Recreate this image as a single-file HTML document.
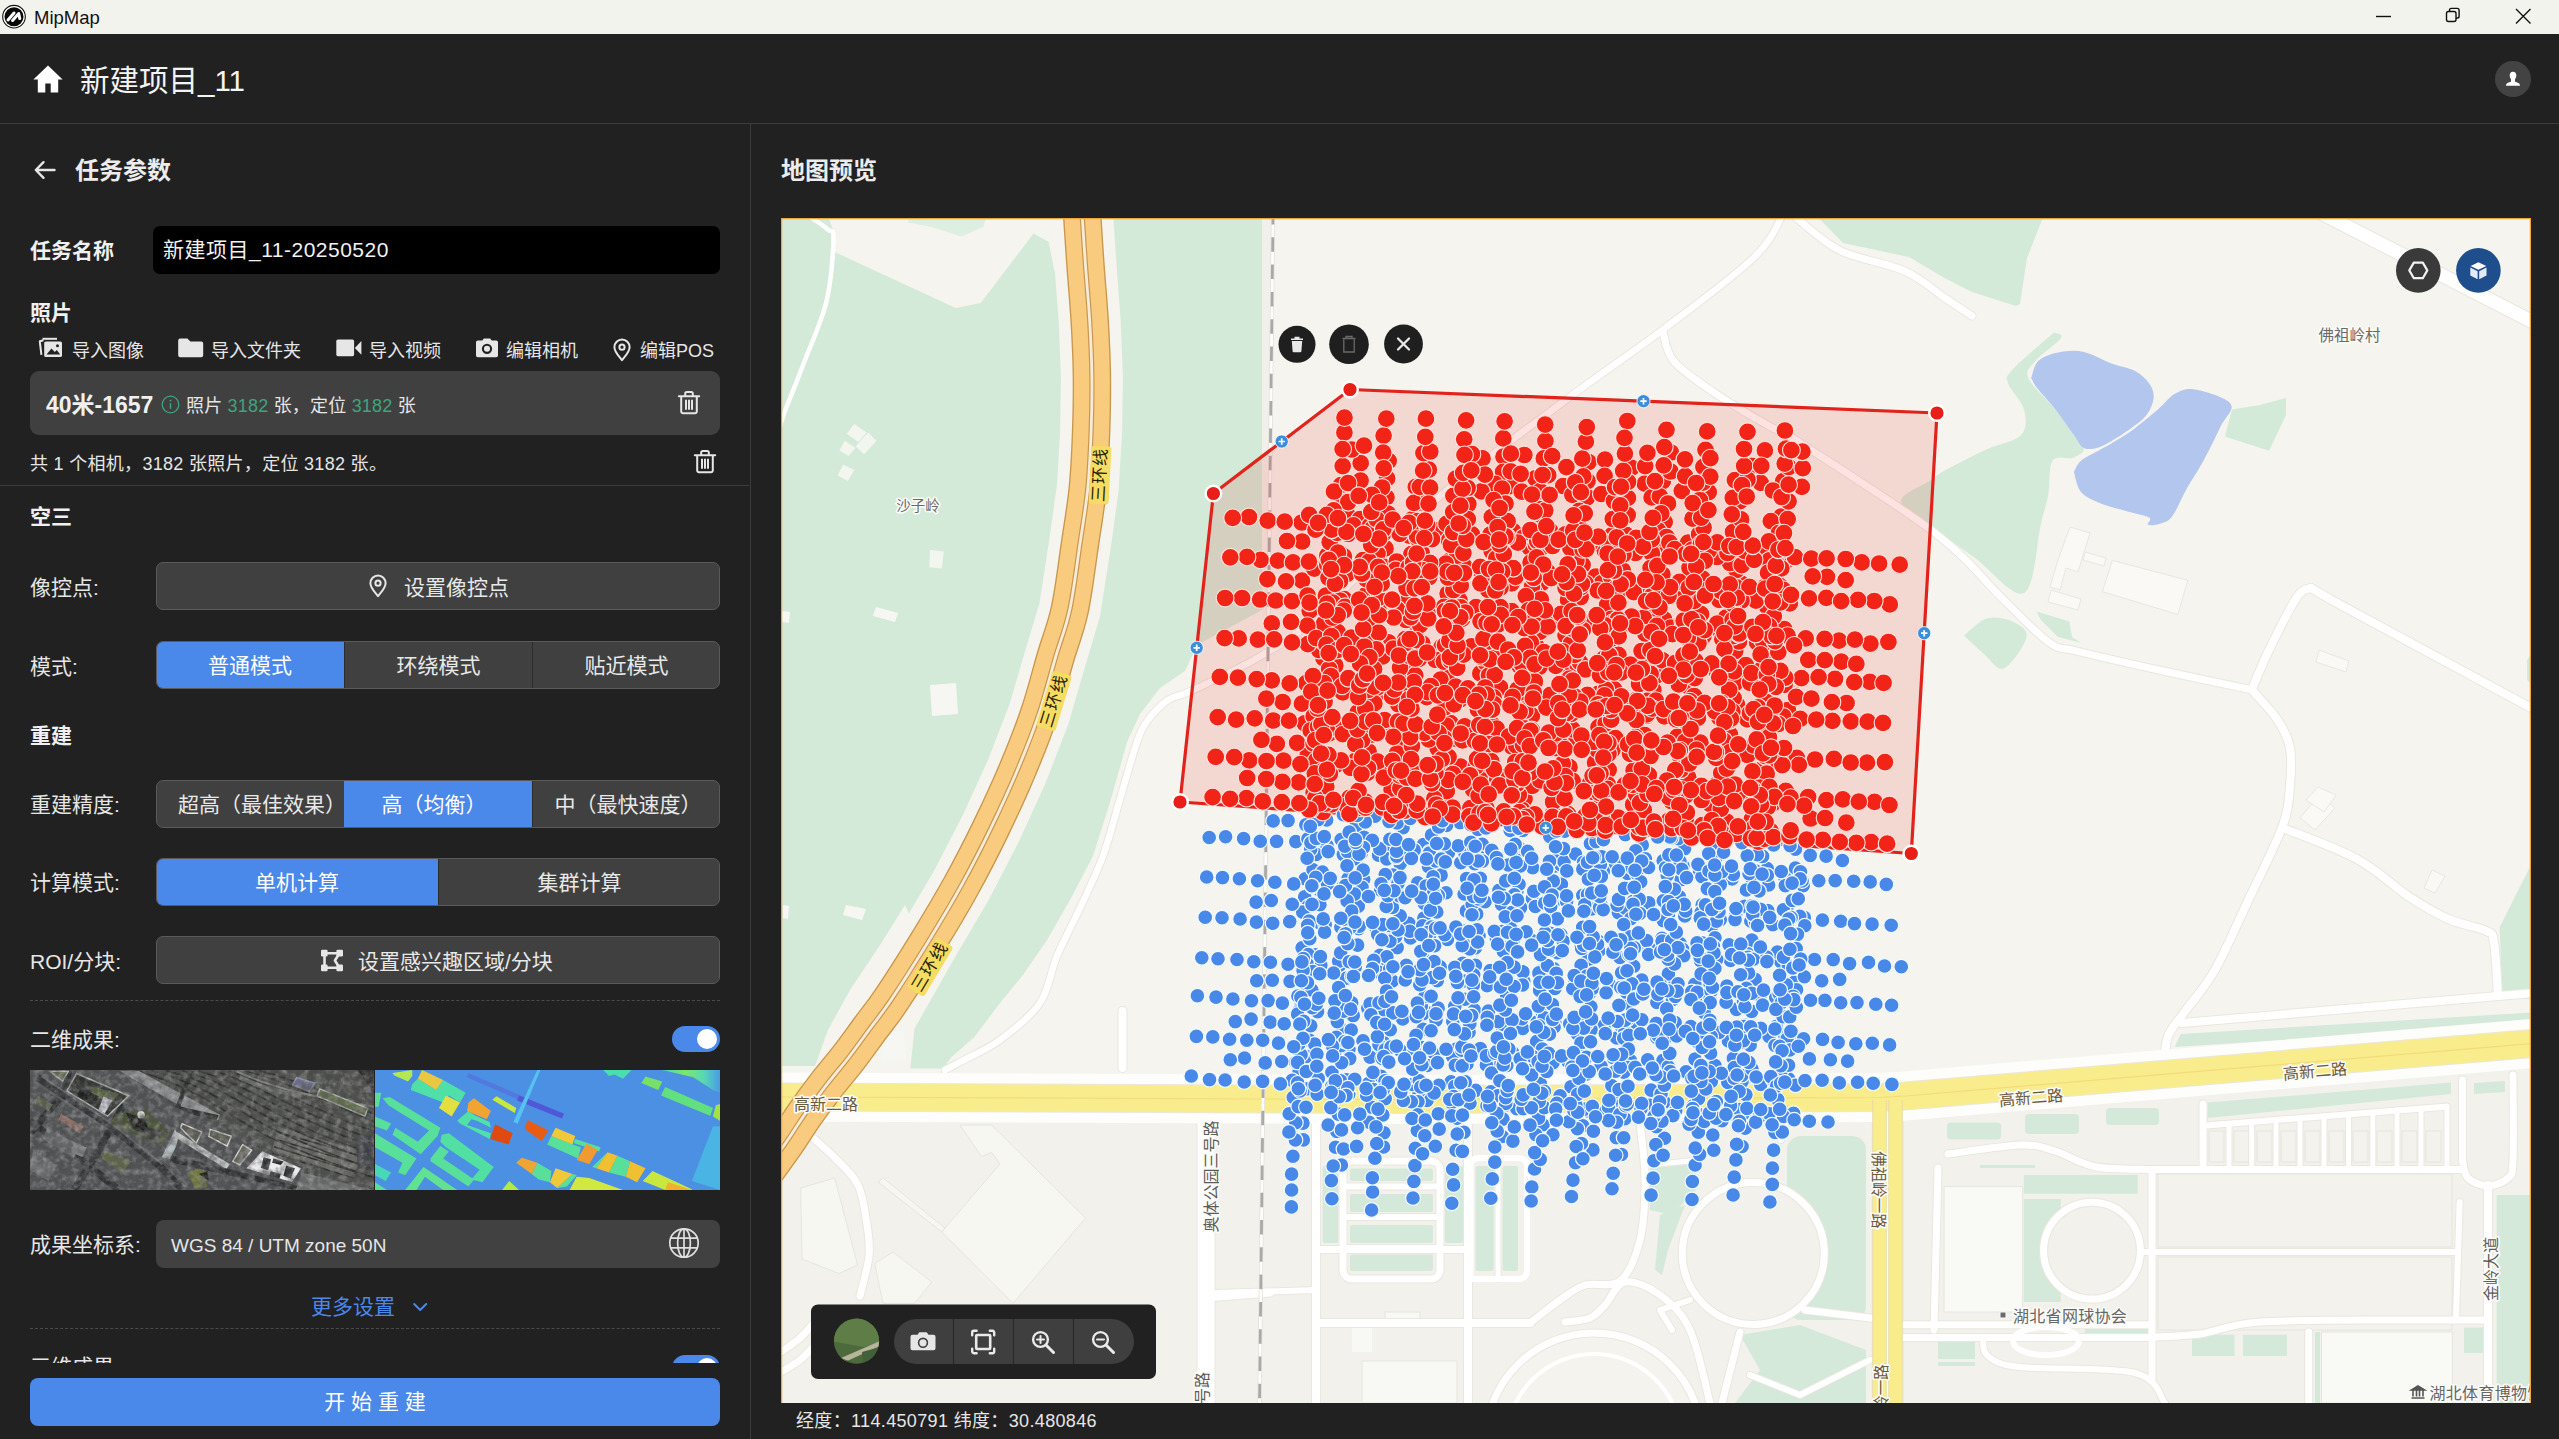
<!DOCTYPE html>
<html lang="zh-CN">
<head>
<meta charset="utf-8">
<title>MipMap</title>
<style>
*{box-sizing:border-box;margin:0;padding:0}
html,body{width:2559px;height:1439px;overflow:hidden;background:#212121}
body{position:relative;font-family:"Liberation Sans","Noto Sans CJK SC",sans-serif;color:#e6e6e6;font-size:21px}
.abs{position:absolute}
.t{position:absolute;white-space:nowrap}
.b{font-weight:700}
#titlebar{position:absolute;left:0;top:0;width:2559px;height:34px;background:#f3f3ee}
#titlebar .name{position:absolute;left:34px;top:1px;line-height:34px;font-size:18.500px;color:#111}
#hdr{position:absolute;left:0;top:34px;width:2559px;height:90px;background:#212121;border-bottom:1px solid #3c3c3c}
#left{position:absolute;left:0;top:124px;width:751px;height:1315px;background:#212121;border-right:1px solid #3c3c3c}
.btn{position:absolute;left:156px;width:564px;height:48px;background:#404040;border:1px solid #5a5a5a;border-radius:7px;overflow:hidden}
.seg{position:absolute;top:-1px;height:48px;line-height:49px;text-align:center;font-size:21px;color:#e8e8e8;white-space:nowrap}
.seg.on{background:#4a88ea;color:#fff}
.seg.sep{border-left:1px solid #2c2c2c}
.lbl{position:absolute;left:30px;font-size:21px;line-height:30px;color:#e6e6e6;white-space:nowrap}
.sec{position:absolute;left:30px;font-size:21px;line-height:30px;font-weight:700;color:#f0f0f0;white-space:nowrap}
.tool{position:absolute;font-size:18px;line-height:26px;color:#e6e6e6;white-space:nowrap}
.dash{position:absolute;left:30px;width:690px;height:0;border-top:1px dashed #4a4a4a}
.toggle{position:absolute;left:672px;width:48px;height:26px;border-radius:13px;background:#4a88ea}
.toggle i{position:absolute;right:3px;top:3px;width:20px;height:20px;border-radius:10px;background:#fff}
svg{display:block}
</style>
</head>
<body>
<div id="titlebar">
<svg class="abs" style="left:2px;top:4px" width="26" height="26" viewBox="0 0 26 26"><circle cx="12" cy="12.700" r="11.300" fill="#fff" stroke="#111" stroke-width="1.100"/><circle cx="12" cy="12.700" r="9.500" fill="#0a0a0a"/><path d="M6 15.900L12 9M10.600 16.500L16.700 9.500L17.800 14.600" fill="none" stroke="#fff" stroke-width="3" stroke-linecap="round" stroke-linejoin="round"/></svg>
<div class="name">MipMap</div>
<svg class="abs" style="left:2370px;top:3px" width="180" height="26" viewBox="2370 4 180 26" fill="none" stroke="#111" stroke-width="1.4"><path d="M2376 17.5h15"/><rect x="2446.500" y="12.5" width="9.5" height="10" rx="2"/><path d="M2449.500 12.500v-1.300a1.800 1.800 0 0 1 1.800 -1.800h6a1.800 1.800 0 0 1 1.800 1.800v6a1.800 1.800 0 0 1 -1.800 1.800h-1.300"/><path d="M2516 10l14.500 14.500M2530.500 10l-14.500 14.500"/></svg>
</div>
<div id="hdr"></div>
<svg class="abs" style="left:32px;top:64px" width="32" height="30" viewBox="0 0 32 30"><path d="M16 1.600 L30.600 15.400 H26.200 V28.600 H18.700 V19.400 H13.300 V28.600 H5.800 V15.400 H1.400 Z" fill="#fff"/></svg>
<div class="t" style="left:80px;top:59px;font-size:29.500px;line-height:44px;color:#f4f4f4">新建项目_11</div>
<svg class="abs" style="left:2495px;top:60.500px" width="36" height="36" viewBox="0 0 36 36"><circle cx="18" cy="18" r="18" fill="#434343"/><ellipse cx="18" cy="14.600" rx="3.300" ry="3.900" fill="#fff"/><path d="M11 24.800c0-2.600 2.400-3.200 5-4v-2.800h4v2.800c2.600 0.800 5 1.400 5 4z" fill="#fff"/></svg>
<div id="left"></div>
<svg class="abs" style="left:33px;top:158px" width="24" height="24" viewBox="0 0 24 24" fill="none" stroke="#e6e6e6" stroke-width="2.400" stroke-linecap="round" stroke-linejoin="round"><path d="M21.500 12H3M10.500 4.200L2.800 12l7.700 7.800"/></svg>
<div class="t b" style="left:75px;top:153px;font-size:24px;line-height:36px;color:#ececec">任务参数</div>

<div class="sec" style="top:236px">任务名称</div>
<div class="abs" style="left:153px;top:226px;width:567px;height:48px;background:#000;border-radius:7px"></div>
<div class="t" style="left:163px;top:235px;font-size:21px;line-height:30px;color:#f2f2f2;letter-spacing:0.500px">新建项目_11-20250520</div>

<div class="sec" style="top:298px">照片</div>

<svg class="abs" style="left:38px;top:337px" width="26" height="22" viewBox="0 0 26 22" fill="none" stroke="#e6e6e6" stroke-width="2.200" stroke-linejoin="round"><path d="M5.500 3.200l-3.700 1.100 1.600 13.600" stroke-width="2"/><rect x="6.200" y="4.500" width="17.800" height="15.500" rx="1.600" fill="#e6e6e6" stroke="none"/><path d="M8.500 17.500l5-6 3.300 3.600 2-2 3.400 4.400z" fill="#212121" stroke="none"/><circle cx="19.500" cy="8.700" r="1.500" fill="#212121" stroke="none"/><path d="M4.500 1.800l14.500 0" stroke-width="2"/></svg>
<div class="tool" style="left:72px;top:338px">导入图像</div>
<svg class="abs" style="left:178px;top:338px" width="26" height="20" viewBox="0 0 26 20"><path d="M2.200 0.600h7.200l3 2.800h10.800a2 2 0 0 1 2 2v11.800a2 2 0 0 1 -2 2h-21a2 2 0 0 1 -2 -2v-14.600a2 2 0 0 1 2 -2z" fill="#e6e6e6"/></svg>
<div class="tool" style="left:211px;top:338px">导入文件夹</div>
<svg class="abs" style="left:336px;top:339px" width="26" height="18" viewBox="0 0 26 18"><rect x="0.300" y="0.600" width="17.800" height="16.600" rx="1.600" fill="#e6e6e6"/><path d="M18.800 8.900l6.600-6.800v13.600z" fill="#e6e6e6"/></svg>
<div class="tool" style="left:369px;top:338px">导入视频</div>
<svg class="abs" style="left:475px;top:338px" width="24" height="20" viewBox="0 0 24 20"><path d="M7.200 2.600l1.700-2.100h6.200l1.700 2.100h4.400a1.800 1.800 0 0 1 1.800 1.800v13a1.800 1.800 0 0 1 -1.800 1.800h-18.400a1.800 1.800 0 0 1 -1.800 -1.800v-13a1.800 1.800 0 0 1 1.800 -1.800z" fill="#e6e6e6"/><circle cx="12" cy="10.800" r="4.100" fill="none" stroke="#212121" stroke-width="2.100"/></svg>
<div class="tool" style="left:506px;top:338px">编辑相机</div>
<svg class="abs" style="left:612px;top:338px" width="20" height="24" viewBox="0 0 20 24" fill="none" stroke="#e6e6e6" stroke-width="2"><path d="M10 22.200c-3.600-4.600-7.600-8.400-7.600-13a7.600 7.600 0 0 1 15.200 0c0 4.600-4 8.400-7.600 13z" stroke-linejoin="round"/><circle cx="10" cy="9.200" r="2.600"/></svg>
<div class="tool" style="left:640px;top:338px">编辑POS</div>

<div class="abs" style="left:30px;top:371px;width:690px;height:64px;background:#404040;border-radius:9px"></div>
<div class="t b" style="left:46px;top:388.500px;font-size:23px;line-height:32px;color:#f0f0f0">40米-1657</div>
<svg class="abs" style="left:161px;top:395px" width="19" height="19" viewBox="0 0 19 19" fill="none" stroke="#3fa37f" stroke-width="1.300"><circle cx="9.500" cy="9.500" r="8.300"/><path d="M9.500 8.200v5.600" stroke-width="1.500"/><circle cx="9.500" cy="5.600" r="0.900" fill="#3fa37f" stroke="none"/></svg>
<div class="t" style="left:186px;top:391.500px;font-size:18px;line-height:28px;color:#e6e6e6;letter-spacing:0.200px">照片 <span style="color:#3fa37f">3182</span> 张，定位 <span style="color:#3fa37f">3182</span> 张</div>
<svg class="abs" style="left:677px;top:390px" width="24" height="25" viewBox="0 0 24 25" fill="none" stroke="#e6e6e6" stroke-width="2" stroke-linecap="round" stroke-linejoin="round"><path d="M1.800 6.200h20.400M8.200 5.800v-2.200a1.600 1.600 0 0 1 1.600 -1.600h4.400a1.600 1.600 0 0 1 1.600 1.600v2.200M4.200 6.600v14.800a1.800 1.800 0 0 0 1.800 1.800h12a1.800 1.800 0 0 0 1.800 -1.800v-14.800M9 10.500v8.500M12 10.500v8.500M15 10.500v8.500"/></svg>

<div class="t" style="left:30px;top:450px;font-size:18px;line-height:28px;color:#e6e6e6;letter-spacing:0.300px">共 1 个相机，3182 张照片，定位 3182 张。</div>
<svg class="abs" style="left:693px;top:449px" width="24" height="25" viewBox="0 0 24 25" fill="none" stroke="#e6e6e6" stroke-width="2" stroke-linecap="round" stroke-linejoin="round"><path d="M1.800 6.200h20.400M8.200 5.800v-2.200a1.600 1.600 0 0 1 1.600 -1.600h4.400a1.600 1.600 0 0 1 1.600 1.600v2.200M4.200 6.600v14.800a1.800 1.800 0 0 0 1.800 1.800h12a1.800 1.800 0 0 0 1.800 -1.800v-14.800M9 10.500v8.500M12 10.500v8.500M15 10.500v8.500"/></svg>
<div class="abs" style="left:0;top:485px;width:749px;height:1px;background:#3c3c3c"></div>

<div class="sec" style="top:502px">空三</div>
<div class="lbl" style="top:573px">像控点:</div>
<div class="btn" style="top:562px"></div>
<svg class="abs" style="left:368px;top:574px" width="20" height="24" viewBox="0 0 20 24" fill="none" stroke="#e6e6e6" stroke-width="2"><path d="M10 22.200c-3.600-4.600-7.600-8.400-7.600-13a7.600 7.600 0 0 1 15.200 0c0 4.600-4 8.400-7.600 13z" stroke-linejoin="round"/><circle cx="10" cy="9.200" r="2.600"/></svg>
<div class="t" style="left:404px;top:573px;font-size:21px;line-height:30px;color:#e8e8e8">设置像控点</div>

<div class="lbl" style="top:652px">模式:</div>
<div class="btn" style="top:641px"><div class="seg on" style="left:-1px;width:188px">普通模式</div><div class="seg sep" style="left:187px;width:188px">环绕模式</div><div class="seg sep" style="left:375px;width:188px">贴近模式</div></div>

<div class="sec" style="top:721px">重建</div>
<div class="lbl" style="top:790px">重建精度:</div>
<div class="btn" style="top:780px"><div class="seg" style="left:-1px;width:188px;padding-left:22px">超高（最佳效果）</div><div class="seg on" style="left:187px;width:188px;text-indent:-8px">高（均衡）</div><div class="seg sep" style="left:375px;width:188px;text-indent:3px">中（最快速度）</div></div>
<div class="lbl" style="top:868px">计算模式:</div>
<div class="btn" style="top:858px"><div class="seg on" style="left:-1px;width:282px">单机计算</div><div class="seg sep" style="left:281px;width:282px">集群计算</div></div>
<div class="lbl" style="top:947px">ROI/分块:</div>
<div class="btn" style="top:936px"></div>
<svg class="abs" style="left:320px;top:949px" width="24" height="23" viewBox="0 0 24 23" fill="none" stroke="#e6e6e6" stroke-width="2.600" stroke-linejoin="round"><path d="M4.500 4.200h15l-4.600 7.300 4.600 7.300h-15z"/><g fill="#e6e6e6" stroke="none"><rect x="1" y="0.800" width="6.600" height="6.600" rx="1.200"/><rect x="16.400" y="0.800" width="6.600" height="6.600" rx="1.200"/><rect x="1" y="15.600" width="6.600" height="6.600" rx="1.200"/><rect x="16.400" y="15.600" width="6.600" height="6.600" rx="1.200"/></g></svg>
<div class="t" style="left:358px;top:947px;font-size:21px;line-height:30px;color:#e8e8e8">设置感兴趣区域/分块</div>
<div class="dash" style="top:1000px"></div>

<div class="lbl" style="top:1025px">二维成果:</div>
<div class="toggle" style="top:1026px"><i></i></div>
<svg class="abs" style="left:30px;top:1070px" width="344" height="120" viewBox="68 65 2447 860" preserveAspectRatio="none">
<defs><filter id="nz" x="0" y="0" width="100%" height="100%"><feTurbulence type="fractalNoise" baseFrequency="0.018 0.018" numOctaves="3" seed="11" result="n"/><feColorMatrix in="n" type="matrix" values="0 0 0 0 0.1  0 0 0 0 0.1  0 0 0 0 0.1  1.6 0 0 0 -0.55"/></filter>
<filter id="nz2" x="0" y="0" width="100%" height="100%"><feTurbulence type="fractalNoise" baseFrequency="0.022 0.022" numOctaves="3" seed="3" result="n"/><feColorMatrix in="n" type="matrix" values="0 0 0 0 0.8  0 0 0 0 0.8  0 0 0 0 0.8  0 1.5 0 0 -0.62"/></filter>
<clipPath id="c1"><rect x="68" y="65" width="2447" height="860"/></clipPath></defs>
<g clip-path="url(#c1)">
<rect x="68" y="65" width="2447" height="860" fill="#53565a"/>
<path d="M640 60 L2520 60 L2520 925 L2100 925 L1990 770 L1720 640 L1420 470 L1100 330 Z" fill="#4a4c49"/>
<path d="M1830 470 L2470 660 L2350 830 L1790 640 Z" fill="#6a6b66"/>
<g fill="none" stroke="#2d2f2b" stroke-width="12">
<path d="M820 70 C1300 200 1500 420 1800 560 S2300 760 2520 840"/>
<path d="M930 70 C1360 180 1570 390 1860 520 S2320 710 2520 780"/>
<path d="M1040 70 C1420 165 1640 360 1920 485 S2340 665 2520 720"/>
<path d="M1150 70 C1480 155 1700 330 1975 455 S2360 620 2520 665"/>
<path d="M1260 70 C1540 145 1765 300 2030 420 S2380 575 2520 610"/>
<path d="M1370 70 C1600 135 1830 275 2085 390 S2400 530 2520 555"/>
<path d="M1480 70 C1670 125 1900 250 2140 355 S2430 480 2520 500"/>
<path d="M1590 70 C1900 150 2200 300 2520 440"/>
<path d="M1700 70 C2000 150 2250 260 2520 385"/>
<path d="M1845 515 L2455 690M1825 565 L2430 745M1805 615 L2400 800M1790 660 L2370 840" stroke-width="10"/>
</g>
<path d="M1540 75 C1800 200 2100 260 2520 330" fill="none" stroke="#7d7f7a" stroke-width="14"/>
<path d="M1560 120 C1760 210 1900 230 2000 250" fill="none" stroke="#8a8c88" stroke-width="30" opacity="0.5"/>
<path d="M700 70 L840 70 L1420 385 L1405 425 L1150 330 Z" fill="#8e9093"/>
<path d="M980 290 L1410 390 L1395 425 L960 320 Z" fill="#2c2d2b"/>
<path d="M1232 70 L1200 70 L1062 440 L1092 452 Z" fill="#2b2d2c"/>
<path d="M68 65 L700 65 L1100 330 L1420 470 L1720 640 L1990 770 L2100 925 L68 925 Z" fill="#4e5052"/>
<g fill="none" stroke="#2e3033" stroke-width="50"><path d="M120 120 L640 470 L1000 760 L1150 925"/><path d="M345 65 L310 230 L68 520"/><path d="M740 300 L560 640 L380 925"/><path d="M68 430 L420 700 L700 925"/></g>
<g fill="none" stroke="#5e6064" stroke-width="14"><path d="M150 110 L650 450 L1010 740"/><path d="M100 150 L620 490"/></g>
<g stroke="#b4b7b1" stroke-width="10" fill="#2f312d">
<path d="M400 90 L770 250 L620 395 L330 215 Z"/><path d="M210 75 L340 75 L300 145 Z" fill="#5e6a4c"/>
<path d="M1150 450 L1290 510 L1250 590 L1140 480 Z" fill="#5c5b50" stroke="#d6d7d2"/><path d="M1350 490 L1500 540 L1470 610 L1340 540 Z" fill="#5c5b50" stroke="#d6d7d2"/><path d="M1580 600 L1645 640 L1560 745 L1510 720 Z" fill="#6b685d" stroke="#d6d7d2"/>
<path d="M2130 200 L2470 340 L2450 395 L2110 250 Z" fill="#5f6d4a"/><path d="M1965 120 L2095 160 L2055 218 L1935 172 Z" fill="#6b6e8a" stroke="#8c8ea4"/>
</g>
<path d="M680 380 L900 350 L1060 520 L1000 610 L640 450 Z" fill="#495336"/><path d="M750 370 L880 410 L930 540 L800 490 Z" fill="#1d1e1c"/><path d="M880 470 L1010 500 L980 580 L900 560 Z" fill="#3a3c3a"/>
<path d="M520 185 L700 235 L650 300 L490 240 Z" fill="#54623a"/><path d="M420 185 L560 255 L520 315 L370 235 Z" fill="#1f201f"/>
<path d="M600 640 L790 720 L720 800 L580 700 Z" fill="#5f6947"/><path d="M1180 800 L1300 760 L1330 900 L1250 925 Z" fill="#6f7440"/><path d="M1270 810 L1330 790 L1340 860 Z" fill="#1c1c18"/>
<path d="M590 255 L655 280 L600 375 L555 352 Z" fill="#cfd1dc"/><circle cx="858" cy="385" r="26" fill="#ececec"/>
<path d="M1100 490 L1135 560 L1060 705 L1005 690 Z" fill="#b3bbc0"/><path d="M1100 500 L1490 740 L1465 775 L1100 565 Z" fill="#c6c8c8"/><path d="M1120 560 L1440 760 L1090 690 Z" fill="#46484b"/>
<path d="M1090 680 L2100 925 L1950 925 L1060 725 Z" fill="#2d2f31"/>
<path d="M1720 648 L1995 770 L1932 868 L1608 770 Z" fill="#ededed"/><path d="M1730 690 L1782 705 L1762 782 L1710 767 Z M1800 700 L1872 720 L1852 746 L1790 730 Z M1890 750 L1952 770 L1922 842 L1870 822 Z M1780 790 L1852 810 L1842 842 L1770 822 Z" fill="#26282c"/>
<path d="M2400 65 L2520 65 L2520 240 Z" fill="#29282a"/><path d="M2000 800 L2515 925 L1960 925 Z" fill="#707272"/><path d="M2380 560 L2520 500 L2520 800 L2400 760 Z" fill="#3c3e44"/>
<path d="M190 480 L420 600 L380 700 L160 560 Z" fill="#66686a"/><path d="M90 640 L260 750 L200 860 L68 780 Z" fill="#6f7072"/><path d="M290 380 L450 470 L420 520 L270 420 Z" fill="#8f7166"/>
<path d="M380 580 L470 620 L440 690 L360 650 Z" fill="#7d868a"/><path d="M120 250 L230 310 L200 360 L100 300 Z" fill="#5a6048"/>
<rect x="68" y="65" width="2447" height="860" filter="url(#nz)"/>
<rect x="68" y="65" width="2447" height="860" filter="url(#nz2)" opacity="0.45"/>
</g>
</svg>
<svg class="abs" style="left:375px;top:1070px" width="345" height="120" viewBox="35 68 2455 857" preserveAspectRatio="none">
<defs><clipPath id="c2"><rect x="35" y="68" width="2455" height="857"/></clipPath>
<linearGradient id="gy" x1="0" y1="0" x2="1" y2="0"><stop offset="0" stop-color="#46d8c0"/><stop offset="0.400" stop-color="#7ce868"/><stop offset="0.720" stop-color="#56d8b4"/><stop offset="1" stop-color="#4a9ae8"/></linearGradient></defs>
<g clip-path="url(#c2)">
<rect x="35" y="68" width="2455" height="857" fill="#4c90e4"/>
<path d="M700 90 L1380 380 L1365 415 L690 120 Z" fill="#5566dc" opacity="0.55"/><path d="M1060 250 L1380 380 L1365 415 L1045 285 Z" fill="#5058d8"/>
<path d="M1190 68 L1212 68 L1050 452 L1020 440 Z" fill="#55c2f0"/>
<path d="M2440 470 L2490 470 L2490 925 L2290 860 Z" fill="#4ab4e4"/>
<g fill="#58e09a">
<path d="M300 170 L340 130 L470 210 L520 140 L680 230 L640 300 L560 250 L520 300 L290 210 Z" fill="#4fe0a8"/>
<path d="M90 270 L140 260 L500 480 L480 540 L360 670 L160 530 L180 480 L340 580 L420 500 L130 320 Z"/>
<path d="M35 230 L80 230 L60 330 L35 330 Z"/><path d="M35 400 L150 450 L120 500 L35 470 Z"/><path d="M35 520 L330 700 L250 820 L200 800 L230 730 L35 620 Z"/><path d="M35 740 L150 800 L110 860 L35 820 Z" fill="#48d8b8"/><path d="M35 870 L120 925 L35 925 Z"/>
<path d="M510 530 L560 520 L880 760 L800 870 L720 850 L780 780 L540 620 L500 580 Z" fill="#52e0a2"/>
<path d="M430 700 L500 610 L560 650 L520 700 L740 850 L700 900 L430 720 Z"/>
<path d="M250 925 L380 760 L620 925 L520 925 L390 830 L330 925 Z" fill="#60e290"/>
<path d="M620 430 L700 360 L740 390 L850 440 L860 480 L760 430 L720 420 L690 460 L860 520 L850 560 L640 450 Z" fill="#50e0a8"/>
<path d="M1290 540 L1440 600 L1500 620 L1480 700 L1260 600 Z"/><path d="M1460 560 L1640 620 L1630 650 L1450 590 Z"/>
<path d="M1150 810 L1190 730 L1290 790 L1280 870 L1200 850 Z"/><path d="M1440 810 L1470 820 L1400 900 L1330 910 Z"/>
<path d="M1760 680 L1850 720 L1820 830 L1700 800 Z"/><path d="M1580 760 L1690 655 L1610 770 Z"/>
<path d="M1660 68 L1860 68 L1800 130 L1740 100 L1700 110 Z" fill="#48e0b0"/><path d="M1960 115 L2080 150 L2050 210 L1930 160 Z" fill="#76e068"/>
<path d="M2100 190 L2440 340 L2420 395 L2070 250 Z" fill="#62e080"/>
</g>
<path d="M2080 68 L2490 68 L2490 230 L2440 210 L2300 120 Z" fill="url(#gy)"/><path d="M2460 320 L2490 310 L2490 430 L2440 400 Z" fill="#a4e244"/>
<path d="M160 90 L300 68 L300 110 L270 150 L170 105 Z" fill="#b4e850"/>
<path d="M370 68 L520 140 L470 210 L340 130 Z" fill="#e8c840"/><path d="M540 250 L640 300 L580 400 L490 340 Z" fill="#e2e040"/>
<path d="M700 300 L740 270 L860 360 L830 420 L690 360 Z" fill="#f0a432"/>
<path d="M870 280 L900 255 L1040 340 L1030 375 Z" fill="#c8e840"/>
<path d="M890 455 L1015 520 L985 600 L855 560 Z" fill="#e04a10"/><path d="M1120 425 L1270 500 L1220 575 L1100 490 Z" fill="#e85c16"/>
<path d="M1320 480 L1460 540 L1440 600 L1290 540 Z" fill="#f0c83a"/>
<path d="M1540 595 L1620 640 L1560 740 L1470 710 Z" fill="#f09a32"/>
<path d="M1040 730 L1080 695 L1190 730 L1150 810 Z" fill="#f0a432"/>
<path d="M1320 770 L1440 810 L1330 910 L1280 870 Z" fill="#f0c83a"/>
<path d="M1690 655 L1760 680 L1700 800 L1610 770 Z" fill="#f0c030"/><path d="M1850 720 L1960 770 L1900 870 L1820 830 Z" fill="#f0c030"/>
<path d="M1470 830 L1560 840 L1800 925 L1420 925 Z" fill="#d0e840"/>
<path d="M1940 860 L2010 790 L2290 920 L2290 925 L2100 925 Z" fill="#c8e840"/><path d="M2120 870 L2290 925 L2100 925 Z" fill="#f0b030"/>
<path d="M940 925 L990 860 L1060 925 Z" fill="#b8e848"/>
</g>
</svg>
<div class="lbl" style="top:1230px">成果坐标系:</div>
<div class="abs" style="left:156px;top:1220px;width:564px;height:48px;background:#414141;border-radius:8px"></div>
<div class="t" style="left:171px;top:1231px;font-size:19px;line-height:30px;color:#e6e6e6">WGS 84 / UTM zone 50N</div>
<svg class="abs" style="left:668px;top:1227px" width="32" height="32" viewBox="0 0 32 32" fill="none" stroke="#e0e0e0" stroke-width="1.700"><circle cx="16" cy="16" r="14.200"/><ellipse cx="16" cy="16" rx="6.400" ry="14.200"/><path d="M16 1.800v28.400M2.600 11.200h26.800M2.600 20.800h26.800"/></svg>
<div class="t" style="left:311px;top:1292px;font-size:21px;line-height:30px;color:#4a88ea">更多设置</div>
<svg class="abs" style="left:412px;top:1301px" width="16" height="12" viewBox="0 0 16 12" fill="none" stroke="#4a88ea" stroke-width="2" stroke-linecap="round" stroke-linejoin="round"><path d="M2.200 3l6 6 6-6"/></svg>
<div class="dash" style="top:1328px"></div>
<div class="abs" style="left:0;top:1340px;width:749px;height:23px;overflow:hidden">
<div class="lbl" style="top:12px">三维成果:</div>
<div class="toggle" style="top:15px"><i></i></div>
</div>
<div class="abs" style="left:30px;top:1378px;width:690px;height:48px;background:#4a88ea;border-radius:8px;text-align:center;line-height:47px;font-size:21px;color:#fff;white-space:pre">开 始 重 建</div>
<div class="t b" style="left:781px;top:153px;font-size:24px;line-height:36px;color:#ececec">地图预览</div>
<div class="t" style="left:796px;top:1407px;font-size:18px;line-height:28px;color:#e6e6e6;letter-spacing:0.350px">经度：114.450791 纬度：30.480846</div>
<svg class="abs" style="left:781px;top:218px" width="1750" height="1185" viewBox="781 218 1750 1185" font-family="'Liberation Sans','Noto Sans CJK SC',sans-serif">
<defs><clipPath id="mc"><rect x="781" y="218" width="1750" height="1185"/></clipPath></defs>
<g clip-path="url(#mc)">
<rect x="781" y="218" width="1750" height="1185" fill="#f5f4ee"/>
<polygon points="781,1117 1880,1117 2531,1062 2531,1403 781,1403" fill="#f2f1eb"/>
<polygon points="775,210 1050.6,210 1050.6,207 1054.6,267.8 1058.8,322.8 1060.9,377.4 1060.1,430.9 1057,484.9 1049.3,539.1 1039.4,603.5 1025.9,648.2 1009.6,704.1 988.4,759 963.1,814.5 934.5,870 901.6,925.8 865.3,982.7 845,1010.1 824.5,1038.1 828,1066 775,1066" fill="#d3ead8"/>
<polygon points="827.8,215.6 834.8,235 833.9,251.7 955.7,307.9 980.7,303.1 1033.5,233.6 1048.8,242 1054.4,271.2 1066.9,271.2 1066.9,215.6" fill="#f5f4ee"/>
<polygon points="908.4,215.6 986.3,215.6 983.5,226.7 961.3,236.4 930.7,226.7 908.4,222.5" fill="#dcefe0"/>
<polygon points="905,905 880,945 850,990 828,1030 815,1066 880,1066 930,960" fill="#f5f4ee"/>
<path d="M808.4 215.6C811.6 217.9 823.7 225.5 827.8 229.5C832 233.4 833.6 227.1 833.4 239.2C833.2 251.2 831.5 280.7 826.4 301.7C821.3 322.8 810 346.7 802.8 365.7C795.6 384.7 787.5 404.1 783.3 415.7C779.2 427.3 778.7 431.9 777.8 435.2" fill="none" stroke="#fff" stroke-width="4.500" stroke-linecap="round"/>
<polygon points="854.2,424.1 866.7,432.4 858.4,442.1 846.7,433.8" fill="#f3f5ef"/>
<polygon points="868.1,432.4 876.5,440.7 864,454.6 855.6,446.3" fill="#f3f5ef"/>
<polygon points="844.5,440.7 855.6,447.7 848.7,456 839.5,450.5" fill="#f3f5ef"/>
<polygon points="843.1,464.4 854.2,469.9 847.8,481.1 837.6,475.5" fill="#f3f5ef"/>
<polygon points="929.9,549.7 943.8,551.4 941.8,568.6 929.3,567.2" fill="#f3f5ef"/>
<polygon points="930,685 956,683 958,714 932,716" fill="#f6f7f2"/>
<polygon points="876,607 898,613 895,622 873,616" fill="#f6f7f2"/>
<polygon points="782,611 790,612 789,623 782,622" fill="#f6f7f2"/>
<polygon points="846,905 866,909 862,920 843,915" fill="#f6f7f2"/>
<polygon points="783,905 789,906 788,919 783,918" fill="#f6f7f2"/>
<polygon points="880,1030 904,1031 906,1060 881,1061" fill="#f6f7f2"/>
<polygon points="1112.4,210 1112.4,203 1116.4,263.4 1120.6,319.2 1122.9,376.6 1122.1,433.1 1118.6,491.1 1110.7,548.1 1100,616.5 1085.3,665.8 1068.4,723.9 1045.6,783 1018.9,841.5 988.7,900 954.4,958.2 914.6,1028.5 910.3,1068.4 943,1068.4 951.6,1057 974.4,1037 1000,1003 1023,975 1047,940 1070,900 1093,856 1111,799 1127,742 1140,714 1160,688 1185,671 1197,645 1262,610 1262,210" fill="#d3ead8"/>
<rect x="1262" y="218" width="9" height="400" fill="#f1f0ea"/>
<polygon points="1811,210 2046,210 2027,258 2020,304 2016,306 1972,292 1944.5,278 1909,257 1843,243" fill="#d3ead8"/>
<path d="M2054 332.5C2055.2 333.4 2064.1 333.2 2061 338C2057.9 342.8 2040.9 354.3 2035.4 361C2030 367.7 2025 369.9 2028.3 378C2031.6 386.1 2047.8 399.9 2055.4 409.4C2063 418.9 2069.2 428.4 2073.9 435C2078.6 441.6 2084 445.5 2083.8 449.3C2083.6 453.1 2077.7 456 2072.5 457.9C2067.3 459.8 2056.6 454.5 2052.5 460.7C2048.4 466.9 2050.1 484.6 2048.2 495C2046.3 505.4 2045 507.1 2041 523.4C2037 539.7 2035 587.2 2024 593C2013 598.8 1990.7 569.3 1975 558C1959.3 546.7 1942.3 534.5 1930 525C1917.7 515.5 1901 508.4 1901 501C1901 493.6 1922.3 486 1930 480.7C1937.7 475.4 1937.5 474.5 1947 469.3C1956.5 464.1 1974.6 455 1987 449.3C1999.4 443.6 2015 441.6 2021.2 435C2027.4 428.4 2026.2 417.9 2024 409.4C2021.8 400.9 2010.2 390.4 2008.3 383.8C2006.4 377.2 2005 378.1 2012.6 369.5C2020.2 360.9 2047.1 338.7 2054 332.5 Z" fill="#d3ead8"/>
<polygon points="2232,409.4 2260,405 2286,398 2286,415 2269,450.7 2224.9,436.5" fill="#d3ead8"/>
<path d="M1964 635.6C1967.8 632.8 1978.7 620.9 1986.8 618.5C1994.9 616.1 2005.8 618.3 2012.4 621.4C2019 624.5 2028 629.2 2026.6 637C2025.2 644.8 2010.9 665.6 2003.8 668.4C1996.7 671.2 1990.6 659.5 1984 654C1977.4 648.5 1967.3 638.7 1964 635.6 Z" fill="#d3ead8"/>
<polygon points="2036.6,611.4 2069.4,621.4 2072,637 2080.8,642.7 2058,637 2040.9,620" fill="#d3ead8"/>
<polygon points="2531,865 2513.8,899 2499.6,927.6 2502.4,999 2531,999" fill="#d3ead8"/>
<polygon points="2531,655 2527,660 2527,680 2531,684" fill="#d3ead8"/>
<path d="M2031.1 378.1C2032.3 375.2 2033.8 365.3 2038.3 361C2042.8 356.7 2050.6 354 2058.2 352.5C2065.8 351 2074.8 350 2083.8 351.9C2092.8 353.8 2103.8 360.6 2112.3 363.8C2120.9 367 2128.9 367.7 2135.1 371C2141.3 374.3 2146.3 379.3 2149.4 383.8C2152.5 388.3 2154.1 392.8 2153.6 398C2153.1 403.2 2150.5 409.9 2146.5 415.1C2142.5 420.3 2137 424.2 2129.4 429.4C2121.8 434.6 2108.5 443.4 2100.9 446.5C2093.3 449.6 2088.3 449.8 2083.8 447.9C2079.3 446 2078.6 441.5 2073.9 435.1C2069.2 428.7 2061.3 417 2055.4 409.4C2049.5 401.8 2042.3 394.7 2038.3 389.5C2034.2 384.3 2032.3 380 2031.1 378.1 Z" fill="#b3c6ee"/>
<path d="M2073.9 472.1C2075.1 470.2 2076.5 464.5 2081 460.7C2085.5 456.9 2092.8 454.1 2100.9 449.3C2109 444.6 2119.9 438.9 2129.4 432.2C2138.9 425.5 2150.3 415.8 2157.9 409.4C2165.5 403 2168.8 397.1 2175 393.8C2181.2 390.5 2185.6 387.9 2194.9 389.5C2204.2 391.1 2226.3 397.5 2230.6 403.7C2234.9 409.9 2225.1 417 2220.6 426.5C2216.1 436 2209.2 450.2 2203.5 460.7C2197.8 471.1 2191.6 479.9 2186.4 489.2C2181.2 498.5 2176.5 510.6 2172.2 516.3C2167.9 522 2164.8 522 2160.8 523.4C2156.8 524.8 2149.9 525.8 2148 524.8C2146.1 523.8 2152.5 519.8 2149.4 517.7C2146.3 515.6 2137.5 514.4 2129.4 512C2121.3 509.6 2109 506.7 2100.9 503.4C2092.8 500.1 2085.5 497.2 2081 492C2076.5 486.8 2075.1 475.4 2073.9 472.1 Z" fill="#b3c6ee"/>
<polygon points="2112.3,560.4 2187.8,580.3 2177.9,614.5 2102.4,591.7" fill="#faf9f5" stroke="#e8e7e0" stroke-width="1"/>
<polygon points="2051,590 2081,599 2078,610 2048,602" fill="#faf9f5" stroke="#e8e7e0" stroke-width="1"/>
<polygon points="2070,527 2090,533 2078,572 2066,568 2060,590 2050,587 2058,560" fill="#faf9f5" stroke="#e8e7e0" stroke-width="1"/>
<polygon points="2085,552 2106,558 2104,566 2083,560" fill="#faf9f5" stroke="#e8e7e0" stroke-width="1"/>
<polygon points="2319,650 2349,661 2346,672 2316,662" fill="#faf9f5" stroke="#e8e7e0" stroke-width="1"/>
<polygon points="2319,795 2335,808 2315,830 2300,818" fill="#faf9f5" stroke="#e8e7e0" stroke-width="1"/>
<polygon points="2432,870 2445,876 2435,893 2424,888" fill="#faf9f5" stroke="#e8e7e0" stroke-width="1"/>
<polygon points="2306,800 2318,787 2336,795 2324,812" fill="#faf9f5" stroke="#e8e7e0" stroke-width="1"/>
<polygon points="2174.8,1047 2180.5,1034 2531,1012.5 2531,1024" fill="#d5e9da"/>
<polygon points="2207.5,1102.6 2451,1082.6 2451,1094 2207.5,1118" fill="#d5e9da"/>
<polygon points="2474,1083 2505,1081 2505,1092 2474,1094" fill="#d5e9da"/>
<rect x="1947" y="1122.5" width="54" height="17.1" fill="#d5e9da" rx="4"/>
<rect x="2025" y="1114" width="54" height="20" fill="#d5e9da" rx="4"/>
<rect x="2106" y="1108" width="53" height="17" fill="#d5e9da" rx="4"/>
<rect x="1787" y="1136" width="79" height="184" fill="#d5e9da" rx="14"/>
<rect x="2023.8" y="1175" width="113.9" height="18.7" fill="#d5e9da"/>
<rect x="2023.8" y="1199" width="37" height="103" fill="#d5e9da"/>
<rect x="2496.7" y="1195" width="34.3" height="208" fill="#d5e9da"/>
<rect x="2192" y="1334.8" width="42.6" height="21.2" fill="#d5e9da"/>
<rect x="2243" y="1334.8" width="44" height="21.2" fill="#d5e9da"/>
<rect x="1938" y="1342" width="37" height="17" fill="#d5e9da"/>
<rect x="2464" y="1327.6" width="20" height="25.4" fill="#d5e9da"/>
<rect x="1938" y="1362" width="37" height="4" fill="#d5e9da"/>
<rect x="1980" y="1165" width="55" height="3" fill="#d5e9da"/>
<rect x="2085" y="1328" width="65" height="6" fill="#d5e9da"/>
<rect x="2315" y="1332" width="5" height="71" fill="#d5e9da"/>
<rect x="1350" y="1168.5" width="83" height="12.5" fill="#d5e9da" rx="2"/>
<rect x="1350" y="1194" width="83" height="18" fill="#d5e9da" rx="2"/>
<rect x="1350" y="1225" width="83" height="18" fill="#d5e9da" rx="2"/>
<rect x="1350" y="1254.6" width="83" height="16.4" fill="#d5e9da" rx="2"/>
<rect x="1322.7" y="1166" width="15.3" height="77" fill="#d5e9da" rx="2"/>
<rect x="1445" y="1166" width="18" height="77" fill="#d5e9da" rx="2"/>
<rect x="1475.6" y="1166" width="18" height="105" fill="#d5e9da" rx="2"/>
<rect x="1502.6" y="1166" width="15.4" height="105" fill="#d5e9da" rx="2"/>
<polygon points="1650,1168 1690,1164 1700,1185 1672,1215 1650,1210" fill="#d5e9da"/>
<polygon points="1660,1215 1685,1205 1668,1250 1662,1275 1655,1270" fill="#d5e9da"/>
<polygon points="1740,1335 1800,1325 1866,1350 1866,1403 1735,1403 1760,1370" fill="#d5e9da"/>
<polygon points="1290,1128 1312,1128 1312,1160 1290,1160" fill="#f2f1eb"/>
<polygon points="960,1125 991.5,1125 1085.5,1218 1013,1303.4 941.7,1232 1000,1164 991.5,1152.4 981.5,1156.7" fill="#f7f7f2" stroke="#e6e5de" stroke-width="1"/>
<polygon points="878,1182 883.4,1178 945,1228 941.7,1232" fill="#f7f7f2" stroke="#e6e5de" stroke-width="1"/>
<polygon points="800.6,1188 834.8,1178 857.6,1265 839,1273.5 802,1259" fill="#f7f7f2" stroke="#e6e5de" stroke-width="1"/>
<polygon points="874.7,1263.5 893,1252 931.7,1282 914.6,1303.4 883,1303.4" fill="#f7f7f2" stroke="#e6e5de" stroke-width="1"/>
<rect x="1944" y="1186.6" width="78.4" height="125.4" fill="#f9f9f5" stroke="#e6e5de" stroke-width="1"/>
<rect x="2321.5" y="1332" width="131.1" height="71" fill="#f9f9f5" stroke="#e6e5de" stroke-width="1"/>
<rect x="1362" y="1361" width="95" height="42" fill="#f8f8f4" stroke="#e6e5de" stroke-width="1"/>
<rect x="1385" y="1312" width="35" height="10" fill="#f8f8f4" stroke="#e6e5de" stroke-width="1"/>
<rect x="1550" y="1392" width="100" height="11" fill="#f8f8f4" stroke="#e6e5de" stroke-width="1"/>
<rect x="1352" y="1327" width="20" height="25" fill="#f8f8f4"/>
<rect x="2439" y="1192" width="8" height="51" fill="#f8f8f4" stroke="#e6e5de" stroke-width="1"/>
<rect x="2439" y="1258" width="8" height="52" fill="#f8f8f4" stroke="#e6e5de" stroke-width="1"/>
<rect x="2158" y="1174" width="294" height="73" fill="#f3f2ec" stroke="#e6e5de" stroke-width="1"/>
<rect x="2158" y="1257" width="294" height="73" fill="#f3f2ec" stroke="#e6e5de" stroke-width="1"/>
<rect x="2209" y="1131" width="15" height="31" fill="#f3f2ec" stroke="#e6e5de" stroke-width="1"/>
<rect x="2234" y="1131" width="15" height="31" fill="#f3f2ec" stroke="#e6e5de" stroke-width="1"/>
<rect x="2257" y="1131" width="15" height="31" fill="#f3f2ec" stroke="#e6e5de" stroke-width="1"/>
<rect x="2281" y="1131" width="15" height="31" fill="#f3f2ec" stroke="#e6e5de" stroke-width="1"/>
<rect x="2305" y="1131" width="15" height="31" fill="#f3f2ec" stroke="#e6e5de" stroke-width="1"/>
<rect x="2329" y="1131" width="15" height="31" fill="#f3f2ec" stroke="#e6e5de" stroke-width="1"/>
<rect x="2353" y="1131" width="15" height="31" fill="#f3f2ec" stroke="#e6e5de" stroke-width="1"/>
<rect x="2377" y="1131" width="15" height="31" fill="#f3f2ec" stroke="#e6e5de" stroke-width="1"/>
<rect x="2402" y="1131" width="15" height="31" fill="#f3f2ec" stroke="#e6e5de" stroke-width="1"/>
<rect x="2426" y="1131" width="15" height="31" fill="#f3f2ec" stroke="#e6e5de" stroke-width="1"/>
<path d="M1784 212C1779.1 219.5 1774.7 237.4 1754.5 257C1734.3 276.6 1693.9 306.2 1663 329.6C1632.1 353 1607.3 368.9 1569 397.6C1530.7 426.3 1475.2 465.4 1433 502C1390.8 538.6 1345 591.2 1316 617C1287 642.8 1279.8 644.7 1259 657C1238.2 669.3 1206.2 683.8 1191 691C1175.8 698.2 1175.2 695.2 1168 700C1160.8 704.8 1153.2 713 1148 720C1142.8 727 1141.7 728.8 1137 742C1132.3 755.2 1125.7 780 1120 799C1114.3 818 1109.7 837.8 1103 856C1096.3 874.2 1087.7 891.3 1080 908C1072.3 924.7 1063.7 940.2 1057 956C1050.3 971.8 1049.5 989 1040 1003C1030.5 1017 1013.3 1030.2 1000 1040C986.7 1049.8 969.2 1057 960 1062C950.8 1067 947.5 1068.7 945 1070" fill="none" stroke="#e9e7df" stroke-width="8.5" stroke-linecap="round" stroke-linejoin="round"/>
<path d="M1792 214C1799.8 220 1820.2 240.5 1839 250C1857.8 259.5 1886.9 263 1904.6 271C1922.3 279 1933.8 290.5 1945 298C1956.2 305.5 1967.5 313 1972 316" fill="none" stroke="#e9e7df" stroke-width="9" stroke-linecap="round" stroke-linejoin="round"/>
<path d="M1663 332C1665 337.1 1665 351.5 1674.8 362.4C1684.6 373.3 1706.1 387.1 1721.7 397.6C1737.3 408.2 1756 418.5 1768.6 425.7C1781.1 432.9 1769.3 423.1 1797 441C1824.7 458.9 1900.5 506.5 1935 533C1969.5 559.5 1984.7 581.7 2003.8 600C2022.9 618.3 2037 634.2 2049.4 642.7C2061.8 651.2 2059 646.6 2078 651.3C2097 656 2134.5 664.6 2163.4 671C2192.3 677.4 2237 686.6 2251.7 689.7" fill="none" stroke="#e9e7df" stroke-width="9" stroke-linecap="round" stroke-linejoin="round"/>
<path d="M2251.7 689.7C2254.8 682.8 2262.4 663.5 2270 648C2277.6 632.5 2290.2 607 2297 597C2303.8 587 2308.7 589.5 2311 588" fill="none" stroke="#e9e7df" stroke-width="10" stroke-linecap="round" stroke-linejoin="round"/>
<path d="M2311 588L2331.5 600L2535 710" fill="none" stroke="#e9e7df" stroke-width="10" stroke-linecap="round" stroke-linejoin="round"/>
<path d="M2323 214L2535 323" fill="none" stroke="#e9e7df" stroke-width="15" stroke-linecap="round" stroke-linejoin="round"/>
<path d="M2251.7 689.7C2256 694.7 2271 710 2277.4 719.7C2283.8 729.4 2287.9 737.1 2290 748C2292.1 758.9 2291.2 772.2 2290 785C2288.8 797.8 2289.8 806 2283 825C2276.2 844 2260.3 874.8 2248.9 899C2237.5 923.2 2225.2 951.9 2214.7 970.4C2204.2 988.9 2193.6 999.4 2186 1010C2178.4 1020.6 2172.5 1026.9 2169 1034C2165.5 1041.1 2165.7 1049.6 2165 1052.7" fill="none" stroke="#e9e7df" stroke-width="10" stroke-linecap="round" stroke-linejoin="round"/>
<path d="M2283 828C2295.3 833.2 2336.1 847.6 2357 859C2377.9 870.4 2393.2 886.3 2408.4 896.3C2423.6 906.3 2435.5 913.3 2448.3 919C2461.1 924.7 2477.7 926.7 2485.3 930.5C2492.9 934.3 2491.8 931.1 2493.9 942C2496 952.9 2497.3 987 2498 996" fill="none" stroke="#e9e7df" stroke-width="10" stroke-linecap="round" stroke-linejoin="round"/>
<path d="M2182 1023L2498 996L2535 993" fill="none" stroke="#e9e7df" stroke-width="10" stroke-linecap="round" stroke-linejoin="round"/>
<path d="M1122.5 1011L1122.5 1068" fill="none" stroke="#e9e7df" stroke-width="10" stroke-linecap="round" stroke-linejoin="round"/>
<path d="M812 1137C815.8 1140.5 827.3 1150 835 1158C842.7 1166 852.7 1173.8 858 1185C863.3 1196.2 865.2 1213.2 867 1225C868.8 1236.8 870.2 1244.2 869 1256C867.8 1267.8 861.5 1289.3 860 1296" fill="none" stroke="#e9e7df" stroke-width="9" stroke-linecap="round" stroke-linejoin="round"/>
<path d="M781 1352C784.2 1349.7 794.3 1343 800 1338C805.7 1333 812.5 1324.7 815 1322" fill="none" stroke="#e9e7df" stroke-width="9" stroke-linecap="round" stroke-linejoin="round"/>
<path d="M781 1372C784.2 1370 793.5 1365.3 800 1360C806.5 1354.7 816.7 1343.3 820 1340" fill="none" stroke="#e9e7df" stroke-width="9" stroke-linecap="round" stroke-linejoin="round"/>
<path d="M1206 1117L1206 1410" fill="none" stroke="#e9e7df" stroke-width="19" stroke-linecap="round" stroke-linejoin="round"/>
<path d="M1316 1120L1316 1410" fill="none" stroke="#e9e7df" stroke-width="10" stroke-linecap="round" stroke-linejoin="round"/>
<path d="M1468 1120L1468 1410" fill="none" stroke="#e9e7df" stroke-width="10" stroke-linecap="round" stroke-linejoin="round"/>
<path d="M1270 1293L1206 1298" fill="none" stroke="#e9e7df" stroke-width="9" stroke-linecap="round" stroke-linejoin="round"/>
<path d="M1216 1293L1316 1290" fill="none" stroke="#e9e7df" stroke-width="8" stroke-linecap="round" stroke-linejoin="round"/>
<path d="M1316 1323L1530 1323" fill="none" stroke="#e9e7df" stroke-width="10" stroke-linecap="round" stroke-linejoin="round"/>
<path d="M1316 1249.5L1468 1249.5" fill="none" stroke="#e9e7df" stroke-width="9" stroke-linecap="round" stroke-linejoin="round"/>
<rect x="1343" y="1161" width="97" height="118" rx="9" fill="none" stroke="#e9e7df" stroke-width="9"/>
<path d="M1343 1186.5L1440 1186.5" fill="none" stroke="#e9e7df" stroke-width="8" stroke-linecap="round" stroke-linejoin="round"/>
<path d="M1343 1217L1440 1217" fill="none" stroke="#e9e7df" stroke-width="8" stroke-linecap="round" stroke-linejoin="round"/>
<path d="M1343 1248L1440 1248" fill="none" stroke="#e9e7df" stroke-width="8" stroke-linecap="round" stroke-linejoin="round"/>
<path d="M1498 1160L1498 1279" fill="none" stroke="#e9e7df" stroke-width="7" stroke-linecap="round" stroke-linejoin="round"/>
<path d="M1530 1323C1535 1319.2 1550.8 1306.3 1560 1300C1569.2 1293.7 1575 1288.2 1585 1285C1595 1281.8 1610.8 1288.5 1620 1281C1629.2 1273.5 1635.8 1256.8 1640 1240C1644.2 1223.2 1645 1199.7 1645 1180C1645 1160.3 1640.8 1131.7 1640 1122" fill="none" stroke="#e9e7df" stroke-width="9" stroke-linecap="round" stroke-linejoin="round"/>
<path d="M1565 1322C1569.2 1321.3 1583.3 1320.8 1590 1318C1596.7 1315.2 1599.2 1311 1605 1305C1610.8 1299 1615.8 1283.7 1625 1282C1634.2 1280.3 1649.2 1287 1660 1295C1670.8 1303 1681.7 1312 1690 1330C1698.3 1348 1706.7 1390.8 1710 1403" fill="none" stroke="#e9e7df" stroke-width="9" stroke-linecap="round" stroke-linejoin="round"/>
<circle cx="1753.300" cy="1253.400" r="71" fill="#f2f1eb" stroke="#e9e7df" stroke-width="9"/>
<circle cx="1594" cy="1441" r="108" fill="#f4f3ee" stroke="#e9e7df" stroke-width="9"/>
<path d="M1690 1300L1660 1310L1672 1330" fill="none" stroke="#e9e7df" stroke-width="8" stroke-linecap="round" stroke-linejoin="round"/>
<path d="M1740 1332L1722 1403" fill="none" stroke="#e9e7df" stroke-width="9" stroke-linecap="round" stroke-linejoin="round"/>
<path d="M1805 1310L1870 1318" fill="none" stroke="#e9e7df" stroke-width="9" stroke-linecap="round" stroke-linejoin="round"/>
<path d="M1750 1375L1800 1395L1870 1360" fill="none" stroke="#e9e7df" stroke-width="8" stroke-linecap="round" stroke-linejoin="round"/>
<path d="M1648 1165L1700 1160" fill="none" stroke="#e9e7df" stroke-width="7" stroke-linecap="round" stroke-linejoin="round"/>
<path d="M1887.7 1110L1887.7 1410" fill="none" stroke="#e9e7df" stroke-width="32" stroke-linecap="round" stroke-linejoin="round"/>
<path d="M2146 1252L2454 1252" fill="none" stroke="#e9e7df" stroke-width="8" stroke-linecap="round" stroke-linejoin="round"/>
<path d="M2152 1169.5L2462 1169.5" fill="none" stroke="#e9e7df" stroke-width="9" stroke-linecap="round" stroke-linejoin="round"/>
<path d="M1948 1154C1960.2 1152.5 2003.2 1145.5 2021 1145C2038.8 1144.5 2042.7 1147.4 2055 1151C2067.3 1154.6 2078.8 1163.6 2095 1166.7C2111.2 1169.8 2142.5 1169 2152 1169.5" fill="none" stroke="#e9e7df" stroke-width="9" stroke-linecap="round" stroke-linejoin="round"/>
<path d="M2152 1169.5L2152 1379" fill="none" stroke="#e9e7df" stroke-width="9" stroke-linecap="round" stroke-linejoin="round"/>
<path d="M2203 1104L2203 1169.5" fill="none" stroke="#e9e7df" stroke-width="9" stroke-linecap="round" stroke-linejoin="round"/>
<path d="M2229 1124L2229 1166" fill="none" stroke="#e9e7df" stroke-width="7" stroke-linecap="round" stroke-linejoin="round"/>
<path d="M2251.7 1122L2251.7 1166" fill="none" stroke="#e9e7df" stroke-width="7" stroke-linecap="round" stroke-linejoin="round"/>
<path d="M2276 1120L2276 1166" fill="none" stroke="#e9e7df" stroke-width="7" stroke-linecap="round" stroke-linejoin="round"/>
<path d="M2300 1118L2300 1166" fill="none" stroke="#e9e7df" stroke-width="7" stroke-linecap="round" stroke-linejoin="round"/>
<path d="M2324 1116L2324 1166" fill="none" stroke="#e9e7df" stroke-width="7" stroke-linecap="round" stroke-linejoin="round"/>
<path d="M2348.6 1114L2348.6 1166" fill="none" stroke="#e9e7df" stroke-width="7" stroke-linecap="round" stroke-linejoin="round"/>
<path d="M2372.8 1112L2372.8 1166" fill="none" stroke="#e9e7df" stroke-width="7" stroke-linecap="round" stroke-linejoin="round"/>
<path d="M2397 1110L2397 1166" fill="none" stroke="#e9e7df" stroke-width="7" stroke-linecap="round" stroke-linejoin="round"/>
<path d="M2421 1108L2421 1166" fill="none" stroke="#e9e7df" stroke-width="7" stroke-linecap="round" stroke-linejoin="round"/>
<path d="M2447 1106L2447 1166" fill="none" stroke="#e9e7df" stroke-width="7" stroke-linecap="round" stroke-linejoin="round"/>
<path d="M2206 1125.4L2445.4 1106.8" fill="none" stroke="#e9e7df" stroke-width="8" stroke-linecap="round" stroke-linejoin="round"/>
<path d="M2462.5 1080L2462.5 1160" fill="none" stroke="#e9e7df" stroke-width="9" stroke-linecap="round" stroke-linejoin="round"/>
<path d="M2462.5 1160C2463.4 1163 2463.8 1173.7 2468 1178C2472.2 1182.3 2481.3 1186 2488 1186C2494.7 1186 2503.8 1182.3 2508 1178C2512.2 1173.7 2512.2 1177.2 2513 1160C2513.8 1142.8 2513 1089.2 2513 1075" fill="none" stroke="#e9e7df" stroke-width="9" stroke-linecap="round" stroke-linejoin="round"/>
<path d="M2488 1185L2488 1410" fill="none" stroke="#e9e7df" stroke-width="10" stroke-linecap="round" stroke-linejoin="round"/>
<path d="M2459.7 1202L2456 1319" fill="none" stroke="#e9e7df" stroke-width="8" stroke-linecap="round" stroke-linejoin="round"/>
<path d="M1905 1324.8L2152 1324.8" fill="none" stroke="#e9e7df" stroke-width="9" stroke-linecap="round" stroke-linejoin="round"/>
<path d="M1905 1337.6L2152 1337.6" fill="none" stroke="#e9e7df" stroke-width="9" stroke-linecap="round" stroke-linejoin="round"/>
<path d="M2152 1337C2160 1336.5 2182 1336.5 2200 1334C2218 1331.5 2226.7 1324.3 2260 1322C2293.3 1319.7 2362 1320.3 2400 1320C2438 1319.7 2473.3 1320 2488 1320" fill="none" stroke="#e9e7df" stroke-width="9" stroke-linecap="round" stroke-linejoin="round"/>
<path d="M1938 1168L1934 1330" fill="none" stroke="#e9e7df" stroke-width="9" stroke-linecap="round" stroke-linejoin="round"/>
<circle cx="2092" cy="1250.700" r="48.400" fill="#f2f1eb" stroke="#e9e7df" stroke-width="9"/>
<path d="M2140 1252L2152 1252" fill="none" stroke="#e9e7df" stroke-width="8" stroke-linecap="round" stroke-linejoin="round"/>
<path d="M2308.7 1332L2308.7 1410" fill="none" stroke="#e9e7df" stroke-width="9" stroke-linecap="round" stroke-linejoin="round"/>
<path d="M1983 1340C1983.8 1342.7 1981.8 1351.5 1988 1356C1994.2 1360.5 1995.5 1364.2 2020 1367C2044.5 1369.8 2110.8 1367 2135 1373C2159.2 1379 2160 1398 2165 1403" fill="none" stroke="#e9e7df" stroke-width="8" stroke-linecap="round" stroke-linejoin="round"/>
<path d="M1781 1117L1781 1140" fill="none" stroke="#e9e7df" stroke-width="8" stroke-linecap="round" stroke-linejoin="round"/>
<path d="M1784 212C1779.1 219.5 1774.7 237.4 1754.5 257C1734.3 276.6 1693.9 306.2 1663 329.6C1632.1 353 1607.3 368.9 1569 397.6C1530.7 426.3 1475.2 465.4 1433 502C1390.8 538.6 1345 591.2 1316 617C1287 642.8 1279.8 644.7 1259 657C1238.2 669.3 1206.2 683.8 1191 691C1175.8 698.2 1175.2 695.2 1168 700C1160.8 704.8 1153.2 713 1148 720C1142.8 727 1141.7 728.8 1137 742C1132.3 755.2 1125.7 780 1120 799C1114.3 818 1109.7 837.8 1103 856C1096.3 874.2 1087.7 891.3 1080 908C1072.3 924.7 1063.7 940.2 1057 956C1050.3 971.8 1049.5 989 1040 1003C1030.5 1017 1013.3 1030.2 1000 1040C986.7 1049.8 969.2 1057 960 1062C950.8 1067 947.5 1068.7 945 1070" fill="none" stroke="#fff" stroke-width="6.5" stroke-linecap="round" stroke-linejoin="round"/>
<path d="M1792 214C1799.8 220 1820.2 240.5 1839 250C1857.8 259.5 1886.9 263 1904.6 271C1922.3 279 1933.8 290.5 1945 298C1956.2 305.5 1967.5 313 1972 316" fill="none" stroke="#fff" stroke-width="7" stroke-linecap="round" stroke-linejoin="round"/>
<path d="M1663 332C1665 337.1 1665 351.5 1674.8 362.4C1684.6 373.3 1706.1 387.1 1721.7 397.6C1737.3 408.2 1756 418.5 1768.6 425.7C1781.1 432.9 1769.3 423.1 1797 441C1824.7 458.9 1900.5 506.5 1935 533C1969.5 559.5 1984.7 581.7 2003.8 600C2022.9 618.3 2037 634.2 2049.4 642.7C2061.8 651.2 2059 646.6 2078 651.3C2097 656 2134.5 664.6 2163.4 671C2192.3 677.4 2237 686.6 2251.7 689.7" fill="none" stroke="#fff" stroke-width="7" stroke-linecap="round" stroke-linejoin="round"/>
<path d="M2251.7 689.7C2254.8 682.8 2262.4 663.5 2270 648C2277.6 632.5 2290.2 607 2297 597C2303.8 587 2308.7 589.5 2311 588" fill="none" stroke="#fff" stroke-width="8" stroke-linecap="round" stroke-linejoin="round"/>
<path d="M2311 588L2331.5 600L2535 710" fill="none" stroke="#fff" stroke-width="8" stroke-linecap="round" stroke-linejoin="round"/>
<path d="M2323 214L2535 323" fill="none" stroke="#fff" stroke-width="13" stroke-linecap="round" stroke-linejoin="round"/>
<path d="M2251.7 689.7C2256 694.7 2271 710 2277.4 719.7C2283.8 729.4 2287.9 737.1 2290 748C2292.1 758.9 2291.2 772.2 2290 785C2288.8 797.8 2289.8 806 2283 825C2276.2 844 2260.3 874.8 2248.9 899C2237.5 923.2 2225.2 951.9 2214.7 970.4C2204.2 988.9 2193.6 999.4 2186 1010C2178.4 1020.6 2172.5 1026.9 2169 1034C2165.5 1041.1 2165.7 1049.6 2165 1052.7" fill="none" stroke="#fff" stroke-width="8" stroke-linecap="round" stroke-linejoin="round"/>
<path d="M2283 828C2295.3 833.2 2336.1 847.6 2357 859C2377.9 870.4 2393.2 886.3 2408.4 896.3C2423.6 906.3 2435.5 913.3 2448.3 919C2461.1 924.7 2477.7 926.7 2485.3 930.5C2492.9 934.3 2491.8 931.1 2493.9 942C2496 952.9 2497.3 987 2498 996" fill="none" stroke="#fff" stroke-width="8" stroke-linecap="round" stroke-linejoin="round"/>
<path d="M2182 1023L2498 996L2535 993" fill="none" stroke="#fff" stroke-width="8" stroke-linecap="round" stroke-linejoin="round"/>
<path d="M1122.5 1011L1122.5 1068" fill="none" stroke="#fff" stroke-width="8" stroke-linecap="round" stroke-linejoin="round"/>
<path d="M812 1137C815.8 1140.5 827.3 1150 835 1158C842.7 1166 852.7 1173.8 858 1185C863.3 1196.2 865.2 1213.2 867 1225C868.8 1236.8 870.2 1244.2 869 1256C867.8 1267.8 861.5 1289.3 860 1296" fill="none" stroke="#fff" stroke-width="7" stroke-linecap="round" stroke-linejoin="round"/>
<path d="M781 1352C784.2 1349.7 794.3 1343 800 1338C805.7 1333 812.5 1324.7 815 1322" fill="none" stroke="#fff" stroke-width="7" stroke-linecap="round" stroke-linejoin="round"/>
<path d="M781 1372C784.2 1370 793.5 1365.3 800 1360C806.5 1354.7 816.7 1343.3 820 1340" fill="none" stroke="#fff" stroke-width="7" stroke-linecap="round" stroke-linejoin="round"/>
<path d="M1206 1117L1206 1410" fill="none" stroke="#fff" stroke-width="17" stroke-linecap="round" stroke-linejoin="round"/>
<path d="M1316 1120L1316 1410" fill="none" stroke="#fff" stroke-width="8" stroke-linecap="round" stroke-linejoin="round"/>
<path d="M1468 1120L1468 1410" fill="none" stroke="#fff" stroke-width="8" stroke-linecap="round" stroke-linejoin="round"/>
<path d="M1270 1293L1206 1298" fill="none" stroke="#fff" stroke-width="7" stroke-linecap="round" stroke-linejoin="round"/>
<path d="M1216 1293L1316 1290" fill="none" stroke="#fff" stroke-width="6" stroke-linecap="round" stroke-linejoin="round"/>
<path d="M1316 1323L1530 1323" fill="none" stroke="#fff" stroke-width="8" stroke-linecap="round" stroke-linejoin="round"/>
<path d="M1316 1249.5L1468 1249.5" fill="none" stroke="#fff" stroke-width="7" stroke-linecap="round" stroke-linejoin="round"/>
<rect x="1343" y="1161" width="97" height="118" rx="9" fill="none" stroke="#fff" stroke-width="7"/>
<path d="M1343 1186.5L1440 1186.5" fill="none" stroke="#fff" stroke-width="6" stroke-linecap="round" stroke-linejoin="round"/>
<path d="M1343 1217L1440 1217" fill="none" stroke="#fff" stroke-width="6" stroke-linecap="round" stroke-linejoin="round"/>
<path d="M1343 1248L1440 1248" fill="none" stroke="#fff" stroke-width="6" stroke-linecap="round" stroke-linejoin="round"/>
<path d="M1470.500 1279V1166a8 8 0 0 1 8-8h40.500a8 8 0 0 1 8 8V1271a8 8 0 0 1-8 8z" fill="none" stroke="#fff" stroke-width="6"/>
<path d="M1498 1160L1498 1279" fill="none" stroke="#fff" stroke-width="5" stroke-linecap="round" stroke-linejoin="round"/>
<path d="M1530 1323C1535 1319.2 1550.8 1306.3 1560 1300C1569.2 1293.7 1575 1288.2 1585 1285C1595 1281.8 1610.8 1288.5 1620 1281C1629.2 1273.5 1635.8 1256.8 1640 1240C1644.2 1223.2 1645 1199.7 1645 1180C1645 1160.3 1640.8 1131.7 1640 1122" fill="none" stroke="#fff" stroke-width="7" stroke-linecap="round" stroke-linejoin="round"/>
<path d="M1565 1322C1569.2 1321.3 1583.3 1320.8 1590 1318C1596.7 1315.2 1599.2 1311 1605 1305C1610.8 1299 1615.8 1283.7 1625 1282C1634.2 1280.3 1649.2 1287 1660 1295C1670.8 1303 1681.7 1312 1690 1330C1698.3 1348 1706.7 1390.8 1710 1403" fill="none" stroke="#fff" stroke-width="7" stroke-linecap="round" stroke-linejoin="round"/>
<circle cx="1753.300" cy="1253.400" r="71" fill="none" stroke="#fff" stroke-width="7"/>
<circle cx="1594" cy="1441" r="108" fill="none" stroke="#fff" stroke-width="7"/>
<circle cx="1594" cy="1441" r="87" fill="none" stroke="#fff" stroke-width="4"/>
<path d="M1690 1300L1660 1310L1672 1330" fill="none" stroke="#fff" stroke-width="6" stroke-linecap="round" stroke-linejoin="round"/>
<path d="M1740 1332L1722 1403" fill="none" stroke="#fff" stroke-width="7" stroke-linecap="round" stroke-linejoin="round"/>
<path d="M1805 1310L1870 1318" fill="none" stroke="#fff" stroke-width="7" stroke-linecap="round" stroke-linejoin="round"/>
<path d="M1750 1375L1800 1395L1870 1360" fill="none" stroke="#fff" stroke-width="6" stroke-linecap="round" stroke-linejoin="round"/>
<path d="M1648 1165L1700 1160" fill="none" stroke="#fff" stroke-width="5" stroke-linecap="round" stroke-linejoin="round"/>
<path d="M1887.7 1110L1887.7 1410" fill="none" stroke="#fff" stroke-width="30" stroke-linecap="round" stroke-linejoin="round"/>
<path d="M2146 1252L2454 1252" fill="none" stroke="#fff" stroke-width="6" stroke-linecap="round" stroke-linejoin="round"/>
<path d="M2152 1169.5L2462 1169.5" fill="none" stroke="#fff" stroke-width="7" stroke-linecap="round" stroke-linejoin="round"/>
<path d="M1948 1154C1960.2 1152.5 2003.2 1145.5 2021 1145C2038.8 1144.5 2042.7 1147.4 2055 1151C2067.3 1154.6 2078.8 1163.6 2095 1166.7C2111.2 1169.8 2142.5 1169 2152 1169.5" fill="none" stroke="#fff" stroke-width="7" stroke-linecap="round" stroke-linejoin="round"/>
<path d="M2152 1169.5L2152 1379" fill="none" stroke="#fff" stroke-width="7" stroke-linecap="round" stroke-linejoin="round"/>
<path d="M2203 1104L2203 1169.5" fill="none" stroke="#fff" stroke-width="7" stroke-linecap="round" stroke-linejoin="round"/>
<path d="M2229 1124L2229 1166" fill="none" stroke="#fff" stroke-width="5" stroke-linecap="round" stroke-linejoin="round"/>
<path d="M2251.7 1122L2251.7 1166" fill="none" stroke="#fff" stroke-width="5" stroke-linecap="round" stroke-linejoin="round"/>
<path d="M2276 1120L2276 1166" fill="none" stroke="#fff" stroke-width="5" stroke-linecap="round" stroke-linejoin="round"/>
<path d="M2300 1118L2300 1166" fill="none" stroke="#fff" stroke-width="5" stroke-linecap="round" stroke-linejoin="round"/>
<path d="M2324 1116L2324 1166" fill="none" stroke="#fff" stroke-width="5" stroke-linecap="round" stroke-linejoin="round"/>
<path d="M2348.6 1114L2348.6 1166" fill="none" stroke="#fff" stroke-width="5" stroke-linecap="round" stroke-linejoin="round"/>
<path d="M2372.8 1112L2372.8 1166" fill="none" stroke="#fff" stroke-width="5" stroke-linecap="round" stroke-linejoin="round"/>
<path d="M2397 1110L2397 1166" fill="none" stroke="#fff" stroke-width="5" stroke-linecap="round" stroke-linejoin="round"/>
<path d="M2421 1108L2421 1166" fill="none" stroke="#fff" stroke-width="5" stroke-linecap="round" stroke-linejoin="round"/>
<path d="M2447 1106L2447 1166" fill="none" stroke="#fff" stroke-width="5" stroke-linecap="round" stroke-linejoin="round"/>
<path d="M2206 1125.4L2445.4 1106.8" fill="none" stroke="#fff" stroke-width="6" stroke-linecap="round" stroke-linejoin="round"/>
<path d="M2462.5 1080L2462.5 1160" fill="none" stroke="#fff" stroke-width="7" stroke-linecap="round" stroke-linejoin="round"/>
<path d="M2462.5 1160C2463.4 1163 2463.8 1173.7 2468 1178C2472.2 1182.3 2481.3 1186 2488 1186C2494.7 1186 2503.8 1182.3 2508 1178C2512.2 1173.7 2512.2 1177.2 2513 1160C2513.8 1142.8 2513 1089.2 2513 1075" fill="none" stroke="#fff" stroke-width="7" stroke-linecap="round" stroke-linejoin="round"/>
<path d="M2488 1185L2488 1410" fill="none" stroke="#fff" stroke-width="8" stroke-linecap="round" stroke-linejoin="round"/>
<path d="M2459.7 1202L2456 1319" fill="none" stroke="#fff" stroke-width="6" stroke-linecap="round" stroke-linejoin="round"/>
<path d="M1905 1324.8L2152 1324.8" fill="none" stroke="#fff" stroke-width="7" stroke-linecap="round" stroke-linejoin="round"/>
<path d="M1905 1337.6L2152 1337.6" fill="none" stroke="#fff" stroke-width="7" stroke-linecap="round" stroke-linejoin="round"/>
<path d="M2152 1337C2160 1336.5 2182 1336.5 2200 1334C2218 1331.5 2226.7 1324.3 2260 1322C2293.3 1319.7 2362 1320.3 2400 1320C2438 1319.7 2473.3 1320 2488 1320" fill="none" stroke="#fff" stroke-width="7" stroke-linecap="round" stroke-linejoin="round"/>
<path d="M1938 1168L1934 1330" fill="none" stroke="#fff" stroke-width="7" stroke-linecap="round" stroke-linejoin="round"/>
<circle cx="2092" cy="1250.700" r="48.400" fill="none" stroke="#fff" stroke-width="7"/>
<path d="M2140 1252L2152 1252" fill="none" stroke="#fff" stroke-width="6" stroke-linecap="round" stroke-linejoin="round"/>
<path d="M2308.7 1332L2308.7 1410" fill="none" stroke="#fff" stroke-width="7" stroke-linecap="round" stroke-linejoin="round"/>
<path d="M1983 1340C1983.8 1342.7 1981.8 1351.5 1988 1356C1994.2 1360.5 1995.5 1364.2 2020 1367C2044.5 1369.8 2110.8 1367 2135 1373C2159.2 1379 2160 1398 2165 1403" fill="none" stroke="#fff" stroke-width="6" stroke-linecap="round" stroke-linejoin="round"/>
<ellipse cx="2046" cy="1341" rx="33" ry="14" fill="none" stroke="#fff" stroke-width="6"/>
<path d="M1781 1117L1781 1140" fill="none" stroke="#fff" stroke-width="6" stroke-linecap="round" stroke-linejoin="round"/>
<path d="M775 1097L1400 1099.5L1880 1097.5L1905 1096L2535 1043.3" fill="none" stroke="#fdfdfb" stroke-width="49" stroke-linejoin="round"/>
<path d="M775 1097L1400 1099.5L1880 1097.5L1905 1096L2535 1043.3" fill="none" stroke="#eae8dc" stroke-width="29" stroke-linejoin="round"/>
<path d="M775 1097L1400 1099.5L1880 1097.5L1905 1096L2535 1043.3" fill="none" stroke="#f9ec8c" stroke-width="27" stroke-linejoin="round"/>
<path d="M775 1097L1400 1099.5L1880 1097.5L1905 1096L2535 1043.3" fill="none" stroke="#f3dc78" stroke-width="1.200" stroke-linejoin="round"/>
<path d="M1879.500 1100V1410M1895.500 1100V1410" fill="none" stroke="#e6dca0" stroke-width="14.500"/>
<path d="M1879.500 1098V1410M1895.500 1098V1410" fill="none" stroke="#f9ec8c" stroke-width="12.500"/>
<path d="M1081.5 205C1082.2 215.1 1084.1 246.3 1085.5 265.6C1086.9 284.9 1088.6 302.4 1089.7 321C1090.8 339.6 1091.7 358.5 1091.9 377C1092.1 395.5 1091.8 413.5 1091.1 432C1090.4 450.5 1089.6 469.4 1087.8 488C1086 506.6 1083 523.3 1080 543.6C1077 563.9 1073.8 591.1 1069.7 610C1065.6 628.9 1060.7 639.7 1055.6 657C1050.5 674.3 1045.4 695 1039 714C1032.6 733 1025 752 1017 771C1009 790 1000.2 809 991 828C981.8 847 972.1 866 961.6 885C951.1 904 939.8 922.8 928 942C916.2 961.2 900.7 985.6 891 1000C881.3 1014.4 877 1019 870 1028.5C863 1038 856.3 1047.5 849 1057C841.7 1066.5 833.3 1076 826 1085.5C818.7 1095 811.7 1104.5 805 1114C798.3 1123.5 793.2 1132.2 786 1142.5C778.8 1152.8 766 1170.4 762 1176" fill="none" stroke="#c9974f" stroke-width="38.500"/>
<path d="M1081.5 205C1082.2 215.1 1084.1 246.3 1085.5 265.6C1086.9 284.9 1088.6 302.4 1089.7 321C1090.8 339.6 1091.7 358.5 1091.9 377C1092.1 395.5 1091.8 413.5 1091.1 432C1090.4 450.5 1089.6 469.4 1087.8 488C1086 506.6 1083 523.3 1080 543.6C1077 563.9 1073.8 591.1 1069.7 610C1065.6 628.9 1060.7 639.7 1055.6 657C1050.5 674.3 1045.4 695 1039 714C1032.6 733 1025 752 1017 771C1009 790 1000.2 809 991 828C981.8 847 972.1 866 961.6 885C951.1 904 939.8 922.8 928 942C916.2 961.2 900.7 985.6 891 1000C881.3 1014.4 877 1019 870 1028.5C863 1038 856.3 1047.5 849 1057C841.7 1066.5 833.3 1076 826 1085.5C818.7 1095 811.7 1104.5 805 1114C798.3 1123.5 793.2 1132.2 786 1142.5C778.8 1152.8 766 1170.4 762 1176" fill="none" stroke="#f9cb7e" stroke-width="35.800"/>
<path d="M1081.5 205C1082.2 215.1 1084.1 246.3 1085.5 265.6C1086.9 284.9 1088.6 302.4 1089.7 321C1090.8 339.6 1091.7 358.5 1091.9 377C1092.1 395.5 1091.8 413.5 1091.1 432C1090.4 450.5 1089.6 469.4 1087.8 488C1086 506.6 1083 523.3 1080 543.6C1077 563.9 1073.8 591.1 1069.7 610C1065.6 628.9 1060.7 639.7 1055.6 657C1050.5 674.3 1045.4 695 1039 714C1032.6 733 1025 752 1017 771C1009 790 1000.2 809 991 828C981.8 847 972.1 866 961.6 885C951.1 904 939.8 922.8 928 942C916.2 961.2 900.7 985.6 891 1000C881.3 1014.4 877 1019 870 1028.5C863 1038 856.3 1047.5 849 1057C841.7 1066.5 833.3 1076 826 1085.5C818.7 1095 811.7 1104.5 805 1114C798.3 1123.5 793.2 1132.2 786 1142.5C778.8 1152.8 766 1170.4 762 1176" fill="none" stroke="#c9974f" stroke-width="5.200"/>
<path d="M1081.5 205C1082.2 215.1 1084.1 246.3 1085.5 265.6C1086.9 284.9 1088.6 302.4 1089.7 321C1090.8 339.6 1091.7 358.5 1091.9 377C1092.1 395.5 1091.8 413.5 1091.1 432C1090.4 450.5 1089.6 469.4 1087.8 488C1086 506.6 1083 523.3 1080 543.6C1077 563.9 1073.8 591.1 1069.7 610C1065.6 628.9 1060.7 639.7 1055.6 657C1050.5 674.3 1045.4 695 1039 714C1032.6 733 1025 752 1017 771C1009 790 1000.2 809 991 828C981.8 847 972.1 866 961.6 885C951.1 904 939.8 922.8 928 942C916.2 961.2 900.7 985.6 891 1000C881.3 1014.4 877 1019 870 1028.5C863 1038 856.3 1047.5 849 1057C841.7 1066.5 833.3 1076 826 1085.5C818.7 1095 811.7 1104.5 805 1114C798.3 1123.5 793.2 1132.2 786 1142.5C778.8 1152.8 766 1170.4 762 1176" fill="none" stroke="#f6ecd9" stroke-width="2.800"/>
<path d="M1273 218L1259.500 1403" stroke="#dddcd6" stroke-width="4" fill="none"/>
<path d="M1273 218L1259.500 1403" stroke="#fdfdfb" stroke-width="2.800" fill="none"/>
<path d="M1273 218L1259.500 1403" stroke="#a9a9a9" stroke-width="2.800" stroke-dasharray="14.500 12.800" stroke-dashoffset="8" fill="none"/>
<g transform="rotate(-87 1100 475)"><rect x="1071" y="465" width="58" height="20" rx="3" fill="#f7dc62"/><text x="1100" y="475" font-size="17" text-anchor="middle" dominant-baseline="central" fill="#2a2208" letter-spacing="1">三环线</text></g>
<g transform="rotate(-73 1054 701)"><rect x="1025" y="691" width="58" height="20" rx="3" fill="#f7dc62"/><text x="1054" y="701" font-size="17" text-anchor="middle" dominant-baseline="central" fill="#2a2208" letter-spacing="1">三环线</text></g>
<g transform="rotate(-59 930 967)"><rect x="901" y="957" width="58" height="20" rx="3" fill="#f7dc62"/><text x="930" y="967" font-size="17" text-anchor="middle" dominant-baseline="central" fill="#2a2208" letter-spacing="1">三环线</text></g>
<text x="918" y="506" font-size="14.5" text-anchor="middle" dominant-baseline="central" fill="#6a6a6a" stroke="#fbfbf8" stroke-width="3.2" paint-order="stroke" stroke-linejoin="round">沙子岭</text>
<text x="2349.5" y="335.5" font-size="15.5" text-anchor="middle" dominant-baseline="central" fill="#6a6a6a" stroke="#fbfbf8" stroke-width="3.2" paint-order="stroke" stroke-linejoin="round">佛祖岭村</text>
<text x="826" y="1104" font-size="16" text-anchor="middle" dominant-baseline="central" fill="#6b5a3a" stroke="#fbfbf8" stroke-width="3.2" paint-order="stroke" stroke-linejoin="round">高新二路</text>
<text x="2031" y="1098" font-size="16" text-anchor="middle" dominant-baseline="central" fill="#6b5a3a" stroke="#fbfbf8" stroke-width="3.2" paint-order="stroke" stroke-linejoin="round" transform="rotate(-4.8 2031 1098)">高新二路</text>
<text x="2315" y="1071.5" font-size="16" text-anchor="middle" dominant-baseline="central" fill="#6b5a3a" stroke="#fbfbf8" stroke-width="3.2" paint-order="stroke" stroke-linejoin="round" transform="rotate(-4.8 2315 1071.5)">高新二路</text>
<text x="1211.5" y="1176.5" font-size="16" text-anchor="middle" dominant-baseline="central" fill="#5b5b5b" stroke="#fbfbf8" stroke-width="3.2" paint-order="stroke" stroke-linejoin="round" transform="rotate(-90 1211.5 1176.5)">奥体公园三号路</text>
<text x="1202" y="1428" font-size="16" text-anchor="middle" dominant-baseline="central" fill="#5b5b5b" stroke="#fbfbf8" stroke-width="3.2" paint-order="stroke" stroke-linejoin="round" transform="rotate(-90 1202 1428)">奥体公园三号路</text>
<text x="1878.5" y="1190" font-size="15.5" text-anchor="middle" dominant-baseline="central" fill="#6b5a3a" stroke="#fbfbf8" stroke-width="3.2" paint-order="stroke" stroke-linejoin="round" transform="rotate(90 1878.5 1190)">佛祖岭一路</text>
<text x="1881.5" y="1403" font-size="15.5" text-anchor="middle" dominant-baseline="central" fill="#6b5a3a" stroke="#fbfbf8" stroke-width="3.2" paint-order="stroke" stroke-linejoin="round" transform="rotate(-90 1881.5 1403)">佛祖岭一路</text>
<text x="2491" y="1269" font-size="16" text-anchor="middle" dominant-baseline="central" fill="#5b5b5b" stroke="#fbfbf8" stroke-width="3.2" paint-order="stroke" stroke-linejoin="round" transform="rotate(-90 2491 1269)">金岭大道</text>
<rect x="2000.500" y="1312.500" width="5" height="5" fill="#6a6a6a" stroke="#fff" stroke-width="1.500" paint-order="stroke"/>
<text x="2013" y="1316" font-size="16" dominant-baseline="central" fill="#666" stroke="#fbfbf8" stroke-width="3.200" paint-order="stroke" stroke-linejoin="round" letter-spacing="0.300">湖北省网球协会</text>
<path d="M2411.500 1398h13M2413 1396.500v-6M2416.500 1396.500v-6M2419.500 1396.500v-6M2423 1396.500v-6M2411.500 1390l6.500-4 6.500 4z" stroke="#555" stroke-width="1.600" fill="#555"/>
<text x="2429.500" y="1393.500" font-size="16" dominant-baseline="central" fill="#666" stroke="#fbfbf8" stroke-width="3.200" paint-order="stroke" stroke-linejoin="round" letter-spacing="0.300">湖北体育博物馆</text>
<text x="1795" y="691" font-size="10" text-anchor="middle" dominant-baseline="central" fill="#999" stroke="#fbfbf8" stroke-width="2" paint-order="stroke" stroke-linejoin="round">所</text>
<polygon points="1350,389.5 1937,413 1911.3,853.5 1180,802 1213.4,493.5" fill="#e8201a" fill-opacity="0.130" stroke="#e2231c" stroke-width="3.200" stroke-linejoin="round"/>
<g fill="#4788e8" stroke="#f2fbff" stroke-width="1.2">
<circle cx="1522.7" cy="1028.5" r="7.400"/><circle cx="1319.9" cy="904.7" r="7.400"/><circle cx="1196.4" cy="1036.4" r="7.400"/><circle cx="1667.5" cy="1064.6" r="7.400"/><circle cx="1304.7" cy="896.7" r="7.400"/><circle cx="1664.4" cy="1102.3" r="7.400"/><circle cx="1672.5" cy="999.7" r="7.400"/><circle cx="1675.7" cy="1110.7" r="7.400"/><circle cx="1299.2" cy="1071.4" r="7.400"/><circle cx="1555.4" cy="865.9" r="7.400"/><circle cx="1385.9" cy="974.9" r="7.400"/><circle cx="1857.6" cy="1082.2" r="7.400"/><circle cx="1257.6" cy="880.8" r="7.400"/><circle cx="1463.9" cy="1132.2" r="7.400"/><circle cx="1384.1" cy="1007.1" r="7.400"/><circle cx="1675.1" cy="982.3" r="7.400"/><circle cx="1520.6" cy="907.6" r="7.400"/><circle cx="1788.6" cy="1078.9" r="7.400"/><circle cx="1490.8" cy="1198.3" r="7.400"/><circle cx="1310.2" cy="842.8" r="7.400"/><circle cx="1392.9" cy="929.3" r="7.400"/><circle cx="1699" cy="1114.6" r="7.400"/><circle cx="1387.4" cy="961.4" r="7.400"/><circle cx="1558.1" cy="1101.2" r="7.400"/><circle cx="1588.7" cy="959.2" r="7.400"/><circle cx="1767.2" cy="868.5" r="7.400"/><circle cx="1768.6" cy="885" r="7.400"/><circle cx="1592.9" cy="1149.9" r="7.400"/><circle cx="1619.9" cy="957.5" r="7.400"/><circle cx="1307.1" cy="987" r="7.400"/><circle cx="1792.1" cy="1033.4" r="7.400"/><circle cx="1649.6" cy="907.6" r="7.400"/><circle cx="1302.1" cy="947.7" r="7.400"/><circle cx="1379.9" cy="955.4" r="7.400"/><circle cx="1743.6" cy="949.7" r="7.400"/><circle cx="1577.1" cy="1033.8" r="7.400"/><circle cx="1627.4" cy="986.6" r="7.400"/><circle cx="1590" cy="992.8" r="7.400"/><circle cx="1633.1" cy="901.3" r="7.400"/><circle cx="1588.9" cy="1111.1" r="7.400"/><circle cx="1451" cy="1081.9" r="7.400"/><circle cx="1711.3" cy="1081.4" r="7.400"/><circle cx="1822.5" cy="1039.4" r="7.400"/><circle cx="1447.4" cy="939.5" r="7.400"/><circle cx="1378.6" cy="855.3" r="7.400"/><circle cx="1466.4" cy="910.9" r="7.400"/><circle cx="1794.3" cy="982.2" r="7.400"/><circle cx="1354.9" cy="858.8" r="7.400"/><circle cx="1222.5" cy="877.6" r="7.400"/><circle cx="1469" cy="1032.3" r="7.400"/><circle cx="1400.2" cy="863.8" r="7.400"/><circle cx="1386.8" cy="858.9" r="7.400"/><circle cx="1649.1" cy="947.7" r="7.400"/><circle cx="1561.4" cy="884.2" r="7.400"/><circle cx="1541.3" cy="971.1" r="7.400"/><circle cx="1733.4" cy="1058.4" r="7.400"/><circle cx="1540.3" cy="1083.5" r="7.400"/><circle cx="1457.1" cy="1014.4" r="7.400"/><circle cx="1750.8" cy="921" r="7.400"/><circle cx="1720.3" cy="919.8" r="7.400"/><circle cx="1357.6" cy="945.1" r="7.400"/><circle cx="1651.1" cy="1090.1" r="7.400"/><circle cx="1454.8" cy="1086.4" r="7.400"/><circle cx="1346.4" cy="1079.9" r="7.400"/><circle cx="1523.8" cy="981" r="7.400"/><circle cx="1373.6" cy="1056.3" r="7.400"/><circle cx="1710" cy="983.8" r="7.400"/><circle cx="1417.8" cy="1098" r="7.400"/><circle cx="1441.1" cy="875.1" r="7.400"/><circle cx="1612.7" cy="1101.7" r="7.400"/><circle cx="1649.7" cy="1105.2" r="7.400"/><circle cx="1901.3" cy="966.7" r="7.400"/><circle cx="1648.8" cy="902.8" r="7.400"/><circle cx="1512.3" cy="865.1" r="7.400"/><circle cx="1505.9" cy="1104.9" r="7.400"/><circle cx="1629.7" cy="857" r="7.400"/><circle cx="1244.5" cy="1058" r="7.400"/><circle cx="1784.5" cy="1034.4" r="7.400"/><circle cx="1796.6" cy="989.8" r="7.400"/><circle cx="1438.9" cy="1085.4" r="7.400"/><circle cx="1408.9" cy="923.3" r="7.400"/><circle cx="1334.6" cy="1055.3" r="7.400"/><circle cx="1510.2" cy="830.5" r="7.400"/><circle cx="1627.1" cy="1003.5" r="7.400"/><circle cx="1504" cy="970.6" r="7.400"/><circle cx="1534.5" cy="1169" r="7.400"/><circle cx="1306.5" cy="1056.5" r="7.400"/><circle cx="1758.9" cy="1116.9" r="7.400"/><circle cx="1746.2" cy="990.6" r="7.400"/><circle cx="1311.9" cy="990" r="7.400"/><circle cx="1592.5" cy="988.5" r="7.400"/><circle cx="1419.5" cy="1051.5" r="7.400"/><circle cx="1693.4" cy="1105.5" r="7.400"/><circle cx="1506.8" cy="1065.5" r="7.400"/><circle cx="1554.8" cy="1022.5" r="7.400"/><circle cx="1427" cy="1100.5" r="7.400"/><circle cx="1460.8" cy="862.7" r="7.400"/><circle cx="1418.7" cy="1091.7" r="7.400"/><circle cx="1786.3" cy="984.9" r="7.400"/><circle cx="1353.9" cy="961.2" r="7.400"/><circle cx="1418.8" cy="1017.7" r="7.400"/><circle cx="1589.6" cy="1023.4" r="7.400"/><circle cx="1621.5" cy="1154.5" r="7.400"/><circle cx="1679.5" cy="896.9" r="7.400"/><circle cx="1742.1" cy="1146.5" r="7.400"/><circle cx="1601" cy="904.9" r="7.400"/><circle cx="1604.1" cy="1025.5" r="7.400"/><circle cx="1804.3" cy="917.6" r="7.400"/><circle cx="1661.1" cy="1093.7" r="7.400"/><circle cx="1507.9" cy="980" r="7.400"/><circle cx="1336.8" cy="1131.4" r="7.400"/><circle cx="1781.6" cy="1070.3" r="7.400"/><circle cx="1701.2" cy="1064.9" r="7.400"/><circle cx="1870.2" cy="881.9" r="7.400"/><circle cx="1340.6" cy="1080.8" r="7.400"/><circle cx="1716.1" cy="878.2" r="7.400"/><circle cx="1510.7" cy="928.2" r="7.400"/><circle cx="1586.9" cy="1074" r="7.400"/><circle cx="1618.4" cy="912.6" r="7.400"/><circle cx="1646.6" cy="940.6" r="7.400"/><circle cx="1319.2" cy="889.7" r="7.400"/><circle cx="1642.2" cy="844.9" r="7.400"/><circle cx="1486.4" cy="1064.9" r="7.400"/><circle cx="1839.7" cy="979.4" r="7.400"/><circle cx="1205.2" cy="917.2" r="7.400"/><circle cx="1358.7" cy="928.6" r="7.400"/><circle cx="1335.5" cy="1147.3" r="7.400"/><circle cx="1363.7" cy="879.6" r="7.400"/><circle cx="1755.6" cy="921.9" r="7.400"/><circle cx="1343.2" cy="1030.1" r="7.400"/><circle cx="1553.8" cy="968.8" r="7.400"/><circle cx="1501" cy="1063.5" r="7.400"/><circle cx="1578" cy="1017.9" r="7.400"/><circle cx="1361.2" cy="853.1" r="7.400"/><circle cx="1621" cy="1070.2" r="7.400"/><circle cx="1729.1" cy="944.8" r="7.400"/><circle cx="1633.7" cy="966.3" r="7.400"/><circle cx="1429.6" cy="1013.1" r="7.400"/><circle cx="1697.2" cy="1041.8" r="7.400"/><circle cx="1553" cy="1062.7" r="7.400"/><circle cx="1776.1" cy="1026.5" r="7.400"/><circle cx="1358.8" cy="890.8" r="7.400"/><circle cx="1616.3" cy="1137.7" r="7.400"/><circle cx="1237" cy="959.5" r="7.400"/><circle cx="1680.1" cy="943.5" r="7.400"/><circle cx="1370.1" cy="1057.1" r="7.400"/><circle cx="1516.7" cy="1108.7" r="7.400"/><circle cx="1536.7" cy="1041.6" r="7.400"/><circle cx="1240.1" cy="919" r="7.400"/><circle cx="1682.6" cy="949.2" r="7.400"/><circle cx="1714.6" cy="951.7" r="7.400"/><circle cx="1535.4" cy="1066.5" r="7.400"/><circle cx="1348.8" cy="1094.1" r="7.400"/><circle cx="1656.9" cy="1002.5" r="7.400"/><circle cx="1787.1" cy="1038.8" r="7.400"/><circle cx="1466" cy="894.2" r="7.400"/><circle cx="1338.5" cy="970.9" r="7.400"/><circle cx="1653.9" cy="1160.8" r="7.400"/><circle cx="1624.9" cy="1118.8" r="7.400"/><circle cx="1301.4" cy="1004.3" r="7.400"/><circle cx="1581.5" cy="1143.5" r="7.400"/><circle cx="1482.2" cy="844.2" r="7.400"/><circle cx="1412.6" cy="1084.5" r="7.400"/><circle cx="1396.3" cy="857.3" r="7.400"/><circle cx="1523.1" cy="1108.7" r="7.400"/><circle cx="1460" cy="822.6" r="7.400"/><circle cx="1549.8" cy="836.4" r="7.400"/><circle cx="1355.3" cy="967" r="7.400"/><circle cx="1350.1" cy="1009.2" r="7.400"/><circle cx="1750.1" cy="874.7" r="7.400"/><circle cx="1651.1" cy="1195.1" r="7.400"/><circle cx="1476.7" cy="913.9" r="7.400"/><circle cx="1630.4" cy="1060.6" r="7.400"/><circle cx="1560.7" cy="864.7" r="7.400"/><circle cx="1821.7" cy="980.8" r="7.400"/><circle cx="1532.4" cy="898.6" r="7.400"/><circle cx="1466.6" cy="878.5" r="7.400"/><circle cx="1465.6" cy="981" r="7.400"/><circle cx="1319.4" cy="922.8" r="7.400"/><circle cx="1668.4" cy="914.8" r="7.400"/><circle cx="1327.5" cy="884" r="7.400"/><circle cx="1331.4" cy="1180.6" r="7.400"/><circle cx="1605.3" cy="1111.6" r="7.400"/><circle cx="1428.5" cy="866.6" r="7.400"/><circle cx="1436.8" cy="912" r="7.400"/><circle cx="1698.4" cy="1132.2" r="7.400"/><circle cx="1732.1" cy="878.9" r="7.400"/><circle cx="1537.1" cy="1022" r="7.400"/><circle cx="1648.6" cy="954.5" r="7.400"/><circle cx="1559.5" cy="855.8" r="7.400"/><circle cx="1684.8" cy="915.9" r="7.400"/><circle cx="1303.3" cy="1139.9" r="7.400"/><circle cx="1315" cy="954.8" r="7.400"/><circle cx="1479.6" cy="857.2" r="7.400"/><circle cx="1417.8" cy="882.8" r="7.400"/><circle cx="1544.3" cy="1091.4" r="7.400"/><circle cx="1685.7" cy="910.9" r="7.400"/><circle cx="1308.3" cy="954.5" r="7.400"/><circle cx="1760.4" cy="995.8" r="7.400"/><circle cx="1419.3" cy="1080.7" r="7.400"/><circle cx="1383.6" cy="1042.6" r="7.400"/><circle cx="1615.6" cy="864.2" r="7.400"/><circle cx="1540.2" cy="1159.4" r="7.400"/><circle cx="1444.8" cy="934.7" r="7.400"/><circle cx="1543" cy="1124.8" r="7.400"/><circle cx="1786.7" cy="908.7" r="7.400"/><circle cx="1451.5" cy="1102.7" r="7.400"/><circle cx="1379" cy="1044.7" r="7.400"/><circle cx="1574.9" cy="982.1" r="7.400"/><circle cx="1358.3" cy="906.2" r="7.400"/><circle cx="1769" cy="1036.4" r="7.400"/><circle cx="1564.7" cy="831.3" r="7.400"/><circle cx="1311.2" cy="1041.4" r="7.400"/><circle cx="1803.6" cy="1038.7" r="7.400"/><circle cx="1423.1" cy="1013.7" r="7.400"/><circle cx="1522.9" cy="971.9" r="7.400"/><circle cx="1243.6" cy="838.6" r="7.400"/><circle cx="1474.4" cy="1010" r="7.400"/><circle cx="1502.8" cy="1028.5" r="7.400"/><circle cx="1746.2" cy="1077.4" r="7.400"/><circle cx="1328.1" cy="1125" r="7.400"/><circle cx="1777.8" cy="1099.6" r="7.400"/><circle cx="1616.7" cy="1038" r="7.400"/><circle cx="1340.9" cy="927.2" r="7.400"/><circle cx="1469.8" cy="1023.7" r="7.400"/><circle cx="1744.6" cy="906.3" r="7.400"/><circle cx="1728.5" cy="1041" r="7.400"/><circle cx="1653.3" cy="1072.5" r="7.400"/><circle cx="1568.4" cy="1062" r="7.400"/><circle cx="1297.9" cy="996" r="7.400"/><circle cx="1422.7" cy="972" r="7.400"/><circle cx="1603.3" cy="871.4" r="7.400"/><circle cx="1512.5" cy="1052.5" r="7.400"/><circle cx="1308.3" cy="906.3" r="7.400"/><circle cx="1499" cy="890.4" r="7.400"/><circle cx="1309.1" cy="1040" r="7.400"/><circle cx="1611.8" cy="1085.7" r="7.400"/><circle cx="1386.7" cy="1017.1" r="7.400"/><circle cx="1392.4" cy="981" r="7.400"/><circle cx="1510.3" cy="825.5" r="7.400"/><circle cx="1573" cy="1180.1" r="7.400"/><circle cx="1719" cy="1032.5" r="7.400"/><circle cx="1684.1" cy="904.3" r="7.400"/><circle cx="1702.2" cy="904.9" r="7.400"/><circle cx="1429.6" cy="938.6" r="7.400"/><circle cx="1572.7" cy="988.7" r="7.400"/><circle cx="1663.1" cy="1060.4" r="7.400"/><circle cx="1636.9" cy="1028.3" r="7.400"/><circle cx="1435.3" cy="1146.2" r="7.400"/><circle cx="1396.8" cy="856.1" r="7.400"/><circle cx="1326.9" cy="845.4" r="7.400"/><circle cx="1730.5" cy="960.5" r="7.400"/><circle cx="1418" cy="1101.8" r="7.400"/><circle cx="1676.6" cy="871.7" r="7.400"/><circle cx="1244.2" cy="1082" r="7.400"/><circle cx="1760.7" cy="1084.4" r="7.400"/><circle cx="1343.3" cy="854.6" r="7.400"/><circle cx="1400.2" cy="915.7" r="7.400"/><circle cx="1541" cy="989.1" r="7.400"/><circle cx="1318.3" cy="1078.6" r="7.400"/><circle cx="1338.4" cy="1114.1" r="7.400"/><circle cx="1310.7" cy="1025.7" r="7.400"/><circle cx="1742" cy="1081.6" r="7.400"/><circle cx="1803.2" cy="885.6" r="7.400"/><circle cx="1658.6" cy="1023.8" r="7.400"/><circle cx="1435.5" cy="861" r="7.400"/><circle cx="1731.6" cy="954.5" r="7.400"/><circle cx="1624.2" cy="979.2" r="7.400"/><circle cx="1260.2" cy="841.2" r="7.400"/><circle cx="1433" cy="876.9" r="7.400"/><circle cx="1306.3" cy="1088.9" r="7.400"/><circle cx="1665.7" cy="1026.6" r="7.400"/><circle cx="1775.7" cy="997.5" r="7.400"/><circle cx="1755.8" cy="871.1" r="7.400"/><circle cx="1626.2" cy="992.2" r="7.400"/><circle cx="1705.7" cy="996.1" r="7.400"/><circle cx="1755.1" cy="979.3" r="7.400"/><circle cx="1293.3" cy="1097.4" r="7.400"/><circle cx="1421.3" cy="1005.9" r="7.400"/><circle cx="1748.6" cy="973" r="7.400"/><circle cx="1232.9" cy="999" r="7.400"/><circle cx="1581.1" cy="965.2" r="7.400"/><circle cx="1480.3" cy="1048.6" r="7.400"/><circle cx="1537.9" cy="1107.4" r="7.400"/><circle cx="1698.5" cy="1098.7" r="7.400"/><circle cx="1502.3" cy="1136.5" r="7.400"/><circle cx="1734.3" cy="1067.6" r="7.400"/><circle cx="1571" cy="1086.8" r="7.400"/><circle cx="1668.4" cy="973.9" r="7.400"/><circle cx="1423.9" cy="918" r="7.400"/><circle cx="1711.6" cy="926.3" r="7.400"/><circle cx="1742" cy="1075.5" r="7.400"/><circle cx="1453.6" cy="1096.5" r="7.400"/><circle cx="1494.8" cy="1147" r="7.400"/><circle cx="1663.3" cy="920.6" r="7.400"/><circle cx="1775" cy="1132.4" r="7.400"/><circle cx="1349" cy="1049.1" r="7.400"/><circle cx="1302.7" cy="912.1" r="7.400"/><circle cx="1689.1" cy="1124.2" r="7.400"/><circle cx="1700.4" cy="960.6" r="7.400"/><circle cx="1772.4" cy="1168.1" r="7.400"/><circle cx="1575.2" cy="1098.7" r="7.400"/><circle cx="1784.9" cy="877.8" r="7.400"/><circle cx="1552" cy="916.1" r="7.400"/><circle cx="1682.9" cy="865.8" r="7.400"/><circle cx="1425.1" cy="996.4" r="7.400"/><circle cx="1639.2" cy="899.1" r="7.400"/><circle cx="1462.4" cy="930.7" r="7.400"/><circle cx="1810.2" cy="855.4" r="7.400"/><circle cx="1362" cy="887.4" r="7.400"/><circle cx="1767.4" cy="875.2" r="7.400"/><circle cx="1475.6" cy="1090.4" r="7.400"/><circle cx="1438.1" cy="1008.1" r="7.400"/><circle cx="1503.8" cy="985.1" r="7.400"/><circle cx="1623.7" cy="1137.7" r="7.400"/><circle cx="1891.6" cy="1005.2" r="7.400"/><circle cx="1522" cy="850" r="7.400"/><circle cx="1783.2" cy="966" r="7.400"/><circle cx="1353.2" cy="1015.6" r="7.400"/><circle cx="1686.1" cy="1071.7" r="7.400"/><circle cx="1656.6" cy="1037.5" r="7.400"/><circle cx="1539.6" cy="990.4" r="7.400"/><circle cx="1394" cy="889.5" r="7.400"/><circle cx="1414.9" cy="1165.6" r="7.400"/><circle cx="1669.6" cy="1035.7" r="7.400"/><circle cx="1337.3" cy="1021.8" r="7.400"/><circle cx="1847.6" cy="1061.1" r="7.400"/><circle cx="1302.9" cy="1123.1" r="7.400"/><circle cx="1510.2" cy="945.7" r="7.400"/><circle cx="1477.9" cy="829.5" r="7.400"/><circle cx="1423.5" cy="844.6" r="7.400"/><circle cx="1744.3" cy="1113.5" r="7.400"/><circle cx="1330.8" cy="1107.6" r="7.400"/><circle cx="1664.5" cy="1138.2" r="7.400"/><circle cx="1542.3" cy="1049.1" r="7.400"/><circle cx="1400.1" cy="1050.1" r="7.400"/><circle cx="1191.3" cy="1076" r="7.400"/><circle cx="1274.9" cy="882.3" r="7.400"/><circle cx="1434.6" cy="945.7" r="7.400"/><circle cx="1382.2" cy="1058.4" r="7.400"/><circle cx="1752.6" cy="880" r="7.400"/><circle cx="1316.2" cy="854.4" r="7.400"/><circle cx="1331.8" cy="1086.2" r="7.400"/><circle cx="1659.6" cy="1101.7" r="7.400"/><circle cx="1618.8" cy="1106" r="7.400"/><circle cx="1424.3" cy="903.5" r="7.400"/><circle cx="1417.3" cy="1130.5" r="7.400"/><circle cx="1684.6" cy="848.7" r="7.400"/><circle cx="1356" cy="826.1" r="7.400"/><circle cx="1783" cy="1016.8" r="7.400"/><circle cx="1734.2" cy="1177.1" r="7.400"/><circle cx="1412.7" cy="1069.1" r="7.400"/><circle cx="1569.7" cy="1023.7" r="7.400"/><circle cx="1553.5" cy="986.5" r="7.400"/><circle cx="1641" cy="1108.7" r="7.400"/><circle cx="1479.1" cy="935.7" r="7.400"/><circle cx="1456.1" cy="1150.3" r="7.400"/><circle cx="1457.4" cy="982.4" r="7.400"/><circle cx="1668.3" cy="1066.8" r="7.400"/><circle cx="1411.4" cy="1101.8" r="7.400"/><circle cx="1749.1" cy="873.7" r="7.400"/><circle cx="1828" cy="1122" r="7.400"/><circle cx="1627.4" cy="1019.3" r="7.400"/><circle cx="1631.5" cy="906.8" r="7.400"/><circle cx="1742.7" cy="1114.3" r="7.400"/><circle cx="1620.9" cy="1025.8" r="7.400"/><circle cx="1783.4" cy="909.8" r="7.400"/><circle cx="1456.5" cy="1060.6" r="7.400"/><circle cx="1779.2" cy="993.7" r="7.400"/><circle cx="1452.7" cy="1169.3" r="7.400"/><circle cx="1534.6" cy="1152.6" r="7.400"/><circle cx="1367.8" cy="1008.2" r="7.400"/><circle cx="1310.6" cy="849.4" r="7.400"/><circle cx="1694.8" cy="984.3" r="7.400"/><circle cx="1422.7" cy="925.8" r="7.400"/><circle cx="1676.6" cy="1036" r="7.400"/><circle cx="1417.8" cy="1114.9" r="7.400"/><circle cx="1767.7" cy="910.6" r="7.400"/><circle cx="1711.1" cy="1036.4" r="7.400"/><circle cx="1292.2" cy="1080.2" r="7.400"/><circle cx="1317.6" cy="1011.8" r="7.400"/><circle cx="1389.3" cy="844.1" r="7.400"/><circle cx="1612" cy="1188.7" r="7.400"/><circle cx="1339.4" cy="965.6" r="7.400"/><circle cx="1690.8" cy="1026.5" r="7.400"/><circle cx="1538.9" cy="972.9" r="7.400"/><circle cx="1421" cy="1047.2" r="7.400"/><circle cx="1590.4" cy="843.6" r="7.400"/><circle cx="1701.1" cy="973.9" r="7.400"/><circle cx="1410.6" cy="938" r="7.400"/><circle cx="1276.6" cy="841.4" r="7.400"/><circle cx="1415.3" cy="1148.2" r="7.400"/><circle cx="1392.4" cy="907.5" r="7.400"/><circle cx="1413.9" cy="1181.4" r="7.400"/><circle cx="1716.7" cy="959.3" r="7.400"/><circle cx="1772.8" cy="924.7" r="7.400"/><circle cx="1670.2" cy="1071.5" r="7.400"/><circle cx="1781.2" cy="1002.8" r="7.400"/><circle cx="1547.5" cy="965.5" r="7.400"/><circle cx="1714.9" cy="968.5" r="7.400"/><circle cx="1397.2" cy="947.6" r="7.400"/><circle cx="1414.2" cy="1050.6" r="7.400"/><circle cx="1691.8" cy="991.5" r="7.400"/><circle cx="1695" cy="1059.1" r="7.400"/><circle cx="1343.5" cy="1149" r="7.400"/><circle cx="1669.8" cy="1053.4" r="7.400"/><circle cx="1472.1" cy="904" r="7.400"/><circle cx="1490.3" cy="970.6" r="7.400"/><circle cx="1664.4" cy="1085.3" r="7.400"/><circle cx="1663.3" cy="900.7" r="7.400"/><circle cx="1351.3" cy="894.5" r="7.400"/><circle cx="1546.7" cy="1071.4" r="7.400"/><circle cx="1840.7" cy="921.2" r="7.400"/><circle cx="1300.9" cy="997.3" r="7.400"/><circle cx="1855.8" cy="1043.8" r="7.400"/><circle cx="1538.5" cy="1118.2" r="7.400"/><circle cx="1336.3" cy="1037.2" r="7.400"/><circle cx="1628.6" cy="941.6" r="7.400"/><circle cx="1513.4" cy="939.4" r="7.400"/><circle cx="1683.8" cy="955.7" r="7.400"/><circle cx="1700.1" cy="956.9" r="7.400"/><circle cx="1235.3" cy="1021.6" r="7.400"/><circle cx="1722" cy="1120.7" r="7.400"/><circle cx="1535.3" cy="906.5" r="7.400"/><circle cx="1580.2" cy="996.4" r="7.400"/><circle cx="1346.3" cy="978.2" r="7.400"/><circle cx="1403.1" cy="827.7" r="7.400"/><circle cx="1378.5" cy="972" r="7.400"/><circle cx="1335.4" cy="1008" r="7.400"/><circle cx="1600.4" cy="864.8" r="7.400"/><circle cx="1625.4" cy="908.3" r="7.400"/><circle cx="1775" cy="1045.5" r="7.400"/><circle cx="1465.2" cy="854.5" r="7.400"/><circle cx="1431.5" cy="927" r="7.400"/><circle cx="1397.1" cy="823" r="7.400"/><circle cx="1586.9" cy="976" r="7.400"/><circle cx="1420.7" cy="1087" r="7.400"/><circle cx="1727.8" cy="1082.5" r="7.400"/><circle cx="1760.4" cy="909.4" r="7.400"/><circle cx="1295.8" cy="841.6" r="7.400"/><circle cx="1480.3" cy="878.3" r="7.400"/><circle cx="1379.8" cy="848.9" r="7.400"/><circle cx="1675.1" cy="1022.5" r="7.400"/><circle cx="1488.4" cy="1011" r="7.400"/><circle cx="1777.4" cy="1118.5" r="7.400"/><circle cx="1376.9" cy="930.1" r="7.400"/><circle cx="1351.2" cy="1030" r="7.400"/><circle cx="1564" cy="861.8" r="7.400"/><circle cx="1312.2" cy="1007.7" r="7.400"/><circle cx="1273.2" cy="820.9" r="7.400"/><circle cx="1462.6" cy="963.2" r="7.400"/><circle cx="1322.4" cy="838.6" r="7.400"/><circle cx="1598.7" cy="950.9" r="7.400"/><circle cx="1539.9" cy="982.3" r="7.400"/><circle cx="1591.5" cy="909" r="7.400"/><circle cx="1278.5" cy="1043.1" r="7.400"/><circle cx="1788.5" cy="1065.2" r="7.400"/><circle cx="1419.8" cy="984.8" r="7.400"/><circle cx="1547.1" cy="869.4" r="7.400"/><circle cx="1385.2" cy="1049.9" r="7.400"/><circle cx="1359.3" cy="926.2" r="7.400"/><circle cx="1695.1" cy="1165" r="7.400"/><circle cx="1384.4" cy="1009.9" r="7.400"/><circle cx="1436" cy="1020.1" r="7.400"/><circle cx="1597.7" cy="940.7" r="7.400"/><circle cx="1305.2" cy="878.7" r="7.400"/><circle cx="1624.8" cy="1031.9" r="7.400"/><circle cx="1750.1" cy="1045.3" r="7.400"/><circle cx="1487" cy="1105.7" r="7.400"/><circle cx="1368.6" cy="1083.6" r="7.400"/><circle cx="1681.2" cy="879.6" r="7.400"/><circle cx="1364.1" cy="837.4" r="7.400"/><circle cx="1657.9" cy="1035.5" r="7.400"/><circle cx="1663.2" cy="860.7" r="7.400"/><circle cx="1515.9" cy="859.6" r="7.400"/><circle cx="1435" cy="1054.7" r="7.400"/><circle cx="1625.3" cy="834.6" r="7.400"/><circle cx="1309.2" cy="921.1" r="7.400"/><circle cx="1762.6" cy="856.4" r="7.400"/><circle cx="1295.7" cy="1062.2" r="7.400"/><circle cx="1404.6" cy="1058.8" r="7.400"/><circle cx="1704.3" cy="1119.5" r="7.400"/><circle cx="1799.7" cy="916.2" r="7.400"/><circle cx="1678.1" cy="838.6" r="7.400"/><circle cx="1751.6" cy="1011.4" r="7.400"/><circle cx="1776.9" cy="1118.4" r="7.400"/><circle cx="1347.4" cy="851.7" r="7.400"/><circle cx="1426.5" cy="977.6" r="7.400"/><circle cx="1475.4" cy="965.3" r="7.400"/><circle cx="1390.3" cy="1029.7" r="7.400"/><circle cx="1426.7" cy="961" r="7.400"/><circle cx="1511.8" cy="850.1" r="7.400"/><circle cx="1601.7" cy="856.7" r="7.400"/><circle cx="1522" cy="1018.7" r="7.400"/><circle cx="1486.4" cy="1055.9" r="7.400"/><circle cx="1717.4" cy="872" r="7.400"/><circle cx="1591.1" cy="1029.7" r="7.400"/><circle cx="1653.1" cy="1178.1" r="7.400"/><circle cx="1391" cy="1047" r="7.400"/><circle cx="1822.4" cy="920.1" r="7.400"/><circle cx="1617.1" cy="905.2" r="7.400"/><circle cx="1671.6" cy="837.9" r="7.400"/><circle cx="1429.9" cy="893.1" r="7.400"/><circle cx="1582.8" cy="895.4" r="7.400"/><circle cx="1375" cy="816.2" r="7.400"/><circle cx="1674.3" cy="889.3" r="7.400"/><circle cx="1437.3" cy="980.6" r="7.400"/><circle cx="1431.1" cy="996.2" r="7.400"/><circle cx="1752" cy="1069.1" r="7.400"/><circle cx="1781" cy="1065.8" r="7.400"/><circle cx="1403.4" cy="1100.5" r="7.400"/><circle cx="1608.5" cy="1107" r="7.400"/><circle cx="1824.9" cy="1000.4" r="7.400"/><circle cx="1340.8" cy="1045.6" r="7.400"/><circle cx="1326.6" cy="819.9" r="7.400"/><circle cx="1473.7" cy="974.8" r="7.400"/><circle cx="1464.9" cy="999.3" r="7.400"/><circle cx="1580.9" cy="1043.1" r="7.400"/><circle cx="1628.1" cy="1067.6" r="7.400"/><circle cx="1409.8" cy="931.3" r="7.400"/><circle cx="1503.3" cy="951.2" r="7.400"/><circle cx="1702.8" cy="1032.1" r="7.400"/><circle cx="1532.7" cy="1056.5" r="7.400"/><circle cx="1372.6" cy="1192" r="7.400"/><circle cx="1661.9" cy="938.2" r="7.400"/><circle cx="1531.8" cy="1187" r="7.400"/><circle cx="1745.7" cy="1025.4" r="7.400"/><circle cx="1504.5" cy="1018.1" r="7.400"/><circle cx="1363.2" cy="870.1" r="7.400"/><circle cx="1699.4" cy="870" r="7.400"/><circle cx="1412" cy="1118.5" r="7.400"/><circle cx="1348.1" cy="878.5" r="7.400"/><circle cx="1399.6" cy="896" r="7.400"/><circle cx="1331.9" cy="1072.2" r="7.400"/><circle cx="1354.7" cy="1079.3" r="7.400"/><circle cx="1313" cy="869.7" r="7.400"/><circle cx="1601.3" cy="876.4" r="7.400"/><circle cx="1630.8" cy="918.6" r="7.400"/><circle cx="1891.2" cy="925.3" r="7.400"/><circle cx="1701.9" cy="876.8" r="7.400"/><circle cx="1704.2" cy="1121.4" r="7.400"/><circle cx="1448.5" cy="852.8" r="7.400"/><circle cx="1702.8" cy="943.1" r="7.400"/><circle cx="1341.4" cy="1165" r="7.400"/><circle cx="1540.5" cy="954.6" r="7.400"/><circle cx="1503.4" cy="1024.5" r="7.400"/><circle cx="1432.5" cy="977.6" r="7.400"/><circle cx="1402.7" cy="1018.9" r="7.400"/><circle cx="1423.1" cy="1029.3" r="7.400"/><circle cx="1456.3" cy="1049.1" r="7.400"/><circle cx="1757.4" cy="854.7" r="7.400"/><circle cx="1854.5" cy="923.6" r="7.400"/><circle cx="1641.8" cy="980" r="7.400"/><circle cx="1597.5" cy="944.2" r="7.400"/><circle cx="1493.7" cy="1091" r="7.400"/><circle cx="1305.8" cy="824.7" r="7.400"/><circle cx="1755.2" cy="944.9" r="7.400"/><circle cx="1554.1" cy="1027" r="7.400"/><circle cx="1751.8" cy="940.1" r="7.400"/><circle cx="1580.5" cy="942.9" r="7.400"/><circle cx="1201.8" cy="957.8" r="7.400"/><circle cx="1333.1" cy="1088.4" r="7.400"/><circle cx="1715" cy="937.7" r="7.400"/><circle cx="1769.9" cy="1202" r="7.400"/><circle cx="1760.8" cy="1028.3" r="7.400"/><circle cx="1416.1" cy="1035.4" r="7.400"/><circle cx="1709.9" cy="998.9" r="7.400"/><circle cx="1491.8" cy="850.4" r="7.400"/><circle cx="1791.1" cy="917.5" r="7.400"/><circle cx="1582.8" cy="1125.8" r="7.400"/><circle cx="1400.8" cy="1091.9" r="7.400"/><circle cx="1535.9" cy="1134.8" r="7.400"/><circle cx="1582.7" cy="927.3" r="7.400"/><circle cx="1557.6" cy="952.8" r="7.400"/><circle cx="1697.2" cy="992.3" r="7.400"/><circle cx="1389.9" cy="839.2" r="7.400"/><circle cx="1350.4" cy="927.4" r="7.400"/><circle cx="1385.2" cy="1098.6" r="7.400"/><circle cx="1395.7" cy="936.8" r="7.400"/><circle cx="1486" cy="827.9" r="7.400"/><circle cx="1734.2" cy="1078.3" r="7.400"/><circle cx="1209.2" cy="837.5" r="7.400"/><circle cx="1383.6" cy="1147" r="7.400"/><circle cx="1575.5" cy="854" r="7.400"/><circle cx="1485" cy="901.7" r="7.400"/><circle cx="1747.8" cy="953.9" r="7.400"/><circle cx="1298.2" cy="1011.9" r="7.400"/><circle cx="1506.8" cy="996.3" r="7.400"/><circle cx="1772.7" cy="1079.5" r="7.400"/><circle cx="1550.4" cy="950.3" r="7.400"/><circle cx="1504.9" cy="1012.2" r="7.400"/><circle cx="1804.8" cy="925.7" r="7.400"/><circle cx="1633.7" cy="999" r="7.400"/><circle cx="1715" cy="1065.6" r="7.400"/><circle cx="1347.9" cy="1087.8" r="7.400"/><circle cx="1697.1" cy="942.9" r="7.400"/><circle cx="1667.2" cy="875.1" r="7.400"/><circle cx="1787.1" cy="926.5" r="7.400"/><circle cx="1619" cy="1089.6" r="7.400"/><circle cx="1508.9" cy="1049" r="7.400"/><circle cx="1343.9" cy="1011.1" r="7.400"/><circle cx="1389.9" cy="941.3" r="7.400"/><circle cx="1320.8" cy="965.3" r="7.400"/><circle cx="1627.5" cy="873.5" r="7.400"/><circle cx="1309.8" cy="938.8" r="7.400"/><circle cx="1343.1" cy="886.5" r="7.400"/><circle cx="1560.1" cy="1095.8" r="7.400"/><circle cx="1842.4" cy="860.5" r="7.400"/><circle cx="1498.3" cy="1021.6" r="7.400"/><circle cx="1618.5" cy="899.4" r="7.400"/><circle cx="1475.2" cy="947.9" r="7.400"/><circle cx="1641.8" cy="1019.7" r="7.400"/><circle cx="1349.7" cy="1058.6" r="7.400"/><circle cx="1656.3" cy="1126.6" r="7.400"/><circle cx="1373.5" cy="1089.6" r="7.400"/><circle cx="1458.2" cy="845.7" r="7.400"/><circle cx="1539.6" cy="1102.1" r="7.400"/><circle cx="1314.7" cy="1044.1" r="7.400"/><circle cx="1742.3" cy="1042.2" r="7.400"/><circle cx="1698" cy="864.4" r="7.400"/><circle cx="1345" cy="1041.5" r="7.400"/><circle cx="1705.8" cy="1088.9" r="7.400"/><circle cx="1544.2" cy="1107.6" r="7.400"/><circle cx="1542.3" cy="1012.6" r="7.400"/><circle cx="1270.4" cy="962.3" r="7.400"/><circle cx="1369.1" cy="1122.2" r="7.400"/><circle cx="1593.8" cy="975.6" r="7.400"/><circle cx="1494.9" cy="1053.2" r="7.400"/><circle cx="1577.4" cy="1128.8" r="7.400"/><circle cx="1586.6" cy="1023.7" r="7.400"/><circle cx="1747.2" cy="855.7" r="7.400"/><circle cx="1467" cy="1064" r="7.400"/><circle cx="1582.6" cy="1056.8" r="7.400"/><circle cx="1301.1" cy="1054.7" r="7.400"/><circle cx="1413" cy="1198" r="7.400"/><circle cx="1793.1" cy="996.4" r="7.400"/><circle cx="1599.6" cy="907.6" r="7.400"/><circle cx="1371.6" cy="1210" r="7.400"/><circle cx="1701.2" cy="912.2" r="7.400"/><circle cx="1487.1" cy="985.6" r="7.400"/><circle cx="1413.5" cy="1044.5" r="7.400"/><circle cx="1544.3" cy="1017.7" r="7.400"/><circle cx="1477.1" cy="929.9" r="7.400"/><circle cx="1574.2" cy="975.6" r="7.400"/><circle cx="1770.8" cy="1076.6" r="7.400"/><circle cx="1454.8" cy="967.3" r="7.400"/><circle cx="1351.7" cy="1002.8" r="7.400"/><circle cx="1347" cy="865.7" r="7.400"/><circle cx="1316.9" cy="1054.2" r="7.400"/><circle cx="1466.3" cy="1097.7" r="7.400"/><circle cx="1583.6" cy="1028.1" r="7.400"/><circle cx="1297.6" cy="1014.1" r="7.400"/><circle cx="1383.7" cy="1056.6" r="7.400"/><circle cx="1386.9" cy="956.8" r="7.400"/><circle cx="1674.5" cy="963.9" r="7.400"/><circle cx="1335.3" cy="1080.9" r="7.400"/><circle cx="1377.7" cy="934.5" r="7.400"/><circle cx="1341.7" cy="1062.8" r="7.400"/><circle cx="1516.9" cy="891.6" r="7.400"/><circle cx="1307.7" cy="925.4" r="7.400"/><circle cx="1609.6" cy="984.8" r="7.400"/><circle cx="1455.8" cy="976.3" r="7.400"/><circle cx="1572.8" cy="1028.5" r="7.400"/><circle cx="1454.8" cy="1006.4" r="7.400"/><circle cx="1308.5" cy="971.3" r="7.400"/><circle cx="1295.8" cy="1122.7" r="7.400"/><circle cx="1344.7" cy="1114.9" r="7.400"/><circle cx="1556.9" cy="1103.2" r="7.400"/><circle cx="1470" cy="1103.1" r="7.400"/><circle cx="1566.8" cy="870.9" r="7.400"/><circle cx="1601" cy="1066.2" r="7.400"/><circle cx="1838.1" cy="1042.4" r="7.400"/><circle cx="1733.4" cy="874.5" r="7.400"/><circle cx="1470.7" cy="1015.5" r="7.400"/><circle cx="1520.2" cy="1058.7" r="7.400"/><circle cx="1531.2" cy="1201" r="7.400"/><circle cx="1532.7" cy="867.7" r="7.400"/><circle cx="1377.4" cy="1036.6" r="7.400"/><circle cx="1256.4" cy="922.1" r="7.400"/><circle cx="1405.1" cy="897.8" r="7.400"/><circle cx="1452.6" cy="1056.4" r="7.400"/><circle cx="1560.8" cy="934.5" r="7.400"/><circle cx="1679.9" cy="861.2" r="7.400"/><circle cx="1386.2" cy="906.5" r="7.400"/><circle cx="1716.4" cy="921.1" r="7.400"/><circle cx="1316.2" cy="1004.3" r="7.400"/><circle cx="1584.1" cy="1065" r="7.400"/><circle cx="1580.9" cy="981.1" r="7.400"/><circle cx="1406.3" cy="965.3" r="7.400"/><circle cx="1505.7" cy="880.9" r="7.400"/><circle cx="1810.5" cy="1000.3" r="7.400"/><circle cx="1422" cy="979.9" r="7.400"/><circle cx="1389.7" cy="969.3" r="7.400"/><circle cx="1512.9" cy="1141.1" r="7.400"/><circle cx="1462.4" cy="1151.4" r="7.400"/><circle cx="1672.9" cy="1115.6" r="7.400"/><circle cx="1372.3" cy="840.4" r="7.400"/><circle cx="1352" cy="976.6" r="7.400"/><circle cx="1370.1" cy="1003.9" r="7.400"/><circle cx="1555.7" cy="1109" r="7.400"/><circle cx="1623.7" cy="924.5" r="7.400"/><circle cx="1549.5" cy="861.4" r="7.400"/><circle cx="1550.3" cy="933.4" r="7.400"/><circle cx="1389.1" cy="821.4" r="7.400"/><circle cx="1502.9" cy="1119.1" r="7.400"/><circle cx="1623.8" cy="1038.2" r="7.400"/><circle cx="1430.4" cy="910.2" r="7.400"/><circle cx="1271.3" cy="900.5" r="7.400"/><circle cx="1496.5" cy="857.6" r="7.400"/><circle cx="1548.6" cy="949.2" r="7.400"/><circle cx="1736.5" cy="1009.4" r="7.400"/><circle cx="1700.3" cy="917.9" r="7.400"/><circle cx="1741.9" cy="842.8" r="7.400"/><circle cx="1424.8" cy="1135.7" r="7.400"/><circle cx="1721.3" cy="1073.2" r="7.400"/><circle cx="1338.7" cy="961.3" r="7.400"/><circle cx="1303.7" cy="1021.3" r="7.400"/><circle cx="1427.1" cy="1065.5" r="7.400"/><circle cx="1379" cy="1002.9" r="7.400"/><circle cx="1404.6" cy="847.6" r="7.400"/><circle cx="1776.6" cy="1086" r="7.400"/><circle cx="1431.5" cy="835" r="7.400"/><circle cx="1512" cy="946.3" r="7.400"/><circle cx="1341.1" cy="839.5" r="7.400"/><circle cx="1559.1" cy="898.8" r="7.400"/><circle cx="1730.2" cy="1114" r="7.400"/><circle cx="1206.7" cy="877" r="7.400"/><circle cx="1396.6" cy="851.3" r="7.400"/><circle cx="1620" cy="1114.3" r="7.400"/><circle cx="1656.3" cy="1023.3" r="7.400"/><circle cx="1292.9" cy="1156.2" r="7.400"/><circle cx="1625" cy="1020.1" r="7.400"/><circle cx="1744.2" cy="1026.5" r="7.400"/><circle cx="1230.3" cy="1059.7" r="7.400"/><circle cx="1544.7" cy="903" r="7.400"/><circle cx="1639.8" cy="913.5" r="7.400"/><circle cx="1452.8" cy="1021.5" r="7.400"/><circle cx="1568.8" cy="1121.7" r="7.400"/><circle cx="1581.7" cy="948.4" r="7.400"/><circle cx="1587.5" cy="894.5" r="7.400"/><circle cx="1449.8" cy="1099.4" r="7.400"/><circle cx="1795.5" cy="1085.3" r="7.400"/><circle cx="1522.5" cy="985" r="7.400"/><circle cx="1709.1" cy="1071.4" r="7.400"/><circle cx="1519" cy="884.3" r="7.400"/><circle cx="1647.7" cy="1059.9" r="7.400"/><circle cx="1726.9" cy="986.1" r="7.400"/><circle cx="1469.7" cy="949" r="7.400"/><circle cx="1520.4" cy="866" r="7.400"/><circle cx="1461.8" cy="1050.2" r="7.400"/><circle cx="1780.6" cy="961.5" r="7.400"/><circle cx="1396.4" cy="1046.1" r="7.400"/><circle cx="1594.3" cy="857.4" r="7.400"/><circle cx="1300.1" cy="1090.9" r="7.400"/><circle cx="1720.3" cy="884.6" r="7.400"/><circle cx="1434.1" cy="1092.9" r="7.400"/><circle cx="1583.7" cy="945.2" r="7.400"/><circle cx="1491.5" cy="1073" r="7.400"/><circle cx="1662.1" cy="941.1" r="7.400"/><circle cx="1508.3" cy="865" r="7.400"/><circle cx="1340.6" cy="952.7" r="7.400"/><circle cx="1573.8" cy="1110.1" r="7.400"/><circle cx="1317.1" cy="1094.1" r="7.400"/><circle cx="1552.9" cy="1134.8" r="7.400"/><circle cx="1490.9" cy="1091.8" r="7.400"/><circle cx="1743.5" cy="1001.5" r="7.400"/><circle cx="1660.5" cy="984.8" r="7.400"/><circle cx="1322.5" cy="872" r="7.400"/><circle cx="1653.6" cy="914.5" r="7.400"/><circle cx="1605.3" cy="1033.6" r="7.400"/><circle cx="1671.8" cy="940.4" r="7.400"/><circle cx="1382.8" cy="1114.9" r="7.400"/><circle cx="1621.6" cy="972.7" r="7.400"/><circle cx="1635.7" cy="850.8" r="7.400"/><circle cx="1307.9" cy="838.7" r="7.400"/><circle cx="1471.6" cy="1015.6" r="7.400"/><circle cx="1666.7" cy="1008.9" r="7.400"/><circle cx="1527.6" cy="851.4" r="7.400"/><circle cx="1779.6" cy="1046.3" r="7.400"/><circle cx="1657.9" cy="994.4" r="7.400"/><circle cx="1636.8" cy="873.6" r="7.400"/><circle cx="1354.5" cy="894.1" r="7.400"/><circle cx="1853.7" cy="881.3" r="7.400"/><circle cx="1556.6" cy="830.9" r="7.400"/><circle cx="1875.8" cy="1004.2" r="7.400"/><circle cx="1575.5" cy="1162.7" r="7.400"/><circle cx="1265.2" cy="1062.9" r="7.400"/><circle cx="1668.2" cy="959.2" r="7.400"/><circle cx="1357.6" cy="1127.8" r="7.400"/><circle cx="1312.2" cy="886.5" r="7.400"/><circle cx="1745.9" cy="1094.7" r="7.400"/><circle cx="1425.3" cy="1120" r="7.400"/><circle cx="1788.7" cy="919" r="7.400"/><circle cx="1457" cy="1118.1" r="7.400"/><circle cx="1704.4" cy="1012.7" r="7.400"/><circle cx="1256.1" cy="902.1" r="7.400"/><circle cx="1429.5" cy="851.9" r="7.400"/><circle cx="1353.5" cy="976.4" r="7.400"/><circle cx="1421.9" cy="1064.8" r="7.400"/><circle cx="1307.1" cy="963.9" r="7.400"/><circle cx="1496.9" cy="1051.4" r="7.400"/><circle cx="1289.7" cy="921.6" r="7.400"/><circle cx="1552.4" cy="1004.5" r="7.400"/><circle cx="1710.6" cy="1053.1" r="7.400"/><circle cx="1872.1" cy="924.1" r="7.400"/><circle cx="1697.4" cy="950.4" r="7.400"/><circle cx="1713.4" cy="946.2" r="7.400"/><circle cx="1700.9" cy="1065.5" r="7.400"/><circle cx="1632.6" cy="1015.1" r="7.400"/><circle cx="1380.7" cy="889.9" r="7.400"/><circle cx="1662" cy="1121.1" r="7.400"/><circle cx="1789.7" cy="1016.9" r="7.400"/><circle cx="1712.8" cy="1135" r="7.400"/><circle cx="1681.7" cy="869.3" r="7.400"/><circle cx="1596" cy="841.6" r="7.400"/><circle cx="1795.4" cy="868" r="7.400"/><circle cx="1487.3" cy="1017.3" r="7.400"/><circle cx="1538.8" cy="1025.9" r="7.400"/><circle cx="1497.8" cy="1095.8" r="7.400"/><circle cx="1426.2" cy="886" r="7.400"/><circle cx="1618.9" cy="1005.4" r="7.400"/><circle cx="1419.8" cy="969.7" r="7.400"/><circle cx="1533.8" cy="891.3" r="7.400"/><circle cx="1653.3" cy="1030.2" r="7.400"/><circle cx="1453.5" cy="1014" r="7.400"/><circle cx="1420.8" cy="951.4" r="7.400"/><circle cx="1514.1" cy="967.1" r="7.400"/><circle cx="1726.1" cy="1002.2" r="7.400"/><circle cx="1505.7" cy="1103.4" r="7.400"/><circle cx="1628.8" cy="1035.2" r="7.400"/><circle cx="1617.2" cy="1021.5" r="7.400"/><circle cx="1507.2" cy="962.5" r="7.400"/><circle cx="1290.1" cy="981.4" r="7.400"/><circle cx="1501.5" cy="904.5" r="7.400"/><circle cx="1702.3" cy="1047.5" r="7.400"/><circle cx="1405.2" cy="980" r="7.400"/><circle cx="1637.3" cy="834.8" r="7.400"/><circle cx="1709.9" cy="1020.4" r="7.400"/><circle cx="1333.2" cy="1166" r="7.400"/><circle cx="1544.9" cy="933" r="7.400"/><circle cx="1640.7" cy="881.8" r="7.400"/><circle cx="1457.2" cy="1134" r="7.400"/><circle cx="1538.3" cy="1006.3" r="7.400"/><circle cx="1218" cy="958.7" r="7.400"/><circle cx="1437.5" cy="1062.6" r="7.400"/><circle cx="1670" cy="837" r="7.400"/><circle cx="1606.1" cy="992.7" r="7.400"/><circle cx="1785.3" cy="885.6" r="7.400"/><circle cx="1574.2" cy="1017.4" r="7.400"/><circle cx="1746.4" cy="890" r="7.400"/><circle cx="1739.1" cy="1091.4" r="7.400"/><circle cx="1463.3" cy="943.3" r="7.400"/><circle cx="1640.3" cy="1033.7" r="7.400"/><circle cx="1857" cy="1002.6" r="7.400"/><circle cx="1384" cy="1132.8" r="7.400"/><circle cx="1790.9" cy="1031.3" r="7.400"/><circle cx="1298.8" cy="1044" r="7.400"/><circle cx="1773.6" cy="844.9" r="7.400"/><circle cx="1512.3" cy="912.2" r="7.400"/><circle cx="1312.8" cy="971.6" r="7.400"/><circle cx="1736.8" cy="1027.1" r="7.400"/><circle cx="1331.9" cy="1198.8" r="7.400"/><circle cx="1692" cy="1078.4" r="7.400"/><circle cx="1553.3" cy="881.1" r="7.400"/><circle cx="1531.7" cy="858.2" r="7.400"/><circle cx="1642.8" cy="994" r="7.400"/><circle cx="1288.1" cy="964.3" r="7.400"/><circle cx="1661.2" cy="1077" r="7.400"/><circle cx="1556.4" cy="1120.2" r="7.400"/><circle cx="1641.6" cy="1103.4" r="7.400"/><circle cx="1714" cy="953" r="7.400"/><circle cx="1347.1" cy="900.9" r="7.400"/><circle cx="1446" cy="892.8" r="7.400"/><circle cx="1438.3" cy="895.6" r="7.400"/><circle cx="1726.9" cy="992.6" r="7.400"/><circle cx="1583.6" cy="862.4" r="7.400"/><circle cx="1740.6" cy="974.7" r="7.400"/><circle cx="1392.8" cy="1012.9" r="7.400"/><circle cx="1499.6" cy="967.3" r="7.400"/><circle cx="1800.5" cy="871.7" r="7.400"/><circle cx="1514.3" cy="878.3" r="7.400"/><circle cx="1715.4" cy="859.1" r="7.400"/><circle cx="1566.6" cy="901.3" r="7.400"/><circle cx="1563.5" cy="848.6" r="7.400"/><circle cx="1743.4" cy="1040.7" r="7.400"/><circle cx="1512" cy="1019.9" r="7.400"/><circle cx="1289.2" cy="1113.7" r="7.400"/><circle cx="1555.5" cy="846.8" r="7.400"/><circle cx="1678" cy="983.8" r="7.400"/><circle cx="1492.3" cy="1178.9" r="7.400"/><circle cx="1501.8" cy="931.6" r="7.400"/><circle cx="1584.7" cy="904.8" r="7.400"/><circle cx="1472" cy="914.7" r="7.400"/><circle cx="1387.8" cy="895.6" r="7.400"/><circle cx="1549.5" cy="1034.1" r="7.400"/><circle cx="1762.6" cy="1005.1" r="7.400"/><circle cx="1719" cy="911.8" r="7.400"/><circle cx="1310.9" cy="842.7" r="7.400"/><circle cx="1685.4" cy="1031.4" r="7.400"/><circle cx="1669.6" cy="1020.1" r="7.400"/><circle cx="1752.8" cy="914.5" r="7.400"/><circle cx="1320.4" cy="956.6" r="7.400"/><circle cx="1225.1" cy="1080" r="7.400"/><circle cx="1788.4" cy="965.9" r="7.400"/><circle cx="1470.8" cy="842.3" r="7.400"/><circle cx="1514.1" cy="986.5" r="7.400"/><circle cx="1547.6" cy="940.5" r="7.400"/><circle cx="1657.1" cy="982.1" r="7.400"/><circle cx="1594.8" cy="956.9" r="7.400"/><circle cx="1345.5" cy="885.5" r="7.400"/><circle cx="1474.7" cy="863.8" r="7.400"/><circle cx="1736.6" cy="1144.3" r="7.400"/><circle cx="1735.9" cy="1159.9" r="7.400"/><circle cx="1705.5" cy="904.7" r="7.400"/><circle cx="1584.6" cy="1109.1" r="7.400"/><circle cx="1427.4" cy="932.6" r="7.400"/><circle cx="1339.6" cy="891.6" r="7.400"/><circle cx="1709" cy="871" r="7.400"/><circle cx="1752.2" cy="905.6" r="7.400"/><circle cx="1667.6" cy="954.9" r="7.400"/><circle cx="1439.2" cy="1129.1" r="7.400"/><circle cx="1344.8" cy="846.2" r="7.400"/><circle cx="1470.8" cy="824.7" r="7.400"/><circle cx="1739.5" cy="1109.5" r="7.400"/><circle cx="1401.9" cy="1011.2" r="7.400"/><circle cx="1312" cy="904.4" r="7.400"/><circle cx="1363.5" cy="847.5" r="7.400"/><circle cx="1796.3" cy="1007.2" r="7.400"/><circle cx="1325.2" cy="924.6" r="7.400"/><circle cx="1675.3" cy="996.5" r="7.400"/><circle cx="1606.4" cy="978.5" r="7.400"/><circle cx="1797.4" cy="934.4" r="7.400"/><circle cx="1717.9" cy="843.3" r="7.400"/><circle cx="1665.5" cy="867.8" r="7.400"/><circle cx="1389.8" cy="925.4" r="7.400"/><circle cx="1384.7" cy="978.3" r="7.400"/><circle cx="1826.1" cy="856.1" r="7.400"/><circle cx="1677.1" cy="991.2" r="7.400"/><circle cx="1318.1" cy="819.7" r="7.400"/><circle cx="1339.6" cy="1004.5" r="7.400"/><circle cx="1550.7" cy="906.5" r="7.400"/><circle cx="1307.7" cy="932.8" r="7.400"/><circle cx="1579.1" cy="1078.5" r="7.400"/><circle cx="1784.8" cy="925" r="7.400"/><circle cx="1543.8" cy="1032.4" r="7.400"/><circle cx="1872.3" cy="1043.2" r="7.400"/><circle cx="1538.1" cy="1061.6" r="7.400"/><circle cx="1371.6" cy="1107.3" r="7.400"/><circle cx="1514.3" cy="894.7" r="7.400"/><circle cx="1793.6" cy="1113.3" r="7.400"/><circle cx="1497.2" cy="1038" r="7.400"/><circle cx="1503.2" cy="1065" r="7.400"/><circle cx="1613.3" cy="1057.7" r="7.400"/><circle cx="1392.9" cy="875" r="7.400"/><circle cx="1777.4" cy="952.1" r="7.400"/><circle cx="1625.6" cy="1105.8" r="7.400"/><circle cx="1474" cy="848.9" r="7.400"/><circle cx="1615.6" cy="1155.3" r="7.400"/><circle cx="1676.4" cy="932.1" r="7.400"/><circle cx="1417.3" cy="1003" r="7.400"/><circle cx="1748.8" cy="1062.4" r="7.400"/><circle cx="1548.5" cy="1053.3" r="7.400"/><circle cx="1709.6" cy="1041.8" r="7.400"/><circle cx="1743.4" cy="1059.1" r="7.400"/><circle cx="1699.6" cy="1154.4" r="7.400"/><circle cx="1655.8" cy="1144.6" r="7.400"/><circle cx="1546.7" cy="869.3" r="7.400"/><circle cx="1270.2" cy="1022.1" r="7.400"/><circle cx="1345.5" cy="933.7" r="7.400"/><circle cx="1359" cy="854.3" r="7.400"/><circle cx="1433.4" cy="893.7" r="7.400"/><circle cx="1530" cy="1125.1" r="7.400"/><circle cx="1347.9" cy="1042.5" r="7.400"/><circle cx="1539.2" cy="1101.4" r="7.400"/><circle cx="1455.3" cy="1065.2" r="7.400"/><circle cx="1576.2" cy="1146.5" r="7.400"/><circle cx="1645.4" cy="858.7" r="7.400"/><circle cx="1839.3" cy="1082.9" r="7.400"/><circle cx="1773.6" cy="1150.1" r="7.400"/><circle cx="1324" cy="893.9" r="7.400"/><circle cx="1716.3" cy="1101.6" r="7.400"/><circle cx="1532" cy="940.6" r="7.400"/><circle cx="1692.6" cy="1108.6" r="7.400"/><circle cx="1421.2" cy="934.6" r="7.400"/><circle cx="1372.4" cy="1177.8" r="7.400"/><circle cx="1304.5" cy="1004.2" r="7.400"/><circle cx="1517.6" cy="951.9" r="7.400"/><circle cx="1478.4" cy="898.9" r="7.400"/><circle cx="1552.7" cy="1019.4" r="7.400"/><circle cx="1589.2" cy="1071.6" r="7.400"/><circle cx="1356.6" cy="1146.4" r="7.400"/><circle cx="1792.3" cy="900.4" r="7.400"/><circle cx="1482.4" cy="861.1" r="7.400"/><circle cx="1804.4" cy="976.8" r="7.400"/><circle cx="1366.6" cy="1095.1" r="7.400"/><circle cx="1726.3" cy="1027.4" r="7.400"/><circle cx="1494.8" cy="1162.1" r="7.400"/><circle cx="1583.9" cy="911.3" r="7.400"/><circle cx="1654.2" cy="1116.2" r="7.400"/><circle cx="1446.1" cy="1049.3" r="7.400"/><circle cx="1496.4" cy="938.7" r="7.400"/><circle cx="1359.8" cy="1114.1" r="7.400"/><circle cx="1691" cy="1119.4" r="7.400"/><circle cx="1473.3" cy="984.9" r="7.400"/><circle cx="1608.9" cy="1100.3" r="7.400"/><circle cx="1590.9" cy="1006.8" r="7.400"/><circle cx="1782.4" cy="1132" r="7.400"/><circle cx="1603.2" cy="909.8" r="7.400"/><circle cx="1624.6" cy="888.4" r="7.400"/><circle cx="1753.1" cy="907.1" r="7.400"/><circle cx="1316.3" cy="838.4" r="7.400"/><circle cx="1668.9" cy="854.9" r="7.400"/><circle cx="1668.7" cy="901.6" r="7.400"/><circle cx="1355.8" cy="842.4" r="7.400"/><circle cx="1793.8" cy="999.6" r="7.400"/><circle cx="1421" cy="897.7" r="7.400"/><circle cx="1435.6" cy="898.2" r="7.400"/><circle cx="1796.2" cy="948.5" r="7.400"/><circle cx="1298.3" cy="1106.6" r="7.400"/><circle cx="1690.9" cy="999.5" r="7.400"/><circle cx="1593.2" cy="936.7" r="7.400"/><circle cx="1440.1" cy="966.9" r="7.400"/><circle cx="1510.5" cy="1033.5" r="7.400"/><circle cx="1745.2" cy="1128.3" r="7.400"/><circle cx="1496.8" cy="1113.4" r="7.400"/><circle cx="1411.7" cy="891.1" r="7.400"/><circle cx="1338.6" cy="987.6" r="7.400"/><circle cx="1373.8" cy="960.3" r="7.400"/><circle cx="1343.4" cy="814.8" r="7.400"/><circle cx="1376" cy="1126.9" r="7.400"/><circle cx="1673.7" cy="1076" r="7.400"/><circle cx="1429.3" cy="1047.7" r="7.400"/><circle cx="1627.1" cy="1104.1" r="7.400"/><circle cx="1324.3" cy="836.6" r="7.400"/><circle cx="1744.9" cy="1006.7" r="7.400"/><circle cx="1366.1" cy="1088.6" r="7.400"/><circle cx="1531.6" cy="1075" r="7.400"/><circle cx="1554.9" cy="988.5" r="7.400"/><circle cx="1268.1" cy="1000.6" r="7.400"/><circle cx="1516.9" cy="899.8" r="7.400"/><circle cx="1700.9" cy="1081.4" r="7.400"/><circle cx="1542" cy="1066.2" r="7.400"/><circle cx="1818.8" cy="880.8" r="7.400"/><circle cx="1303.4" cy="958.6" r="7.400"/><circle cx="1702.9" cy="1028" r="7.400"/><circle cx="1333.6" cy="973" r="7.400"/><circle cx="1382.8" cy="924.6" r="7.400"/><circle cx="1504.8" cy="1057.9" r="7.400"/><circle cx="1667.8" cy="990.7" r="7.400"/><circle cx="1372.5" cy="968.5" r="7.400"/><circle cx="1648.5" cy="867.5" r="7.400"/><circle cx="1522.7" cy="830.4" r="7.400"/><circle cx="1467.9" cy="965.6" r="7.400"/><circle cx="1748.1" cy="957.2" r="7.400"/><circle cx="1721.8" cy="871.8" r="7.400"/><circle cx="1324.6" cy="932.1" r="7.400"/><circle cx="1886.3" cy="884.4" r="7.400"/><circle cx="1438.3" cy="1113.7" r="7.400"/><circle cx="1494.3" cy="931.4" r="7.400"/><circle cx="1582.8" cy="869.1" r="7.400"/><circle cx="1620.8" cy="987.5" r="7.400"/><circle cx="1444.3" cy="843.7" r="7.400"/><circle cx="1571.9" cy="1067.1" r="7.400"/><circle cx="1557.3" cy="918.9" r="7.400"/><circle cx="1630.5" cy="936.9" r="7.400"/><circle cx="1434" cy="961.5" r="7.400"/><circle cx="1692.8" cy="1038.5" r="7.400"/><circle cx="1708.2" cy="961.1" r="7.400"/><circle cx="1436" cy="1013.8" r="7.400"/><circle cx="1783.5" cy="957.1" r="7.400"/><circle cx="1209.5" cy="1079.6" r="7.400"/><circle cx="1451.8" cy="1115.9" r="7.400"/><circle cx="1563.1" cy="941.1" r="7.400"/><circle cx="1561.6" cy="1055.9" r="7.400"/><circle cx="1478.2" cy="861" r="7.400"/><circle cx="1746.4" cy="988.2" r="7.400"/><circle cx="1746.9" cy="1108.4" r="7.400"/><circle cx="1505.2" cy="916.7" r="7.400"/><circle cx="1515.1" cy="844.3" r="7.400"/><circle cx="1623.8" cy="1072.2" r="7.400"/><circle cx="1632" cy="867.6" r="7.400"/><circle cx="1291.6" cy="1174.1" r="7.400"/><circle cx="1631.9" cy="983.7" r="7.400"/><circle cx="1334.9" cy="1000.8" r="7.400"/><circle cx="1661.9" cy="988.9" r="7.400"/><circle cx="1516.1" cy="862.4" r="7.400"/><circle cx="1429.4" cy="853.1" r="7.400"/><circle cx="1693" cy="1112.7" r="7.400"/><circle cx="1775.9" cy="1009.4" r="7.400"/><circle cx="1650.8" cy="1123.5" r="7.400"/><circle cx="1297.5" cy="1062.4" r="7.400"/><circle cx="1634.3" cy="947.9" r="7.400"/><circle cx="1370.9" cy="1014.7" r="7.400"/><circle cx="1284.2" cy="1023.7" r="7.400"/><circle cx="1303.1" cy="970.5" r="7.400"/><circle cx="1330.2" cy="878.4" r="7.400"/><circle cx="1295.4" cy="1140" r="7.400"/><circle cx="1711.1" cy="991.3" r="7.400"/><circle cx="1625.6" cy="1101" r="7.400"/><circle cx="1464.1" cy="894" r="7.400"/><circle cx="1474" cy="879.8" r="7.400"/><circle cx="1436.7" cy="843.5" r="7.400"/><circle cx="1288.1" cy="820.6" r="7.400"/><circle cx="1556.2" cy="973.3" r="7.400"/><circle cx="1349.3" cy="961.7" r="7.400"/><circle cx="1798.3" cy="898.8" r="7.400"/><circle cx="1750.7" cy="1026.7" r="7.400"/><circle cx="1766.6" cy="957" r="7.400"/><circle cx="1591.9" cy="983.2" r="7.400"/><circle cx="1386.5" cy="991.1" r="7.400"/><circle cx="1629" cy="954.7" r="7.400"/><circle cx="1526.1" cy="931.7" r="7.400"/><circle cx="1628" cy="1086.2" r="7.400"/><circle cx="1297.6" cy="1082.9" r="7.400"/><circle cx="1446.5" cy="825.5" r="7.400"/><circle cx="1822.1" cy="1080.2" r="7.400"/><circle cx="1505.3" cy="1010" r="7.400"/><circle cx="1525.6" cy="1013.7" r="7.400"/><circle cx="1753.3" cy="959.2" r="7.400"/><circle cx="1748.4" cy="960.2" r="7.400"/><circle cx="1282.4" cy="1003.1" r="7.400"/><circle cx="1414.2" cy="850" r="7.400"/><circle cx="1723.6" cy="852.1" r="7.400"/><circle cx="1716" cy="1118.1" r="7.400"/><circle cx="1544.4" cy="920" r="7.400"/><circle cx="1246.8" cy="1040.2" r="7.400"/><circle cx="1315.8" cy="877.3" r="7.400"/><circle cx="1497.2" cy="1131" r="7.400"/><circle cx="1341.5" cy="1129.9" r="7.400"/><circle cx="1315.1" cy="1085.2" r="7.400"/><circle cx="1795.4" cy="849.2" r="7.400"/><circle cx="1677.9" cy="947.6" r="7.400"/><circle cx="1545.1" cy="999.1" r="7.400"/><circle cx="1575.9" cy="1105.1" r="7.400"/><circle cx="1586.5" cy="1057.2" r="7.400"/><circle cx="1503.5" cy="1046.9" r="7.400"/><circle cx="1643.9" cy="989.2" r="7.400"/><circle cx="1541.8" cy="1093.2" r="7.400"/><circle cx="1499.9" cy="1080.8" r="7.400"/><circle cx="1280.4" cy="1083.9" r="7.400"/><circle cx="1633" cy="904.2" r="7.400"/><circle cx="1385.3" cy="874.6" r="7.400"/><circle cx="1756.1" cy="1077" r="7.400"/><circle cx="1349.2" cy="832.1" r="7.400"/><circle cx="1378" cy="1109.1" r="7.400"/><circle cx="1734.8" cy="1045.2" r="7.400"/><circle cx="1891.9" cy="1084.4" r="7.400"/><circle cx="1754.7" cy="1035.2" r="7.400"/><circle cx="1668.1" cy="909.5" r="7.400"/><circle cx="1655.8" cy="1074.8" r="7.400"/><circle cx="1783.5" cy="1116.5" r="7.400"/><circle cx="1739.4" cy="1121.3" r="7.400"/><circle cx="1641.7" cy="861" r="7.400"/><circle cx="1462.1" cy="1065.9" r="7.400"/><circle cx="1657.7" cy="836.9" r="7.400"/><circle cx="1381" cy="1076.3" r="7.400"/><circle cx="1416.3" cy="1016.7" r="7.400"/><circle cx="1334.2" cy="1013.1" r="7.400"/><circle cx="1774.9" cy="1029" r="7.400"/><circle cx="1873.2" cy="1083.3" r="7.400"/><circle cx="1769.2" cy="1113.8" r="7.400"/><circle cx="1507.5" cy="932.3" r="7.400"/><circle cx="1627" cy="970.7" r="7.400"/><circle cx="1397.9" cy="883.5" r="7.400"/><circle cx="1291.4" cy="1206.9" r="7.400"/><circle cx="1543.2" cy="937.4" r="7.400"/><circle cx="1253.8" cy="961.8" r="7.400"/><circle cx="1709.3" cy="1113" r="7.400"/><circle cx="1298.4" cy="1088.7" r="7.400"/><circle cx="1372.9" cy="1072.4" r="7.400"/><circle cx="1323.2" cy="918.9" r="7.400"/><circle cx="1222" cy="917.7" r="7.400"/><circle cx="1465.2" cy="1081.9" r="7.400"/><circle cx="1239.4" cy="878.8" r="7.400"/><circle cx="1790.6" cy="933.6" r="7.400"/><circle cx="1404" cy="1084.2" r="7.400"/><circle cx="1599.8" cy="896.5" r="7.400"/><circle cx="1381.9" cy="939.7" r="7.400"/><circle cx="1473.7" cy="996.8" r="7.400"/><circle cx="1505.7" cy="1097.7" r="7.400"/><circle cx="1544.5" cy="886.9" r="7.400"/><circle cx="1346" cy="1095.5" r="7.400"/><circle cx="1531.5" cy="1107.8" r="7.400"/><circle cx="1613.2" cy="1173.3" r="7.400"/><circle cx="1251.5" cy="1000.7" r="7.400"/><circle cx="1588.4" cy="879.3" r="7.400"/><circle cx="1582.9" cy="1158.8" r="7.400"/><circle cx="1703.7" cy="924.1" r="7.400"/><circle cx="1394" cy="890.8" r="7.400"/><circle cx="1438.7" cy="827" r="7.400"/><circle cx="1400" cy="877.6" r="7.400"/><circle cx="1489.7" cy="976.9" r="7.400"/><circle cx="1755.6" cy="1122.1" r="7.400"/><circle cx="1458.3" cy="1099.7" r="7.400"/><circle cx="1789.7" cy="1050" r="7.400"/><circle cx="1840.7" cy="1002.8" r="7.400"/><circle cx="1319.7" cy="973.7" r="7.400"/><circle cx="1652.3" cy="1068" r="7.400"/><circle cx="1772.1" cy="1124.7" r="7.400"/><circle cx="1475.2" cy="846.3" r="7.400"/><circle cx="1385" cy="1080.8" r="7.400"/><circle cx="1347.8" cy="943.6" r="7.400"/><circle cx="1740.8" cy="944" r="7.400"/><circle cx="1497.6" cy="944.1" r="7.400"/><circle cx="1343" cy="919.4" r="7.400"/><circle cx="1473.5" cy="896.5" r="7.400"/><circle cx="1789.9" cy="949.3" r="7.400"/><circle cx="1307.5" cy="982.7" r="7.400"/><circle cx="1660.6" cy="951.9" r="7.400"/><circle cx="1833.2" cy="959.6" r="7.400"/><circle cx="1281.7" cy="1061.5" r="7.400"/><circle cx="1731.5" cy="866.1" r="7.400"/><circle cx="1216" cy="997.1" r="7.400"/><circle cx="1558" cy="934.7" r="7.400"/><circle cx="1664.4" cy="949.7" r="7.400"/><circle cx="1435.6" cy="928.3" r="7.400"/><circle cx="1395.9" cy="839.5" r="7.400"/><circle cx="1750.3" cy="868.8" r="7.400"/><circle cx="1735.6" cy="914.7" r="7.400"/><circle cx="1328.2" cy="851.6" r="7.400"/><circle cx="1197.4" cy="995.7" r="7.400"/><circle cx="1339.1" cy="1096.7" r="7.400"/><circle cx="1573.4" cy="1052.6" r="7.400"/><circle cx="1489.8" cy="1105.7" r="7.400"/><circle cx="1426.1" cy="1085.2" r="7.400"/><circle cx="1411.4" cy="858.4" r="7.400"/><circle cx="1760.4" cy="947" r="7.400"/><circle cx="1350.7" cy="1009.1" r="7.400"/><circle cx="1376.8" cy="1022.6" r="7.400"/><circle cx="1589.6" cy="926.6" r="7.400"/><circle cx="1577.7" cy="1112.3" r="7.400"/><circle cx="1676.4" cy="855.1" r="7.400"/><circle cx="1310.3" cy="826.4" r="7.400"/><circle cx="1780.7" cy="1083.2" r="7.400"/><circle cx="1673.3" cy="905.9" r="7.400"/><circle cx="1670.7" cy="924.5" r="7.400"/><circle cx="1612.8" cy="952.1" r="7.400"/><circle cx="1692" cy="1199.5" r="7.400"/><circle cx="1738" cy="991.7" r="7.400"/><circle cx="1592.3" cy="1106.3" r="7.400"/><circle cx="1355.4" cy="839.5" r="7.400"/><circle cx="1381" cy="883.8" r="7.400"/><circle cx="1802.1" cy="880.9" r="7.400"/><circle cx="1521.3" cy="1099.3" r="7.400"/><circle cx="1618.3" cy="870.8" r="7.400"/><circle cx="1594.3" cy="875.4" r="7.400"/><circle cx="1571.5" cy="1196.5" r="7.400"/><circle cx="1487.5" cy="1096.4" r="7.400"/><circle cx="1477.7" cy="942" r="7.400"/><circle cx="1691.3" cy="1091.1" r="7.400"/><circle cx="1480.2" cy="896.7" r="7.400"/><circle cx="1383.3" cy="1089.5" r="7.400"/><circle cx="1730.6" cy="1105.8" r="7.400"/><circle cx="1759" cy="891" r="7.400"/><circle cx="1229.6" cy="1039.2" r="7.400"/><circle cx="1608.2" cy="1018.1" r="7.400"/><circle cx="1884.5" cy="966" r="7.400"/><circle cx="1372.6" cy="922.4" r="7.400"/><circle cx="1800.1" cy="878.8" r="7.400"/><circle cx="1694.1" cy="1076.4" r="7.400"/><circle cx="1751.7" cy="993.2" r="7.400"/><circle cx="1299.8" cy="1024.1" r="7.400"/><circle cx="1311.8" cy="885.7" r="7.400"/><circle cx="1288.9" cy="1132" r="7.400"/><circle cx="1782.1" cy="1050.7" r="7.400"/><circle cx="1429.5" cy="1048" r="7.400"/><circle cx="1332.6" cy="1046" r="7.400"/><circle cx="1497.9" cy="863.9" r="7.400"/><circle cx="1301.4" cy="980.8" r="7.400"/><circle cx="1737.1" cy="1075" r="7.400"/><circle cx="1743.8" cy="994.7" r="7.400"/><circle cx="1713.8" cy="1150.2" r="7.400"/><circle cx="1568.4" cy="910.9" r="7.400"/><circle cx="1517.6" cy="900" r="7.400"/><circle cx="1725.9" cy="1114.5" r="7.400"/><circle cx="1615.5" cy="1071.3" r="7.400"/><circle cx="1303" cy="1038.3" r="7.400"/><circle cx="1593.4" cy="1131.2" r="7.400"/><circle cx="1542.6" cy="1140.7" r="7.400"/><circle cx="1792.1" cy="883.1" r="7.400"/><circle cx="1462.2" cy="945.6" r="7.400"/><circle cx="1686.6" cy="877.6" r="7.400"/><circle cx="1616.5" cy="1122.2" r="7.400"/><circle cx="1677.5" cy="1102.4" r="7.400"/><circle cx="1630.9" cy="948.4" r="7.400"/><circle cx="1628.4" cy="1049.1" r="7.400"/><circle cx="1710.3" cy="943.9" r="7.400"/><circle cx="1514.3" cy="1126.9" r="7.400"/><circle cx="1428.8" cy="945.6" r="7.400"/><circle cx="1557.5" cy="982.8" r="7.400"/><circle cx="1510.8" cy="849.1" r="7.400"/><circle cx="1455.9" cy="927" r="7.400"/><circle cx="1451.8" cy="1203.3" r="7.400"/><circle cx="1733.1" cy="1195" r="7.400"/><circle cx="1620.7" cy="939.7" r="7.400"/><circle cx="1731.1" cy="1096.4" r="7.400"/><circle cx="1658.9" cy="1110.7" r="7.400"/><circle cx="1577.7" cy="1094.3" r="7.400"/><circle cx="1830.4" cy="1059.7" r="7.400"/><circle cx="1603.5" cy="839.8" r="7.400"/><circle cx="1868.5" cy="962.4" r="7.400"/><circle cx="1784.8" cy="999.2" r="7.400"/><circle cx="1388.8" cy="1062.1" r="7.400"/><circle cx="1527.4" cy="1051.9" r="7.400"/><circle cx="1433.3" cy="884.2" r="7.400"/><circle cx="1620.2" cy="1067.2" r="7.400"/><circle cx="1440.1" cy="927.9" r="7.400"/><circle cx="1708.7" cy="853.5" r="7.400"/><circle cx="1715.9" cy="906.7" r="7.400"/><circle cx="1736.4" cy="1035.2" r="7.400"/><circle cx="1658.1" cy="1109.9" r="7.400"/><circle cx="1611.1" cy="937.2" r="7.400"/><circle cx="1212.8" cy="1036.9" r="7.400"/><circle cx="1499.8" cy="1005.1" r="7.400"/><circle cx="1663.1" cy="1155.2" r="7.400"/><circle cx="1251.1" cy="1019.1" r="7.400"/><circle cx="1465.7" cy="1016.4" r="7.400"/><circle cx="1608.6" cy="1120.6" r="7.400"/><circle cx="1612.2" cy="856.7" r="7.400"/><circle cx="1634.2" cy="887.3" r="7.400"/><circle cx="1739.5" cy="958" r="7.400"/><circle cx="1735" cy="919.6" r="7.400"/><circle cx="1423.5" cy="964.6" r="7.400"/><circle cx="1627.3" cy="858.1" r="7.400"/><circle cx="1710.2" cy="1002.6" r="7.400"/><circle cx="1621.6" cy="1054.4" r="7.400"/><circle cx="1566.6" cy="895.8" r="7.400"/><circle cx="1630.5" cy="953.8" r="7.400"/><circle cx="1548.2" cy="982.3" r="7.400"/><circle cx="1351.7" cy="911.1" r="7.400"/><circle cx="1605.2" cy="1074" r="7.400"/><circle cx="1410.3" cy="818.5" r="7.400"/><circle cx="1523.2" cy="1094.9" r="7.400"/><circle cx="1713.8" cy="1104.5" r="7.400"/><circle cx="1291.6" cy="1190" r="7.400"/><circle cx="1306.3" cy="1071.5" r="7.400"/><circle cx="1814.5" cy="959.5" r="7.400"/><circle cx="1586.6" cy="994.9" r="7.400"/><circle cx="1584.4" cy="1091.1" r="7.400"/><circle cx="1707.3" cy="888.7" r="7.400"/><circle cx="1669" cy="1029.1" r="7.400"/><circle cx="1442.4" cy="820.8" r="7.400"/><circle cx="1763.5" cy="990.1" r="7.400"/><circle cx="1301.9" cy="961.9" r="7.400"/><circle cx="1363" cy="1040.8" r="7.400"/><circle cx="1507.2" cy="1090.6" r="7.400"/><circle cx="1790.1" cy="845.7" r="7.400"/><circle cx="1798.3" cy="1046.3" r="7.400"/><circle cx="1272.7" cy="923.3" r="7.400"/><circle cx="1365.3" cy="821.9" r="7.400"/><circle cx="1462.5" cy="1115.1" r="7.400"/><circle cx="1354.8" cy="962" r="7.400"/><circle cx="1638.5" cy="1117.1" r="7.400"/><circle cx="1344.1" cy="937.5" r="7.400"/><circle cx="1809.4" cy="1058.9" r="7.400"/><circle cx="1770.3" cy="1095" r="7.400"/><circle cx="1388.3" cy="1082.6" r="7.400"/><circle cx="1662.2" cy="1043.3" r="7.400"/><circle cx="1516.1" cy="934.4" r="7.400"/><circle cx="1461.9" cy="1046.8" r="7.400"/><circle cx="1272.3" cy="980.2" r="7.400"/><circle cx="1712.5" cy="987.3" r="7.400"/><circle cx="1738.4" cy="1125.8" r="7.400"/><circle cx="1364.5" cy="1049.2" r="7.400"/><circle cx="1772.3" cy="1184.4" r="7.400"/><circle cx="1792.8" cy="968" r="7.400"/><circle cx="1800.7" cy="959.1" r="7.400"/><circle cx="1695.2" cy="1148" r="7.400"/><circle cx="1426.5" cy="859" r="7.400"/><circle cx="1711.9" cy="909.5" r="7.400"/><circle cx="1587.5" cy="862.3" r="7.400"/><circle cx="1551.9" cy="898" r="7.400"/><circle cx="1331.1" cy="1092.4" r="7.400"/><circle cx="1794.2" cy="1119.8" r="7.400"/><circle cx="1616.1" cy="944.8" r="7.400"/><circle cx="1591.7" cy="893" r="7.400"/><circle cx="1709.7" cy="1024.6" r="7.400"/><circle cx="1668.8" cy="869.8" r="7.400"/><circle cx="1340.8" cy="918.2" r="7.400"/><circle cx="1380.1" cy="1092.5" r="7.400"/><circle cx="1376.7" cy="1143.5" r="7.400"/><circle cx="1262.7" cy="1040.3" r="7.400"/><circle cx="1262.6" cy="1081.4" r="7.400"/><circle cx="1419.6" cy="1057.7" r="7.400"/><circle cx="1613.1" cy="1054.8" r="7.400"/><circle cx="1582.5" cy="1061" r="7.400"/><circle cx="1460.9" cy="1082.8" r="7.400"/><circle cx="1590.6" cy="1041.8" r="7.400"/><circle cx="1408.6" cy="844.6" r="7.400"/><circle cx="1779.6" cy="975.3" r="7.400"/><circle cx="1384.6" cy="1024.2" r="7.400"/><circle cx="1769.7" cy="917.4" r="7.400"/><circle cx="1469.2" cy="1050.1" r="7.400"/><circle cx="1592.7" cy="857.8" r="7.400"/><circle cx="1572.8" cy="1070.5" r="7.400"/><circle cx="1531.6" cy="945.1" r="7.400"/><circle cx="1418.6" cy="1012.4" r="7.400"/><circle cx="1601.3" cy="890.7" r="7.400"/><circle cx="1635" cy="870.2" r="7.400"/><circle cx="1701.9" cy="1072.9" r="7.400"/><circle cx="1577" cy="937.3" r="7.400"/><circle cx="1500.4" cy="987" r="7.400"/><circle cx="1431.1" cy="1030.7" r="7.400"/><circle cx="1591.5" cy="1018.9" r="7.400"/><circle cx="1441" cy="859" r="7.400"/><circle cx="1384.3" cy="890.4" r="7.400"/><circle cx="1293.7" cy="1046.8" r="7.400"/><circle cx="1805" cy="1080.6" r="7.400"/><circle cx="1471" cy="1056" r="7.400"/><circle cx="1374.9" cy="1158.2" r="7.400"/><circle cx="1368.6" cy="975.5" r="7.400"/><circle cx="1471.9" cy="980.1" r="7.400"/><circle cx="1504.3" cy="898.6" r="7.400"/><circle cx="1458" cy="997.8" r="7.400"/><circle cx="1345.4" cy="995.6" r="7.400"/><circle cx="1486.9" cy="1025.2" r="7.400"/><circle cx="1464.5" cy="1033.9" r="7.400"/><circle cx="1595.5" cy="1116.8" r="7.400"/><circle cx="1593.4" cy="973.2" r="7.400"/><circle cx="1544.3" cy="1056.4" r="7.400"/><circle cx="1570.2" cy="1103.6" r="7.400"/><circle cx="1809.3" cy="1121.3" r="7.400"/><circle cx="1781.3" cy="871.5" r="7.400"/><circle cx="1307.1" cy="858.2" r="7.400"/><circle cx="1714.9" cy="875.2" r="7.400"/><circle cx="1506.2" cy="979.2" r="7.400"/><circle cx="1460.6" cy="934.1" r="7.400"/><circle cx="1368.5" cy="896.5" r="7.400"/><circle cx="1754" cy="887.4" r="7.400"/><circle cx="1355" cy="922.1" r="7.400"/><circle cx="1316.8" cy="1066.2" r="7.400"/><circle cx="1692.4" cy="1181.5" r="7.400"/><circle cx="1552.1" cy="895.1" r="7.400"/><circle cx="1635.1" cy="1067.3" r="7.400"/><circle cx="1292.2" cy="904.2" r="7.400"/><circle cx="1638.4" cy="932.9" r="7.400"/><circle cx="1328.4" cy="1039.6" r="7.400"/><circle cx="1665.3" cy="886.6" r="7.400"/><circle cx="1454.3" cy="1029.6" r="7.400"/><circle cx="1762.1" cy="874.1" r="7.400"/><circle cx="1445.3" cy="861.9" r="7.400"/><circle cx="1522.5" cy="1068.7" r="7.400"/><circle cx="1398.1" cy="930" r="7.400"/><circle cx="1491.7" cy="1122.8" r="7.400"/><circle cx="1508.3" cy="1085.6" r="7.400"/><circle cx="1356.9" cy="815.5" r="7.400"/><circle cx="1556.4" cy="1014.1" r="7.400"/><circle cx="1225.6" cy="836.8" r="7.400"/><circle cx="1549.7" cy="900.5" r="7.400"/><circle cx="1408.1" cy="971.8" r="7.400"/><circle cx="1709.2" cy="978.4" r="7.400"/><circle cx="1467.1" cy="858.6" r="7.400"/><circle cx="1799.1" cy="965" r="7.400"/><circle cx="1714.8" cy="891.6" r="7.400"/><circle cx="1481.9" cy="890.2" r="7.400"/><circle cx="1714.6" cy="865" r="7.400"/><circle cx="1517" cy="915.8" r="7.400"/><circle cx="1639.7" cy="1074" r="7.400"/><circle cx="1422.6" cy="1153.8" r="7.400"/><circle cx="1719.6" cy="903.3" r="7.400"/><circle cx="1699.3" cy="1008.1" r="7.400"/><circle cx="1779.7" cy="1109.3" r="7.400"/><circle cx="1256.7" cy="980.7" r="7.400"/><circle cx="1736" cy="908.5" r="7.400"/><circle cx="1306" cy="1107.2" r="7.400"/><circle cx="1392.9" cy="966.8" r="7.400"/><circle cx="1589.4" cy="943.5" r="7.400"/><circle cx="1469.1" cy="931.5" r="7.400"/><circle cx="1467.1" cy="888.2" r="7.400"/><circle cx="1775.6" cy="1061.9" r="7.400"/><circle cx="1392.8" cy="923.7" r="7.400"/><circle cx="1384.9" cy="1001.4" r="7.400"/><circle cx="1469" cy="1095.1" r="7.400"/><circle cx="1835.2" cy="880.6" r="7.400"/><circle cx="1766.9" cy="961.6" r="7.400"/><circle cx="1355.2" cy="877.9" r="7.400"/><circle cx="1889.6" cy="1044.9" r="7.400"/><circle cx="1391.6" cy="996.8" r="7.400"/><circle cx="1518.8" cy="828.1" r="7.400"/><circle cx="1511.4" cy="1000.3" r="7.400"/><circle cx="1439.5" cy="973.3" r="7.400"/><circle cx="1536.3" cy="1026.9" r="7.400"/><circle cx="1624.1" cy="988" r="7.400"/><circle cx="1293.7" cy="883.9" r="7.400"/><circle cx="1784.8" cy="1082.1" r="7.400"/><circle cx="1533.4" cy="1089.4" r="7.400"/><circle cx="1498.4" cy="897.2" r="7.400"/><circle cx="1635.9" cy="914.2" r="7.400"/><circle cx="1562.3" cy="950.6" r="7.400"/><circle cx="1780.1" cy="989.7" r="7.400"/><circle cx="1585.6" cy="1011.9" r="7.400"/><circle cx="1318.8" cy="998.2" r="7.400"/><circle cx="1849.6" cy="963.6" r="7.400"/><circle cx="1760.7" cy="1109.5" r="7.400"/><circle cx="1453.6" cy="1184.9" r="7.400"/><circle cx="1597.7" cy="1056.5" r="7.400"/><circle cx="1332.6" cy="1055.9" r="7.400"/><circle cx="1757.6" cy="925.5" r="7.400"/>
</g>
<g fill="#f22418" stroke="#ffe2dc" stroke-width="1.100">
<circle cx="1695.5" cy="584.1" r="8.900"/><circle cx="1731.4" cy="655" r="8.900"/><circle cx="1511.9" cy="746.5" r="8.900"/><circle cx="1473.1" cy="789.5" r="8.900"/><circle cx="1307.8" cy="754.8" r="8.900"/><circle cx="1556" cy="748.1" r="8.900"/><circle cx="1758.4" cy="841.6" r="8.900"/><circle cx="1466.1" cy="420.3" r="8.900"/><circle cx="1595" cy="762.6" r="8.900"/><circle cx="1735.2" cy="651.2" r="8.900"/><circle cx="1648.5" cy="618.2" r="8.900"/><circle cx="1603.9" cy="658.6" r="8.900"/><circle cx="1541.9" cy="582.9" r="8.900"/><circle cx="1627.3" cy="421" r="8.900"/><circle cx="1662.8" cy="481.2" r="8.900"/><circle cx="1421.7" cy="552.6" r="8.900"/><circle cx="1590" cy="783.6" r="8.900"/><circle cx="1686.3" cy="784.5" r="8.900"/><circle cx="1539.1" cy="818.9" r="8.900"/><circle cx="1361" cy="759.5" r="8.900"/><circle cx="1784.1" cy="629" r="8.900"/><circle cx="1368.7" cy="654.8" r="8.900"/><circle cx="1482.1" cy="575.5" r="8.900"/><circle cx="1302.1" cy="541.5" r="8.900"/><circle cx="1608.7" cy="769.8" r="8.900"/><circle cx="1783.2" cy="481.1" r="8.900"/><circle cx="1633.1" cy="804.5" r="8.900"/><circle cx="1787.9" cy="710.1" r="8.900"/><circle cx="1739" cy="641.5" r="8.900"/><circle cx="1430.7" cy="610.2" r="8.900"/><circle cx="1529.5" cy="547.4" r="8.900"/><circle cx="1397.7" cy="721.5" r="8.900"/><circle cx="1365.3" cy="801.7" r="8.900"/><circle cx="1716.6" cy="784.7" r="8.900"/><circle cx="1441.4" cy="731.8" r="8.900"/><circle cx="1729.5" cy="672.4" r="8.900"/><circle cx="1450.6" cy="723.2" r="8.900"/><circle cx="1344" cy="564.6" r="8.900"/><circle cx="1420.4" cy="529.2" r="8.900"/><circle cx="1325.8" cy="718.3" r="8.900"/><circle cx="1366" cy="594.8" r="8.900"/><circle cx="1728.3" cy="749.3" r="8.900"/><circle cx="1633.6" cy="770.4" r="8.900"/><circle cx="1368.6" cy="751.5" r="8.900"/><circle cx="1734.9" cy="480.1" r="8.900"/><circle cx="1526.7" cy="782" r="8.900"/><circle cx="1283.5" cy="760.6" r="8.900"/><circle cx="1767.1" cy="606.7" r="8.900"/><circle cx="1542.7" cy="546.8" r="8.900"/><circle cx="1493.4" cy="689.9" r="8.900"/><circle cx="1688.2" cy="777.3" r="8.900"/><circle cx="1636.1" cy="700" r="8.900"/><circle cx="1841.3" cy="661.7" r="8.900"/><circle cx="1257.9" cy="639.6" r="8.900"/><circle cx="1785.2" cy="561.5" r="8.900"/><circle cx="1545.4" cy="698.9" r="8.900"/><circle cx="1333.9" cy="686" r="8.900"/><circle cx="1730" cy="734.5" r="8.900"/><circle cx="1671.2" cy="801.1" r="8.900"/><circle cx="1861.7" cy="562.4" r="8.900"/><circle cx="1741.3" cy="583.7" r="8.900"/><circle cx="1616.2" cy="536.2" r="8.900"/><circle cx="1249.2" cy="760.4" r="8.900"/><circle cx="1741.2" cy="792.9" r="8.900"/><circle cx="1737" cy="704.3" r="8.900"/><circle cx="1751.9" cy="819.1" r="8.900"/><circle cx="1637.4" cy="821.5" r="8.900"/><circle cx="1306.1" cy="683.1" r="8.900"/><circle cx="1768.7" cy="761.4" r="8.900"/><circle cx="1833.9" cy="758.8" r="8.900"/><circle cx="1447.6" cy="593.6" r="8.900"/><circle cx="1595.8" cy="576.5" r="8.900"/><circle cx="1463.2" cy="535.3" r="8.900"/><circle cx="1448.2" cy="619.4" r="8.900"/><circle cx="1343.9" cy="556.4" r="8.900"/><circle cx="1482.4" cy="614.7" r="8.900"/><circle cx="1471.4" cy="646.3" r="8.900"/><circle cx="1692.5" cy="634" r="8.900"/><circle cx="1827" cy="576.8" r="8.900"/><circle cx="1445.6" cy="764.4" r="8.900"/><circle cx="1788.8" cy="467" r="8.900"/><circle cx="1391.6" cy="789.8" r="8.900"/><circle cx="1359.9" cy="807.9" r="8.900"/><circle cx="1686.4" cy="822.7" r="8.900"/><circle cx="1559.8" cy="780.5" r="8.900"/><circle cx="1602.1" cy="583" r="8.900"/><circle cx="1767" cy="788.9" r="8.900"/><circle cx="1486.7" cy="777.4" r="8.900"/><circle cx="1452.5" cy="738.9" r="8.900"/><circle cx="1238.7" cy="638.4" r="8.900"/><circle cx="1428.9" cy="469.6" r="8.900"/><circle cx="1536" cy="645.3" r="8.900"/><circle cx="1410.9" cy="603.1" r="8.900"/><circle cx="1809" cy="598.3" r="8.900"/><circle cx="1648.3" cy="666.3" r="8.900"/><circle cx="1375.7" cy="695.1" r="8.900"/><circle cx="1702.3" cy="825.2" r="8.900"/><circle cx="1323.4" cy="658.1" r="8.900"/><circle cx="1495.6" cy="656" r="8.900"/><circle cx="1365.6" cy="723.6" r="8.900"/><circle cx="1719.3" cy="717.6" r="8.900"/><circle cx="1349.4" cy="797.8" r="8.900"/><circle cx="1373.9" cy="571.7" r="8.900"/><circle cx="1412.1" cy="519.4" r="8.900"/><circle cx="1535.3" cy="478.3" r="8.900"/><circle cx="1610.4" cy="737.8" r="8.900"/><circle cx="1476" cy="607.2" r="8.900"/><circle cx="1494.1" cy="609.8" r="8.900"/><circle cx="1720.8" cy="825.4" r="8.900"/><circle cx="1412.7" cy="621.6" r="8.900"/><circle cx="1774" cy="670.2" r="8.900"/><circle cx="1298.7" cy="782.3" r="8.900"/><circle cx="1739.1" cy="551.6" r="8.900"/><circle cx="1570.9" cy="546.9" r="8.900"/><circle cx="1461.8" cy="565.9" r="8.900"/><circle cx="1565.5" cy="635.3" r="8.900"/><circle cx="1694.9" cy="661.6" r="8.900"/><circle cx="1664.1" cy="619.3" r="8.900"/><circle cx="1480.3" cy="673.4" r="8.900"/><circle cx="1341.5" cy="500.4" r="8.900"/><circle cx="1426.7" cy="697.2" r="8.900"/><circle cx="1652.5" cy="616.7" r="8.900"/><circle cx="1358.9" cy="646.4" r="8.900"/><circle cx="1512.9" cy="530.9" r="8.900"/><circle cx="1383.6" cy="435.6" r="8.900"/><circle cx="1722.7" cy="757.6" r="8.900"/><circle cx="1447.7" cy="807.8" r="8.900"/><circle cx="1397.5" cy="806.6" r="8.900"/><circle cx="1658.3" cy="547.1" r="8.900"/><circle cx="1400.3" cy="788.3" r="8.900"/><circle cx="1459.6" cy="600.3" r="8.900"/><circle cx="1363.5" cy="613.1" r="8.900"/><circle cx="1340.8" cy="518.9" r="8.900"/><circle cx="1524.1" cy="650.8" r="8.900"/><circle cx="1405.3" cy="639.1" r="8.900"/><circle cx="1781.3" cy="516.5" r="8.900"/><circle cx="1715.2" cy="711.4" r="8.900"/><circle cx="1390.8" cy="730.3" r="8.900"/><circle cx="1347.4" cy="514.9" r="8.900"/><circle cx="1664.7" cy="522.1" r="8.900"/><circle cx="1756.2" cy="834.6" r="8.900"/><circle cx="1500.3" cy="687.7" r="8.900"/><circle cx="1335.3" cy="665.5" r="8.900"/><circle cx="1370.5" cy="771.4" r="8.900"/><circle cx="1869.8" cy="681.9" r="8.900"/><circle cx="1689.6" cy="745.1" r="8.900"/><circle cx="1747.6" cy="755" r="8.900"/><circle cx="1559.4" cy="814.1" r="8.900"/><circle cx="1667.3" cy="667.5" r="8.900"/><circle cx="1385.5" cy="548.4" r="8.900"/><circle cx="1327.4" cy="685.7" r="8.900"/><circle cx="1783.3" cy="716.5" r="8.900"/><circle cx="1639.1" cy="817.5" r="8.900"/><circle cx="1441.6" cy="646.8" r="8.900"/><circle cx="1615.4" cy="738.1" r="8.900"/><circle cx="1301.9" cy="703.7" r="8.900"/><circle cx="1684.4" cy="720.6" r="8.900"/><circle cx="1322.8" cy="812" r="8.900"/><circle cx="1772.2" cy="803.9" r="8.900"/><circle cx="1411.4" cy="554.1" r="8.900"/><circle cx="1446.9" cy="675.8" r="8.900"/><circle cx="1679.7" cy="755.4" r="8.900"/><circle cx="1344.4" cy="432.5" r="8.900"/><circle cx="1302" cy="580.7" r="8.900"/><circle cx="1486.1" cy="777.6" r="8.900"/><circle cx="1388.6" cy="642.3" r="8.900"/><circle cx="1618.4" cy="654.9" r="8.900"/><circle cx="1726.6" cy="821.6" r="8.900"/><circle cx="1801.8" cy="486.9" r="8.900"/><circle cx="1568" cy="814.2" r="8.900"/><circle cx="1871.2" cy="842.1" r="8.900"/><circle cx="1762.7" cy="674.4" r="8.900"/><circle cx="1571.2" cy="669.3" r="8.900"/><circle cx="1407.3" cy="672.2" r="8.900"/><circle cx="1531.9" cy="715.7" r="8.900"/><circle cx="1357.7" cy="712.3" r="8.900"/><circle cx="1491.4" cy="823.3" r="8.900"/><circle cx="1444.1" cy="606.9" r="8.900"/><circle cx="1552.6" cy="546" r="8.900"/><circle cx="1286" cy="581.3" r="8.900"/><circle cx="1359.9" cy="519.1" r="8.900"/><circle cx="1730.1" cy="720.2" r="8.900"/><circle cx="1681.1" cy="709.1" r="8.900"/><circle cx="1767.1" cy="548.6" r="8.900"/><circle cx="1491.2" cy="761.1" r="8.900"/><circle cx="1450.4" cy="624.9" r="8.900"/><circle cx="1664.3" cy="716.3" r="8.900"/><circle cx="1322.7" cy="677.2" r="8.900"/><circle cx="1657.8" cy="530.1" r="8.900"/><circle cx="1661.6" cy="580" r="8.900"/><circle cx="1604.8" cy="825.2" r="8.900"/><circle cx="1642.4" cy="657.4" r="8.900"/><circle cx="1382.5" cy="807.5" r="8.900"/><circle cx="1684.8" cy="755.3" r="8.900"/><circle cx="1588.6" cy="462.1" r="8.900"/><circle cx="1612.4" cy="749.8" r="8.900"/><circle cx="1688" cy="542.7" r="8.900"/><circle cx="1377.1" cy="687.7" r="8.900"/><circle cx="1327.3" cy="555.5" r="8.900"/><circle cx="1495.7" cy="624.3" r="8.900"/><circle cx="1578.3" cy="544.9" r="8.900"/><circle cx="1491.6" cy="551" r="8.900"/><circle cx="1784.7" cy="463.6" r="8.900"/><circle cx="1710.3" cy="804.2" r="8.900"/><circle cx="1582.3" cy="458.6" r="8.900"/><circle cx="1363.4" cy="607.5" r="8.900"/><circle cx="1271.8" cy="680.3" r="8.900"/><circle cx="1524.5" cy="798.9" r="8.900"/><circle cx="1612.7" cy="604.4" r="8.900"/><circle cx="1666.5" cy="537" r="8.900"/><circle cx="1510.2" cy="486.2" r="8.900"/><circle cx="1415.8" cy="486.9" r="8.900"/><circle cx="1532.2" cy="785.8" r="8.900"/><circle cx="1762.2" cy="769" r="8.900"/><circle cx="1800.2" cy="718.9" r="8.900"/><circle cx="1845.7" cy="559" r="8.900"/><circle cx="1780.5" cy="755.9" r="8.900"/><circle cx="1335.6" cy="637.7" r="8.900"/><circle cx="1569.3" cy="662.4" r="8.900"/><circle cx="1654" cy="625.7" r="8.900"/><circle cx="1530.7" cy="746.2" r="8.900"/><circle cx="1770.5" cy="830.8" r="8.900"/><circle cx="1654.2" cy="585.3" r="8.900"/><circle cx="1406.1" cy="620" r="8.900"/><circle cx="1736" cy="592.9" r="8.900"/><circle cx="1333.9" cy="569.3" r="8.900"/><circle cx="1353.4" cy="525.4" r="8.900"/><circle cx="1760.7" cy="482.8" r="8.900"/><circle cx="1406.5" cy="731.2" r="8.900"/><circle cx="1781.3" cy="568.4" r="8.900"/><circle cx="1309.7" cy="610.6" r="8.900"/><circle cx="1801.4" cy="678.1" r="8.900"/><circle cx="1708.8" cy="492.1" r="8.900"/><circle cx="1329.2" cy="669" r="8.900"/><circle cx="1493.2" cy="736.8" r="8.900"/><circle cx="1587.3" cy="497.3" r="8.900"/><circle cx="1703.5" cy="635.9" r="8.900"/><circle cx="1598.2" cy="693.9" r="8.900"/><circle cx="1489.2" cy="648.8" r="8.900"/><circle cx="1641.6" cy="651" r="8.900"/><circle cx="1587.5" cy="481" r="8.900"/><circle cx="1659.5" cy="546.1" r="8.900"/><circle cx="1592.4" cy="829.4" r="8.900"/><circle cx="1438.8" cy="792.2" r="8.900"/><circle cx="1747.2" cy="719.3" r="8.900"/><circle cx="1598.5" cy="824.4" r="8.900"/><circle cx="1485.5" cy="662.3" r="8.900"/><circle cx="1580.7" cy="597.1" r="8.900"/><circle cx="1555.7" cy="665.8" r="8.900"/><circle cx="1346.8" cy="574.1" r="8.900"/><circle cx="1751.6" cy="465.9" r="8.900"/><circle cx="1618.2" cy="591.6" r="8.900"/><circle cx="1559.2" cy="798.7" r="8.900"/><circle cx="1651" cy="549.7" r="8.900"/><circle cx="1437.6" cy="748.3" r="8.900"/><circle cx="1324.6" cy="701.5" r="8.900"/><circle cx="1348.1" cy="534" r="8.900"/><circle cx="1768.8" cy="556.1" r="8.900"/><circle cx="1511.7" cy="611.2" r="8.900"/><circle cx="1364.9" cy="678.4" r="8.900"/><circle cx="1497.3" cy="655.2" r="8.900"/><circle cx="1337.8" cy="632.2" r="8.900"/><circle cx="1568" cy="600.1" r="8.900"/><circle cx="1570.2" cy="620.8" r="8.900"/><circle cx="1677.6" cy="703.9" r="8.900"/><circle cx="1619.4" cy="629.6" r="8.900"/><circle cx="1719" cy="746.6" r="8.900"/><circle cx="1777.2" cy="554" r="8.900"/><circle cx="1771.7" cy="649.9" r="8.900"/><circle cx="1505.9" cy="776.8" r="8.900"/><circle cx="1598.5" cy="727.2" r="8.900"/><circle cx="1575.7" cy="742.3" r="8.900"/><circle cx="1653.4" cy="689.9" r="8.900"/><circle cx="1493.9" cy="769.3" r="8.900"/><circle cx="1415.5" cy="571.6" r="8.900"/><circle cx="1725.9" cy="617.7" r="8.900"/><circle cx="1320.9" cy="786.2" r="8.900"/><circle cx="1680" cy="821.4" r="8.900"/><circle cx="1595" cy="745.5" r="8.900"/><circle cx="1699.9" cy="499.9" r="8.900"/><circle cx="1740.1" cy="501.1" r="8.900"/><circle cx="1464.4" cy="566.5" r="8.900"/><circle cx="1670.7" cy="627.7" r="8.900"/><circle cx="1497.8" cy="624.6" r="8.900"/><circle cx="1369.9" cy="525.6" r="8.900"/><circle cx="1682.7" cy="621" r="8.900"/><circle cx="1647.2" cy="583.1" r="8.900"/><circle cx="1415.2" cy="578.8" r="8.900"/><circle cx="1429.2" cy="577.1" r="8.900"/><circle cx="1356" cy="760.4" r="8.900"/><circle cx="1547.7" cy="571.9" r="8.900"/><circle cx="1686.9" cy="685.6" r="8.900"/><circle cx="1348.2" cy="502.2" r="8.900"/><circle cx="1488" cy="589.8" r="8.900"/><circle cx="1473.3" cy="772.9" r="8.900"/><circle cx="1622.8" cy="570.5" r="8.900"/><circle cx="1785.7" cy="790.9" r="8.900"/><circle cx="1417.7" cy="770.3" r="8.900"/><circle cx="1607.2" cy="605" r="8.900"/><circle cx="1539.7" cy="631.8" r="8.900"/><circle cx="1529" cy="675.1" r="8.900"/><circle cx="1755.9" cy="595" r="8.900"/><circle cx="1420.1" cy="625" r="8.900"/><circle cx="1503.5" cy="456.7" r="8.900"/><circle cx="1360.7" cy="463.2" r="8.900"/><circle cx="1689.1" cy="667.9" r="8.900"/><circle cx="1683.3" cy="670.7" r="8.900"/><circle cx="1332.5" cy="525.7" r="8.900"/><circle cx="1614.2" cy="689.4" r="8.900"/><circle cx="1766.6" cy="702.2" r="8.900"/><circle cx="1445.8" cy="652.3" r="8.900"/><circle cx="1331.3" cy="720.1" r="8.900"/><circle cx="1379.9" cy="519.3" r="8.900"/><circle cx="1765.3" cy="586.5" r="8.900"/><circle cx="1745.8" cy="665.2" r="8.900"/><circle cx="1325.7" cy="757.1" r="8.900"/><circle cx="1445" cy="645.2" r="8.900"/><circle cx="1765.3" cy="756.2" r="8.900"/><circle cx="1644.8" cy="483.7" r="8.900"/><circle cx="1757.1" cy="642.4" r="8.900"/><circle cx="1260.6" cy="559.9" r="8.900"/><circle cx="1472" cy="534.3" r="8.900"/><circle cx="1605" cy="459.6" r="8.900"/><circle cx="1317.6" cy="764.1" r="8.900"/><circle cx="1503.3" cy="438.4" r="8.900"/><circle cx="1651.6" cy="497.4" r="8.900"/><circle cx="1694.1" cy="696" r="8.900"/><circle cx="1446.8" cy="791.2" r="8.900"/><circle cx="1609.2" cy="657.6" r="8.900"/><circle cx="1460.6" cy="607.3" r="8.900"/><circle cx="1460.5" cy="766.7" r="8.900"/><circle cx="1582.6" cy="564.8" r="8.900"/><circle cx="1584.5" cy="623.1" r="8.900"/><circle cx="1551.3" cy="619.9" r="8.900"/><circle cx="1480.1" cy="566.8" r="8.900"/><circle cx="1335.7" cy="765.2" r="8.900"/><circle cx="1719.1" cy="599.9" r="8.900"/><circle cx="1526.7" cy="693.3" r="8.900"/><circle cx="1528.2" cy="660.5" r="8.900"/><circle cx="1377.5" cy="553.8" r="8.900"/><circle cx="1611.2" cy="577.1" r="8.900"/><circle cx="1794.9" cy="557" r="8.900"/><circle cx="1701.6" cy="800" r="8.900"/><circle cx="1539.4" cy="666.9" r="8.900"/><circle cx="1686" cy="736.1" r="8.900"/><circle cx="1372.7" cy="727.5" r="8.900"/><circle cx="1344.2" cy="599.2" r="8.900"/><circle cx="1411.1" cy="649.2" r="8.900"/><circle cx="1699.1" cy="534.2" r="8.900"/><circle cx="1523.7" cy="537.3" r="8.900"/><circle cx="1766.7" cy="773.7" r="8.900"/><circle cx="1386.3" cy="418.6" r="8.900"/><circle cx="1446.8" cy="692.4" r="8.900"/><circle cx="1760" cy="787.6" r="8.900"/><circle cx="1249" cy="517" r="8.900"/><circle cx="1646.7" cy="715.9" r="8.900"/><circle cx="1563.9" cy="615.8" r="8.900"/><circle cx="1689.9" cy="701.2" r="8.900"/><circle cx="1449.6" cy="527.8" r="8.900"/><circle cx="1761.1" cy="555.2" r="8.900"/><circle cx="1609.2" cy="655.3" r="8.900"/><circle cx="1607.8" cy="784.5" r="8.900"/><circle cx="1720.8" cy="808.9" r="8.900"/><circle cx="1532.8" cy="626.1" r="8.900"/><circle cx="1656.7" cy="675.3" r="8.900"/><circle cx="1747.5" cy="479.5" r="8.900"/><circle cx="1632.2" cy="706.6" r="8.900"/><circle cx="1405.9" cy="602.7" r="8.900"/><circle cx="1521.6" cy="491.6" r="8.900"/><circle cx="1301.7" cy="522.5" r="8.900"/><circle cx="1434.3" cy="798.6" r="8.900"/><circle cx="1645.9" cy="755.4" r="8.900"/><circle cx="1688.6" cy="585.4" r="8.900"/><circle cx="1719.7" cy="630.9" r="8.900"/><circle cx="1462.1" cy="618.8" r="8.900"/><circle cx="1563.3" cy="486" r="8.900"/><circle cx="1733.1" cy="636.2" r="8.900"/><circle cx="1570.9" cy="643.8" r="8.900"/><circle cx="1323.9" cy="623.7" r="8.900"/><circle cx="1282.4" cy="781.9" r="8.900"/><circle cx="1772.9" cy="490.5" r="8.900"/><circle cx="1448.5" cy="578.5" r="8.900"/><circle cx="1442.8" cy="697.5" r="8.900"/><circle cx="1545.4" cy="441" r="8.900"/><circle cx="1409.2" cy="535.7" r="8.900"/><circle cx="1721.6" cy="791.9" r="8.900"/><circle cx="1611.3" cy="638.5" r="8.900"/><circle cx="1721.2" cy="773.1" r="8.900"/><circle cx="1391.9" cy="814.9" r="8.900"/><circle cx="1770.8" cy="634.1" r="8.900"/><circle cx="1769.4" cy="786.9" r="8.900"/><circle cx="1386.5" cy="497.3" r="8.900"/><circle cx="1659.9" cy="496.4" r="8.900"/><circle cx="1755.9" cy="600.7" r="8.900"/><circle cx="1771.2" cy="595.3" r="8.900"/><circle cx="1677.3" cy="736.9" r="8.900"/><circle cx="1378.6" cy="615" r="8.900"/><circle cx="1693.3" cy="711.5" r="8.900"/><circle cx="1310.9" cy="809.3" r="8.900"/><circle cx="1697.9" cy="717.9" r="8.900"/><circle cx="1399.4" cy="775.3" r="8.900"/><circle cx="1247" cy="556.9" r="8.900"/><circle cx="1681.1" cy="789.4" r="8.900"/><circle cx="1760.7" cy="723.8" r="8.900"/><circle cx="1627.9" cy="497.9" r="8.900"/><circle cx="1376.7" cy="648.5" r="8.900"/><circle cx="1686.9" cy="812.5" r="8.900"/><circle cx="1417.5" cy="538.5" r="8.900"/><circle cx="1605.7" cy="723.4" r="8.900"/><circle cx="1339.9" cy="600.5" r="8.900"/><circle cx="1639.1" cy="833.4" r="8.900"/><circle cx="1425.2" cy="817.2" r="8.900"/><circle cx="1736.2" cy="680.3" r="8.900"/><circle cx="1271.8" cy="623.4" r="8.900"/><circle cx="1444.5" cy="726.4" r="8.900"/><circle cx="1784.9" cy="430.5" r="8.900"/><circle cx="1278" cy="560.7" r="8.900"/><circle cx="1440.5" cy="679.7" r="8.900"/><circle cx="1449.2" cy="561" r="8.900"/><circle cx="1739.6" cy="534" r="8.900"/><circle cx="1534.5" cy="592.6" r="8.900"/><circle cx="1358.5" cy="790.8" r="8.900"/><circle cx="1344.5" cy="417.6" r="8.900"/><circle cx="1503.1" cy="471.9" r="8.900"/><circle cx="1435.4" cy="659.8" r="8.900"/><circle cx="1726.7" cy="768.6" r="8.900"/><circle cx="1696.2" cy="551" r="8.900"/><circle cx="1637.7" cy="586.9" r="8.900"/><circle cx="1531" cy="642.7" r="8.900"/><circle cx="1455.7" cy="686.6" r="8.900"/><circle cx="1383.7" cy="566.9" r="8.900"/><circle cx="1790.7" cy="797.6" r="8.900"/><circle cx="1329.7" cy="542.2" r="8.900"/><circle cx="1717" cy="623.7" r="8.900"/><circle cx="1550.4" cy="694.9" r="8.900"/><circle cx="1701.1" cy="614.2" r="8.900"/><circle cx="1448.6" cy="756.8" r="8.900"/><circle cx="1630" cy="753.8" r="8.900"/><circle cx="1332.6" cy="523.2" r="8.900"/><circle cx="1646.8" cy="714.4" r="8.900"/><circle cx="1267.7" cy="520.6" r="8.900"/><circle cx="1409.9" cy="691.4" r="8.900"/><circle cx="1260.2" cy="599.5" r="8.900"/><circle cx="1689.7" cy="630.7" r="8.900"/><circle cx="1553" cy="813.4" r="8.900"/><circle cx="1441.1" cy="776.1" r="8.900"/><circle cx="1662.4" cy="574.5" r="8.900"/><circle cx="1517.8" cy="542.7" r="8.900"/><circle cx="1850.8" cy="721.3" r="8.900"/><circle cx="1443.9" cy="661.6" r="8.900"/><circle cx="1315.2" cy="803.4" r="8.900"/><circle cx="1325.9" cy="595.6" r="8.900"/><circle cx="1587.4" cy="694.8" r="8.900"/><circle cx="1762.7" cy="640.5" r="8.900"/><circle cx="1537.9" cy="525.7" r="8.900"/><circle cx="1572.5" cy="729.3" r="8.900"/><circle cx="1577.2" cy="664.3" r="8.900"/><circle cx="1698.5" cy="643.3" r="8.900"/><circle cx="1639" cy="826.8" r="8.900"/><circle cx="1736.4" cy="570.2" r="8.900"/><circle cx="1387.1" cy="478.4" r="8.900"/><circle cx="1558" cy="741.3" r="8.900"/><circle cx="1246.5" cy="798.1" r="8.900"/><circle cx="1314.1" cy="770.2" r="8.900"/><circle cx="1579.9" cy="662.2" r="8.900"/><circle cx="1553.1" cy="802" r="8.900"/><circle cx="1540.2" cy="491.1" r="8.900"/><circle cx="1614.8" cy="705.1" r="8.900"/><circle cx="1749.9" cy="713.1" r="8.900"/><circle cx="1522.1" cy="810" r="8.900"/><circle cx="1388.7" cy="460.8" r="8.900"/><circle cx="1360.6" cy="480.5" r="8.900"/><circle cx="1603.4" cy="669.4" r="8.900"/><circle cx="1383.2" cy="452.6" r="8.900"/><circle cx="1332.8" cy="602.7" r="8.900"/><circle cx="1350.5" cy="767.8" r="8.900"/><circle cx="1643.3" cy="827.7" r="8.900"/><circle cx="1730" cy="563" r="8.900"/><circle cx="1647.8" cy="700.7" r="8.900"/><circle cx="1351.7" cy="449.5" r="8.900"/><circle cx="1735.1" cy="683.3" r="8.900"/><circle cx="1778.2" cy="724" r="8.900"/><circle cx="1744.6" cy="553.5" r="8.900"/><circle cx="1722.3" cy="639.3" r="8.900"/><circle cx="1371.5" cy="734.7" r="8.900"/><circle cx="1313.6" cy="792.4" r="8.900"/><circle cx="1481.7" cy="657.1" r="8.900"/><circle cx="1802.8" cy="468.2" r="8.900"/><circle cx="1680.8" cy="769.7" r="8.900"/><circle cx="1254.7" cy="718.3" r="8.900"/><circle cx="1636.3" cy="720.2" r="8.900"/><circle cx="1626.2" cy="534.8" r="8.900"/><circle cx="1318" cy="693.1" r="8.900"/><circle cx="1621.3" cy="552.5" r="8.900"/><circle cx="1585.7" cy="583.4" r="8.900"/><circle cx="1282.6" cy="702" r="8.900"/><circle cx="1571.3" cy="713.8" r="8.900"/><circle cx="1723.8" cy="740.8" r="8.900"/><circle cx="1733" cy="532" r="8.900"/><circle cx="1530" cy="699.7" r="8.900"/><circle cx="1489" cy="675.3" r="8.900"/><circle cx="1419" cy="658.9" r="8.900"/><circle cx="1574.4" cy="696.3" r="8.900"/><circle cx="1330.8" cy="676" r="8.900"/><circle cx="1535.2" cy="618.2" r="8.900"/><circle cx="1593.4" cy="792.2" r="8.900"/><circle cx="1652.6" cy="634" r="8.900"/><circle cx="1495.1" cy="483.9" r="8.900"/><circle cx="1445" cy="611" r="8.900"/><circle cx="1662.7" cy="555.4" r="8.900"/><circle cx="1694.3" cy="600.8" r="8.900"/><circle cx="1274.2" cy="639.3" r="8.900"/><circle cx="1402.6" cy="755" r="8.900"/><circle cx="1739.1" cy="634.3" r="8.900"/><circle cx="1655.9" cy="700.6" r="8.900"/><circle cx="1605.9" cy="689.7" r="8.900"/><circle cx="1753.7" cy="745.5" r="8.900"/><circle cx="1608.5" cy="753.8" r="8.900"/><circle cx="1420.9" cy="607.1" r="8.900"/><circle cx="1453.4" cy="590.2" r="8.900"/><circle cx="1764.9" cy="450.4" r="8.900"/><circle cx="1573.1" cy="629.1" r="8.900"/><circle cx="1494.7" cy="675" r="8.900"/><circle cx="1741.5" cy="600.5" r="8.900"/><circle cx="1345.1" cy="606.8" r="8.900"/><circle cx="1459.1" cy="540" r="8.900"/><circle cx="1744.2" cy="466" r="8.900"/><circle cx="1566.9" cy="713.1" r="8.900"/><circle cx="1569.5" cy="767.2" r="8.900"/><circle cx="1702.4" cy="578.5" r="8.900"/><circle cx="1428.7" cy="739.3" r="8.900"/><circle cx="1611.3" cy="618.9" r="8.900"/><circle cx="1319" cy="650" r="8.900"/><circle cx="1415.3" cy="675.3" r="8.900"/><circle cx="1784.6" cy="684.9" r="8.900"/><circle cx="1484.6" cy="743.9" r="8.900"/><circle cx="1314.3" cy="568.7" r="8.900"/><circle cx="1362.2" cy="740.1" r="8.900"/><circle cx="1733.7" cy="698.1" r="8.900"/><circle cx="1643.7" cy="809.9" r="8.900"/><circle cx="1532" cy="586.4" r="8.900"/><circle cx="1650.4" cy="650.1" r="8.900"/><circle cx="1767.8" cy="807.2" r="8.900"/><circle cx="1402.3" cy="804.4" r="8.900"/><circle cx="1459.6" cy="699.8" r="8.900"/><circle cx="1785.3" cy="677.7" r="8.900"/><circle cx="1400" cy="667.8" r="8.900"/><circle cx="1601.4" cy="494" r="8.900"/><circle cx="1486.4" cy="808.5" r="8.900"/><circle cx="1668.9" cy="820.5" r="8.900"/><circle cx="1732.4" cy="711.4" r="8.900"/><circle cx="1430.9" cy="686.1" r="8.900"/><circle cx="1580.6" cy="587.4" r="8.900"/><circle cx="1631.5" cy="467.8" r="8.900"/><circle cx="1516.2" cy="745.6" r="8.900"/><circle cx="1769.4" cy="560.3" r="8.900"/><circle cx="1403.8" cy="739.9" r="8.900"/><circle cx="1530.6" cy="562.4" r="8.900"/><circle cx="1436.2" cy="530.3" r="8.900"/><circle cx="1597.5" cy="749.8" r="8.900"/><circle cx="1621.3" cy="696.4" r="8.900"/><circle cx="1768" cy="572.7" r="8.900"/><circle cx="1450.3" cy="660.3" r="8.900"/><circle cx="1510.7" cy="471.3" r="8.900"/><circle cx="1539.2" cy="509" r="8.900"/><circle cx="1654" cy="821.7" r="8.900"/><circle cx="1770.8" cy="521.2" r="8.900"/><circle cx="1599.1" cy="806.9" r="8.900"/><circle cx="1452.9" cy="774" r="8.900"/><circle cx="1670.9" cy="452.5" r="8.900"/><circle cx="1329.2" cy="733.4" r="8.900"/><circle cx="1599.3" cy="792.8" r="8.900"/><circle cx="1404.7" cy="810.7" r="8.900"/><circle cx="1540.3" cy="780.4" r="8.900"/><circle cx="1341" cy="760.4" r="8.900"/><circle cx="1324" cy="683.2" r="8.900"/><circle cx="1464.7" cy="726.4" r="8.900"/><circle cx="1724.4" cy="649.2" r="8.900"/><circle cx="1883.6" cy="682.9" r="8.900"/><circle cx="1774.4" cy="796.8" r="8.900"/><circle cx="1725.6" cy="792.4" r="8.900"/><circle cx="1339.3" cy="726.3" r="8.900"/><circle cx="1417" cy="535.9" r="8.900"/><circle cx="1539.3" cy="613.1" r="8.900"/><circle cx="1470.4" cy="808.1" r="8.900"/><circle cx="1694.7" cy="678.2" r="8.900"/><circle cx="1565.6" cy="588" r="8.900"/><circle cx="1489.1" cy="641.4" r="8.900"/><circle cx="1550" cy="530.3" r="8.900"/><circle cx="1649.4" cy="667.1" r="8.900"/><circle cx="1449" cy="540.4" r="8.900"/><circle cx="1448.3" cy="779.8" r="8.900"/><circle cx="1435.5" cy="772.7" r="8.900"/><circle cx="1750.1" cy="682.8" r="8.900"/><circle cx="1643.6" cy="617.8" r="8.900"/><circle cx="1574.8" cy="654.9" r="8.900"/><circle cx="1383.1" cy="802" r="8.900"/><circle cx="1564.1" cy="701.9" r="8.900"/><circle cx="1428.2" cy="618.5" r="8.900"/><circle cx="1644" cy="750.8" r="8.900"/><circle cx="1457.1" cy="555.6" r="8.900"/><circle cx="1614" cy="501" r="8.900"/><circle cx="1424.6" cy="732.9" r="8.900"/><circle cx="1561" cy="613.9" r="8.900"/><circle cx="1815" cy="759.5" r="8.900"/><circle cx="1765.8" cy="717.7" r="8.900"/><circle cx="1340" cy="580.9" r="8.900"/><circle cx="1479.7" cy="779.1" r="8.900"/><circle cx="1668.9" cy="797.3" r="8.900"/><circle cx="1576.4" cy="560.8" r="8.900"/><circle cx="1411.7" cy="729" r="8.900"/><circle cx="1689.5" cy="568" r="8.900"/><circle cx="1695.4" cy="661" r="8.900"/><circle cx="1887.1" cy="843.7" r="8.900"/><circle cx="1384.6" cy="769.7" r="8.900"/><circle cx="1808.1" cy="797" r="8.900"/><circle cx="1689.2" cy="763.5" r="8.900"/><circle cx="1630.3" cy="664.6" r="8.900"/><circle cx="1583.3" cy="476.4" r="8.900"/><circle cx="1731" cy="718.6" r="8.900"/><circle cx="1410.6" cy="617.2" r="8.900"/><circle cx="1237.9" cy="677.6" r="8.900"/><circle cx="1635.4" cy="553" r="8.900"/><circle cx="1700.4" cy="742.6" r="8.900"/><circle cx="1491.3" cy="533.5" r="8.900"/><circle cx="1811.3" cy="558.7" r="8.900"/><circle cx="1718.8" cy="797.8" r="8.900"/><circle cx="1557.4" cy="781.9" r="8.900"/><circle cx="1856.3" cy="842.8" r="8.900"/><circle cx="1312.9" cy="676" r="8.900"/><circle cx="1592" cy="828" r="8.900"/><circle cx="1401.7" cy="688.6" r="8.900"/><circle cx="1562.8" cy="763.7" r="8.900"/><circle cx="1666.5" cy="429.8" r="8.900"/><circle cx="1709.8" cy="835.5" r="8.900"/><circle cx="1374.3" cy="703.4" r="8.900"/><circle cx="1397" cy="753.5" r="8.900"/><circle cx="1432" cy="539.2" r="8.900"/><circle cx="1826.4" cy="800.2" r="8.900"/><circle cx="1703.4" cy="466.9" r="8.900"/><circle cx="1383" cy="533.9" r="8.900"/><circle cx="1387.8" cy="513.5" r="8.900"/><circle cx="1593.1" cy="741.9" r="8.900"/><circle cx="1633.8" cy="592.2" r="8.900"/><circle cx="1764.3" cy="838.8" r="8.900"/><circle cx="1597.8" cy="590.5" r="8.900"/><circle cx="1525" cy="645.9" r="8.900"/><circle cx="1842.8" cy="799.4" r="8.900"/><circle cx="1217.7" cy="717.2" r="8.900"/><circle cx="1398.2" cy="704.3" r="8.900"/><circle cx="1724.5" cy="834.4" r="8.900"/><circle cx="1267.4" cy="579.1" r="8.900"/><circle cx="1772.3" cy="708.5" r="8.900"/><circle cx="1592.6" cy="775.8" r="8.900"/><circle cx="1732.6" cy="619.9" r="8.900"/><circle cx="1717" cy="672.1" r="8.900"/><circle cx="1704.7" cy="630.1" r="8.900"/><circle cx="1446.4" cy="725.7" r="8.900"/><circle cx="1422.4" cy="643.6" r="8.900"/><circle cx="1523.6" cy="727.9" r="8.900"/><circle cx="1401.5" cy="773.6" r="8.900"/><circle cx="1652.7" cy="594.8" r="8.900"/><circle cx="1475.9" cy="766.5" r="8.900"/><circle cx="1346.5" cy="805.7" r="8.900"/><circle cx="1316.3" cy="760.5" r="8.900"/><circle cx="1752.6" cy="802.9" r="8.900"/><circle cx="1266.2" cy="779" r="8.900"/><circle cx="1651.9" cy="553.4" r="8.900"/><circle cx="1419.9" cy="502.5" r="8.900"/><circle cx="1366.2" cy="579.2" r="8.900"/><circle cx="1703.6" cy="527.5" r="8.900"/><circle cx="1730" cy="752.2" r="8.900"/><circle cx="1373" cy="528.2" r="8.900"/><circle cx="1685.2" cy="741.7" r="8.900"/><circle cx="1518.8" cy="794.9" r="8.900"/><circle cx="1580.3" cy="701.6" r="8.900"/><circle cx="1520.6" cy="473.9" r="8.900"/><circle cx="1530.2" cy="772.6" r="8.900"/><circle cx="1333.6" cy="510.3" r="8.900"/><circle cx="1483.5" cy="638.9" r="8.900"/><circle cx="1327.3" cy="564.7" r="8.900"/><circle cx="1423.4" cy="453.1" r="8.900"/><circle cx="1408.2" cy="655.6" r="8.900"/><circle cx="1874.5" cy="801.9" r="8.900"/><circle cx="1618.1" cy="817.5" r="8.900"/><circle cx="1219.8" cy="676.9" r="8.900"/><circle cx="1232.7" cy="517.9" r="8.900"/><circle cx="1342.7" cy="466.1" r="8.900"/><circle cx="1359.1" cy="599.7" r="8.900"/><circle cx="1414" cy="502.8" r="8.900"/><circle cx="1645.6" cy="747.8" r="8.900"/><circle cx="1384.6" cy="720" r="8.900"/><circle cx="1810.6" cy="818.5" r="8.900"/><circle cx="1304.6" cy="723.3" r="8.900"/><circle cx="1477.9" cy="709.5" r="8.900"/><circle cx="1773.8" cy="601" r="8.900"/><circle cx="1566.9" cy="581.1" r="8.900"/><circle cx="1542.1" cy="826.4" r="8.900"/><circle cx="1678.8" cy="684.4" r="8.900"/><circle cx="1266.3" cy="698.6" r="8.900"/><circle cx="1780.2" cy="586.2" r="8.900"/><circle cx="1656.8" cy="625.9" r="8.900"/><circle cx="1441.6" cy="759.4" r="8.900"/><circle cx="1846.6" cy="703" r="8.900"/><circle cx="1867.7" cy="721.6" r="8.900"/><circle cx="1401" cy="652.8" r="8.900"/><circle cx="1839.7" cy="841.9" r="8.900"/><circle cx="1585.6" cy="532.3" r="8.900"/><circle cx="1672.4" cy="634.2" r="8.900"/><circle cx="1470" cy="775.3" r="8.900"/><circle cx="1641.8" cy="786" r="8.900"/><circle cx="1773.2" cy="837" r="8.900"/><circle cx="1340.9" cy="485.2" r="8.900"/><circle cx="1802.4" cy="451.7" r="8.900"/><circle cx="1370.5" cy="639.7" r="8.900"/><circle cx="1362.1" cy="573.7" r="8.900"/><circle cx="1571.6" cy="611.2" r="8.900"/><circle cx="1773.8" cy="616.3" r="8.900"/><circle cx="1660.9" cy="591.7" r="8.900"/><circle cx="1275.7" cy="600.5" r="8.900"/><circle cx="1646.1" cy="601.2" r="8.900"/><circle cx="1744" cy="449" r="8.900"/><circle cx="1789.9" cy="603.3" r="8.900"/><circle cx="1668" cy="503.5" r="8.900"/><circle cx="1337.3" cy="532.9" r="8.900"/><circle cx="1417.6" cy="521.1" r="8.900"/><circle cx="1796.8" cy="757.9" r="8.900"/><circle cx="1399.7" cy="533.9" r="8.900"/><circle cx="1572.4" cy="494.9" r="8.900"/><circle cx="1585.3" cy="815.9" r="8.900"/><circle cx="1574.4" cy="576.4" r="8.900"/><circle cx="1531.5" cy="529.6" r="8.900"/><circle cx="1523" cy="744.8" r="8.900"/><circle cx="1601.8" cy="817.3" r="8.900"/><circle cx="1607.2" cy="788.9" r="8.900"/><circle cx="1496.1" cy="576.5" r="8.900"/><circle cx="1342.6" cy="449.1" r="8.900"/><circle cx="1669.4" cy="542.5" r="8.900"/><circle cx="1765.7" cy="734.8" r="8.900"/><circle cx="1612.5" cy="622.9" r="8.900"/><circle cx="1662.6" cy="660.3" r="8.900"/><circle cx="1331.4" cy="804.3" r="8.900"/><circle cx="1650.6" cy="568" r="8.900"/><circle cx="1831.9" cy="702.2" r="8.900"/><circle cx="1525.3" cy="704.6" r="8.900"/><circle cx="1307.8" cy="644.1" r="8.900"/><circle cx="1322.8" cy="771" r="8.900"/><circle cx="1349.5" cy="813.9" r="8.900"/><circle cx="1604.6" cy="475.9" r="8.900"/><circle cx="1611.2" cy="719.7" r="8.900"/><circle cx="1667.6" cy="742.7" r="8.900"/><circle cx="1631.5" cy="616.5" r="8.900"/><circle cx="1482.5" cy="458.4" r="8.900"/><circle cx="1462.5" cy="740.4" r="8.900"/><circle cx="1464.2" cy="439.3" r="8.900"/><circle cx="1377.7" cy="761.6" r="8.900"/><circle cx="1382.5" cy="656.5" r="8.900"/><circle cx="1670.5" cy="471.5" r="8.900"/><circle cx="1371.4" cy="621.2" r="8.900"/><circle cx="1297.1" cy="742.8" r="8.900"/><circle cx="1445.8" cy="563.6" r="8.900"/><circle cx="1393.4" cy="648.5" r="8.900"/><circle cx="1406.5" cy="687.9" r="8.900"/><circle cx="1783.4" cy="589.8" r="8.900"/><circle cx="1493.6" cy="697.4" r="8.900"/><circle cx="1224.6" cy="638.2" r="8.900"/><circle cx="1585.9" cy="441.6" r="8.900"/><circle cx="1808.3" cy="659.9" r="8.900"/><circle cx="1499.3" cy="785.3" r="8.900"/><circle cx="1327.2" cy="730.4" r="8.900"/><circle cx="1474.8" cy="734.1" r="8.900"/><circle cx="1675.1" cy="663.1" r="8.900"/><circle cx="1717" cy="557" r="8.900"/><circle cx="1729.2" cy="689.8" r="8.900"/><circle cx="1457.2" cy="667.9" r="8.900"/><circle cx="1612.1" cy="535.2" r="8.900"/><circle cx="1612.8" cy="519" r="8.900"/><circle cx="1604.5" cy="695.4" r="8.900"/><circle cx="1727.5" cy="553" r="8.900"/><circle cx="1446.5" cy="523.9" r="8.900"/><circle cx="1547.7" cy="626.5" r="8.900"/><circle cx="1671.7" cy="828.1" r="8.900"/><circle cx="1832.4" cy="720.8" r="8.900"/><circle cx="1721.1" cy="831.3" r="8.900"/><circle cx="1383.7" cy="468.3" r="8.900"/><circle cx="1460.8" cy="585.4" r="8.900"/><circle cx="1449.3" cy="640.6" r="8.900"/><circle cx="1515.2" cy="762.1" r="8.900"/><circle cx="1405.4" cy="643.1" r="8.900"/><circle cx="1884.9" cy="762.2" r="8.900"/><circle cx="1378.3" cy="608.5" r="8.900"/><circle cx="1697.4" cy="621.6" r="8.900"/><circle cx="1448" cy="577.5" r="8.900"/><circle cx="1761.3" cy="465.9" r="8.900"/><circle cx="1518.6" cy="693" r="8.900"/><circle cx="1798.9" cy="764.9" r="8.900"/><circle cx="1562.8" cy="651.4" r="8.900"/><circle cx="1711.6" cy="663.4" r="8.900"/><circle cx="1683.7" cy="620.7" r="8.900"/><circle cx="1787.7" cy="519.2" r="8.900"/><circle cx="1353.2" cy="798" r="8.900"/><circle cx="1572.6" cy="780.9" r="8.900"/><circle cx="1323.3" cy="641.3" r="8.900"/><circle cx="1215.7" cy="756.9" r="8.900"/><circle cx="1700.4" cy="557.6" r="8.900"/><circle cx="1577.7" cy="650.2" r="8.900"/><circle cx="1497.9" cy="641.7" r="8.900"/><circle cx="1430.3" cy="451.5" r="8.900"/><circle cx="1468.3" cy="504" r="8.900"/><circle cx="1704.6" cy="702.9" r="8.900"/><circle cx="1534.5" cy="574.9" r="8.900"/><circle cx="1313.7" cy="716.2" r="8.900"/><circle cx="1511.7" cy="583.3" r="8.900"/><circle cx="1411.9" cy="746" r="8.900"/><circle cx="1581.4" cy="735.5" r="8.900"/><circle cx="1385" cy="526.7" r="8.900"/><circle cx="1416.4" cy="640.1" r="8.900"/><circle cx="1686.7" cy="674.9" r="8.900"/><circle cx="1480.5" cy="621.3" r="8.900"/><circle cx="1516.4" cy="729.1" r="8.900"/><circle cx="1636.1" cy="794.3" r="8.900"/><circle cx="1519.4" cy="812.2" r="8.900"/><circle cx="1517.5" cy="689.5" r="8.900"/><circle cx="1562.7" cy="746.7" r="8.900"/><circle cx="1493.8" cy="704" r="8.900"/><circle cx="1858.8" cy="801.6" r="8.900"/><circle cx="1331.8" cy="529.7" r="8.900"/><circle cx="1722" cy="703.2" r="8.900"/><circle cx="1787.6" cy="635.7" r="8.900"/><circle cx="1492.1" cy="608.8" r="8.900"/><circle cx="1406.5" cy="588.1" r="8.900"/><circle cx="1492.5" cy="724.9" r="8.900"/><circle cx="1346.4" cy="531.9" r="8.900"/><circle cx="1463.4" cy="654.7" r="8.900"/><circle cx="1525.3" cy="710.7" r="8.900"/><circle cx="1696.6" cy="749.7" r="8.900"/><circle cx="1354.7" cy="725.9" r="8.900"/><circle cx="1649.5" cy="779.1" r="8.900"/><circle cx="1543.9" cy="652.2" r="8.900"/><circle cx="1664.3" cy="447.1" r="8.900"/><circle cx="1406.9" cy="777.7" r="8.900"/><circle cx="1468" cy="688.3" r="8.900"/><circle cx="1705.5" cy="449.9" r="8.900"/><circle cx="1332.6" cy="617.6" r="8.900"/><circle cx="1522.7" cy="761.4" r="8.900"/><circle cx="1430" cy="562.8" r="8.900"/><circle cx="1681.8" cy="490.8" r="8.900"/><circle cx="1409.7" cy="639.1" r="8.900"/><circle cx="1486.5" cy="622.8" r="8.900"/><circle cx="1234.2" cy="757.2" r="8.900"/><circle cx="1397.1" cy="609.3" r="8.900"/><circle cx="1768.9" cy="737.2" r="8.900"/><circle cx="1534.7" cy="814.3" r="8.900"/><circle cx="1754" cy="827.4" r="8.900"/><circle cx="1492.1" cy="709.7" r="8.900"/><circle cx="1534.9" cy="681.5" r="8.900"/><circle cx="1445.3" cy="707.1" r="8.900"/><circle cx="1761" cy="804.6" r="8.900"/><circle cx="1789.5" cy="836.2" r="8.900"/><circle cx="1242.1" cy="598" r="8.900"/><circle cx="1697.2" cy="710.5" r="8.900"/><circle cx="1691.5" cy="619.2" r="8.900"/><circle cx="1462.8" cy="781.9" r="8.900"/><circle cx="1543.8" cy="458.4" r="8.900"/><circle cx="1752.4" cy="771.4" r="8.900"/><circle cx="1307.3" cy="625.7" r="8.900"/><circle cx="1679.8" cy="750.1" r="8.900"/><circle cx="1615.6" cy="588.4" r="8.900"/><circle cx="1452.6" cy="807.6" r="8.900"/><circle cx="1581.9" cy="583.9" r="8.900"/><circle cx="1628" cy="481.8" r="8.900"/><circle cx="1739.3" cy="633.5" r="8.900"/><circle cx="1753.2" cy="789.8" r="8.900"/><circle cx="1570.3" cy="548.2" r="8.900"/><circle cx="1422.1" cy="570" r="8.900"/><circle cx="1342.8" cy="734.1" r="8.900"/><circle cx="1734.1" cy="671.4" r="8.900"/><circle cx="1889.8" cy="604.4" r="8.900"/><circle cx="1519.5" cy="665.9" r="8.900"/><circle cx="1467.8" cy="519.2" r="8.900"/><circle cx="1692.5" cy="518.7" r="8.900"/><circle cx="1310.7" cy="730.4" r="8.900"/><circle cx="1325.3" cy="803.6" r="8.900"/><circle cx="1734.9" cy="784.5" r="8.900"/><circle cx="1564.8" cy="749.2" r="8.900"/><circle cx="1623.5" cy="554.3" r="8.900"/><circle cx="1524.2" cy="628.1" r="8.900"/><circle cx="1701.3" cy="785.8" r="8.900"/><circle cx="1502.1" cy="488.6" r="8.900"/><circle cx="1583.8" cy="791.2" r="8.900"/><circle cx="1854.2" cy="682.2" r="8.900"/><circle cx="1566" cy="695.2" r="8.900"/><circle cx="1465.3" cy="612.5" r="8.900"/><circle cx="1452" cy="607.5" r="8.900"/><circle cx="1266.5" cy="761" r="8.900"/><circle cx="1427.2" cy="525.1" r="8.900"/><circle cx="1369.3" cy="638.7" r="8.900"/><circle cx="1780.4" cy="670.8" r="8.900"/><circle cx="1702.8" cy="482.7" r="8.900"/><circle cx="1326.3" cy="786.4" r="8.900"/><circle cx="1516.7" cy="784.2" r="8.900"/><circle cx="1464" cy="573.1" r="8.900"/><circle cx="1758" cy="707.3" r="8.900"/><circle cx="1551.1" cy="578.2" r="8.900"/><circle cx="1639" cy="684" r="8.900"/><circle cx="1374.1" cy="669.2" r="8.900"/><circle cx="1480.2" cy="692.9" r="8.900"/><circle cx="1805.7" cy="638.4" r="8.900"/><circle cx="1498.6" cy="525.3" r="8.900"/><circle cx="1652.2" cy="708.6" r="8.900"/><circle cx="1655.1" cy="656.2" r="8.900"/><circle cx="1444.2" cy="738.4" r="8.900"/><circle cx="1685.2" cy="476.2" r="8.900"/><circle cx="1427.6" cy="692.1" r="8.900"/><circle cx="1627.8" cy="579.5" r="8.900"/><circle cx="1564.6" cy="798.4" r="8.900"/><circle cx="1605.3" cy="830.6" r="8.900"/><circle cx="1752.4" cy="626.8" r="8.900"/><circle cx="1879.1" cy="563.5" r="8.900"/><circle cx="1736.3" cy="587.4" r="8.900"/><circle cx="1425.3" cy="436.8" r="8.900"/><circle cx="1691.3" cy="837.5" r="8.900"/><circle cx="1474.9" cy="740.9" r="8.900"/><circle cx="1507.6" cy="521.2" r="8.900"/><circle cx="1477" cy="758.8" r="8.900"/><circle cx="1687.7" cy="637.9" r="8.900"/><circle cx="1454" cy="704.3" r="8.900"/><circle cx="1392.1" cy="696.7" r="8.900"/><circle cx="1329.9" cy="773.8" r="8.900"/><circle cx="1479.3" cy="725" r="8.900"/><circle cx="1450.9" cy="544.8" r="8.900"/><circle cx="1617.9" cy="619.3" r="8.900"/><circle cx="1546.5" cy="707.6" r="8.900"/><circle cx="1315.3" cy="798.2" r="8.900"/><circle cx="1825.1" cy="818" r="8.900"/><circle cx="1355.3" cy="744.2" r="8.900"/><circle cx="1888.4" cy="642" r="8.900"/><circle cx="1362.9" cy="560.1" r="8.900"/><circle cx="1708.7" cy="550.7" r="8.900"/><circle cx="1437.9" cy="695.4" r="8.900"/><circle cx="1554.3" cy="822.5" r="8.900"/><circle cx="1399.1" cy="810.7" r="8.900"/><circle cx="1569.1" cy="694.9" r="8.900"/><circle cx="1605.7" cy="825.2" r="8.900"/><circle cx="1585.4" cy="669.5" r="8.900"/><circle cx="1574" cy="593.6" r="8.900"/><circle cx="1316.2" cy="638.1" r="8.900"/><circle cx="1438.5" cy="732.9" r="8.900"/><circle cx="1579.4" cy="709.6" r="8.900"/><circle cx="1575.2" cy="482.3" r="8.900"/><circle cx="1409" cy="522.8" r="8.900"/><circle cx="1456.5" cy="652.8" r="8.900"/><circle cx="1761.9" cy="669.1" r="8.900"/><circle cx="1889.4" cy="805" r="8.900"/><circle cx="1846.3" cy="822.6" r="8.900"/><circle cx="1410.2" cy="737.2" r="8.900"/><circle cx="1409.1" cy="699" r="8.900"/><circle cx="1741.1" cy="519.4" r="8.900"/><circle cx="1883" cy="722.8" r="8.900"/><circle cx="1545.2" cy="510.5" r="8.900"/><circle cx="1604.8" cy="550.4" r="8.900"/><circle cx="1684.4" cy="596" r="8.900"/><circle cx="1490.5" cy="534.5" r="8.900"/><circle cx="1615.1" cy="487.2" r="8.900"/><circle cx="1711.9" cy="820.2" r="8.900"/><circle cx="1489.5" cy="659.4" r="8.900"/><circle cx="1415.5" cy="778.8" r="8.900"/><circle cx="1551.6" cy="787.8" r="8.900"/><circle cx="1783.3" cy="549.4" r="8.900"/><circle cx="1717.3" cy="542.4" r="8.900"/><circle cx="1749.4" cy="586.9" r="8.900"/><circle cx="1727.3" cy="707" r="8.900"/><circle cx="1500.4" cy="607.1" r="8.900"/><circle cx="1576.8" cy="829.9" r="8.900"/><circle cx="1496.8" cy="728.7" r="8.900"/><circle cx="1556" cy="733.3" r="8.900"/><circle cx="1531.8" cy="730" r="8.900"/><circle cx="1397.9" cy="721.7" r="8.900"/><circle cx="1729.4" cy="546" r="8.900"/><circle cx="1526.1" cy="816.9" r="8.900"/><circle cx="1640" cy="802.8" r="8.900"/><circle cx="1545.2" cy="424.6" r="8.900"/><circle cx="1733" cy="604" r="8.900"/><circle cx="1365.3" cy="708.5" r="8.900"/><circle cx="1444.5" cy="743.2" r="8.900"/><circle cx="1765.2" cy="588.7" r="8.900"/><circle cx="1515.5" cy="576.8" r="8.900"/><circle cx="1655.4" cy="829.3" r="8.900"/><circle cx="1394.4" cy="689.4" r="8.900"/><circle cx="1480.4" cy="583.3" r="8.900"/><circle cx="1460.3" cy="617.3" r="8.900"/><circle cx="1535.9" cy="544.4" r="8.900"/><circle cx="1521.8" cy="663.9" r="8.900"/><circle cx="1413.8" cy="682.2" r="8.900"/><circle cx="1376.5" cy="519.2" r="8.900"/><circle cx="1674.6" cy="549.1" r="8.900"/><circle cx="1628" cy="744.4" r="8.900"/><circle cx="1600.5" cy="773.3" r="8.900"/><circle cx="1549.6" cy="494.9" r="8.900"/><circle cx="1485.1" cy="687.5" r="8.900"/><circle cx="1778.3" cy="652.2" r="8.900"/><circle cx="1396.8" cy="561.5" r="8.900"/><circle cx="1453.4" cy="495.8" r="8.900"/><circle cx="1522.6" cy="777.1" r="8.900"/><circle cx="1565.1" cy="776.2" r="8.900"/><circle cx="1599.4" cy="735.2" r="8.900"/><circle cx="1318" cy="726.9" r="8.900"/><circle cx="1230.3" cy="557.3" r="8.900"/><circle cx="1769.1" cy="626.1" r="8.900"/><circle cx="1321.4" cy="724.2" r="8.900"/><circle cx="1552.5" cy="816.8" r="8.900"/><circle cx="1701.2" cy="517.6" r="8.900"/><circle cx="1351.3" cy="637.7" r="8.900"/><circle cx="1328.4" cy="754.8" r="8.900"/><circle cx="1463.4" cy="553.1" r="8.900"/><circle cx="1732.8" cy="497.9" r="8.900"/><circle cx="1774.9" cy="641.2" r="8.900"/><circle cx="1578" cy="574.2" r="8.900"/><circle cx="1856.3" cy="663.9" r="8.900"/><circle cx="1839" cy="640.7" r="8.900"/><circle cx="1601.8" cy="624.8" r="8.900"/><circle cx="1736.5" cy="833.9" r="8.900"/><circle cx="1648.8" cy="775" r="8.900"/><circle cx="1685" cy="459.3" r="8.900"/><circle cx="1449.9" cy="657.1" r="8.900"/><circle cx="1395.7" cy="569.8" r="8.900"/><circle cx="1741.8" cy="565.2" r="8.900"/><circle cx="1804.1" cy="805.6" r="8.900"/><circle cx="1685.8" cy="554" r="8.900"/><circle cx="1481.4" cy="491.4" r="8.900"/><circle cx="1786" cy="448.7" r="8.900"/><circle cx="1338" cy="552.6" r="8.900"/><circle cx="1835" cy="678.9" r="8.900"/><circle cx="1751.4" cy="673.1" r="8.900"/><circle cx="1537.2" cy="541.2" r="8.900"/><circle cx="1706.8" cy="791.1" r="8.900"/><circle cx="1455.8" cy="478.6" r="8.900"/><circle cx="1756.6" cy="739.4" r="8.900"/><circle cx="1621.8" cy="826.5" r="8.900"/><circle cx="1393.7" cy="617.5" r="8.900"/><circle cx="1314.8" cy="773.4" r="8.900"/><circle cx="1236.1" cy="719.6" r="8.900"/><circle cx="1605" cy="625.3" r="8.900"/><circle cx="1645.3" cy="633.5" r="8.900"/><circle cx="1367.3" cy="772.8" r="8.900"/><circle cx="1874.2" cy="601" r="8.900"/><circle cx="1566" cy="783.2" r="8.900"/><circle cx="1447.3" cy="571.6" r="8.900"/><circle cx="1485" cy="474.7" r="8.900"/><circle cx="1588.3" cy="823" r="8.900"/><circle cx="1496.3" cy="558.3" r="8.900"/><circle cx="1705" cy="590.4" r="8.900"/><circle cx="1453.2" cy="532.2" r="8.900"/><circle cx="1657.3" cy="565.8" r="8.900"/><circle cx="1558.3" cy="703" r="8.900"/><circle cx="1608.4" cy="743.2" r="8.900"/><circle cx="1751" cy="838.4" r="8.900"/><circle cx="1519.6" cy="711.8" r="8.900"/><circle cx="1383.3" cy="529.3" r="8.900"/><circle cx="1782.4" cy="765.2" r="8.900"/><circle cx="1548.9" cy="732.5" r="8.900"/><circle cx="1357.4" cy="729.3" r="8.900"/><circle cx="1500.7" cy="614.9" r="8.900"/><circle cx="1457.5" cy="645.6" r="8.900"/><circle cx="1482.2" cy="760.9" r="8.900"/><circle cx="1378.7" cy="632.7" r="8.900"/><circle cx="1728.6" cy="663.8" r="8.900"/><circle cx="1540.8" cy="599.3" r="8.900"/><circle cx="1620.7" cy="584.3" r="8.900"/><circle cx="1292" cy="601.1" r="8.900"/><circle cx="1582.6" cy="549.4" r="8.900"/><circle cx="1431.9" cy="783.3" r="8.900"/><circle cx="1383.7" cy="777.6" r="8.900"/><circle cx="1382.1" cy="487.5" r="8.900"/><circle cx="1719.2" cy="677.3" r="8.900"/><circle cx="1822.8" cy="839.8" r="8.900"/><circle cx="1365.7" cy="721.6" r="8.900"/><circle cx="1376.3" cy="649.3" r="8.900"/><circle cx="1503.8" cy="554.1" r="8.900"/><circle cx="1716.2" cy="757.9" r="8.900"/><circle cx="1700.7" cy="669" r="8.900"/><circle cx="1780.4" cy="602.4" r="8.900"/><circle cx="1581.6" cy="749.9" r="8.900"/><circle cx="1350.1" cy="720.8" r="8.900"/><circle cx="1650.6" cy="673.8" r="8.900"/><circle cx="1645.2" cy="466.1" r="8.900"/><circle cx="1768.7" cy="683.9" r="8.900"/><circle cx="1293" cy="562.4" r="8.900"/><circle cx="1398.9" cy="655.5" r="8.900"/><circle cx="1600" cy="675.3" r="8.900"/><circle cx="1778.9" cy="533.1" r="8.900"/><circle cx="1796.1" cy="696.8" r="8.900"/><circle cx="1505.5" cy="503.5" r="8.900"/><circle cx="1411.1" cy="759.2" r="8.900"/><circle cx="1509" cy="736.4" r="8.900"/><circle cx="1359.8" cy="692.7" r="8.900"/><circle cx="1530.4" cy="530" r="8.900"/><circle cx="1513.3" cy="568.2" r="8.900"/><circle cx="1530.1" cy="657.9" r="8.900"/><circle cx="1313.6" cy="743.5" r="8.900"/><circle cx="1651.8" cy="539.4" r="8.900"/><circle cx="1514.5" cy="780.2" r="8.900"/><circle cx="1566.6" cy="582.2" r="8.900"/><circle cx="1679.5" cy="581.9" r="8.900"/><circle cx="1647.8" cy="705.8" r="8.900"/><circle cx="1688.7" cy="587.7" r="8.900"/><circle cx="1773.2" cy="723.3" r="8.900"/><circle cx="1554.5" cy="782.4" r="8.900"/><circle cx="1630.8" cy="819.9" r="8.900"/><circle cx="1710.3" cy="476.6" r="8.900"/><circle cx="1651.5" cy="631.9" r="8.900"/><circle cx="1368.3" cy="689.8" r="8.900"/><circle cx="1512.6" cy="696.9" r="8.900"/><circle cx="1364.4" cy="646.5" r="8.900"/><circle cx="1635.2" cy="626.2" r="8.900"/><circle cx="1685.6" cy="795.5" r="8.900"/><circle cx="1661.2" cy="513.4" r="8.900"/><circle cx="1647.6" cy="794.1" r="8.900"/><circle cx="1471.9" cy="454" r="8.900"/><circle cx="1623.2" cy="470.9" r="8.900"/><circle cx="1332.3" cy="717.2" r="8.900"/><circle cx="1536.6" cy="557.4" r="8.900"/><circle cx="1342.8" cy="692.4" r="8.900"/><circle cx="1331.3" cy="636.2" r="8.900"/><circle cx="1772.8" cy="601.3" r="8.900"/><circle cx="1718.2" cy="826" r="8.900"/><circle cx="1522.4" cy="819.1" r="8.900"/><circle cx="1553.1" cy="768.3" r="8.900"/><circle cx="1495.2" cy="575.8" r="8.900"/><circle cx="1724.3" cy="722.2" r="8.900"/><circle cx="1508.2" cy="649.6" r="8.900"/><circle cx="1373.8" cy="686.6" r="8.900"/><circle cx="1369.4" cy="657.2" r="8.900"/><circle cx="1403.5" cy="723.4" r="8.900"/><circle cx="1292" cy="642.4" r="8.900"/><circle cx="1311.2" cy="691.6" r="8.900"/><circle cx="1415.8" cy="724.3" r="8.900"/><circle cx="1334" cy="491.5" r="8.900"/><circle cx="1368" cy="768.1" r="8.900"/><circle cx="1373.3" cy="720.3" r="8.900"/><circle cx="1319.7" cy="803.3" r="8.900"/><circle cx="1565.3" cy="534.4" r="8.900"/><circle cx="1567.7" cy="564.3" r="8.900"/><circle cx="1736.8" cy="597.7" r="8.900"/><circle cx="1784" cy="748" r="8.900"/><circle cx="1641.8" cy="768.8" r="8.900"/><circle cx="1284.7" cy="521.7" r="8.900"/><circle cx="1668.6" cy="596" r="8.900"/><circle cx="1369.3" cy="561.4" r="8.900"/><circle cx="1696.7" cy="756.8" r="8.900"/><circle cx="1326.9" cy="769.5" r="8.900"/><circle cx="1514" cy="657.3" r="8.900"/><circle cx="1378.1" cy="566.8" r="8.900"/><circle cx="1281.8" cy="802.2" r="8.900"/><circle cx="1317.7" cy="708.5" r="8.900"/><circle cx="1512.6" cy="771" r="8.900"/><circle cx="1774.7" cy="705.5" r="8.900"/><circle cx="1315.2" cy="740.1" r="8.900"/><circle cx="1466.4" cy="539.2" r="8.900"/><circle cx="1690.9" cy="790.1" r="8.900"/><circle cx="1507.1" cy="537" r="8.900"/><circle cx="1766.8" cy="674.8" r="8.900"/><circle cx="1644.8" cy="735.2" r="8.900"/><circle cx="1328.5" cy="577.8" r="8.900"/><circle cx="1308.9" cy="561.6" r="8.900"/><circle cx="1522.4" cy="778.2" r="8.900"/><circle cx="1632.8" cy="784.9" r="8.900"/><circle cx="1650.5" cy="755.9" r="8.900"/><circle cx="1449.9" cy="611.2" r="8.900"/><circle cx="1334.9" cy="649.8" r="8.900"/><circle cx="1582.8" cy="630" r="8.900"/><circle cx="1793" cy="726" r="8.900"/><circle cx="1636.2" cy="537.8" r="8.900"/><circle cx="1775.7" cy="686.8" r="8.900"/><circle cx="1456.3" cy="632.9" r="8.900"/><circle cx="1742" cy="485.2" r="8.900"/><circle cx="1569.5" cy="678.6" r="8.900"/><circle cx="1491.7" cy="624.3" r="8.900"/><circle cx="1572.7" cy="680.5" r="8.900"/><circle cx="1443.7" cy="626.3" r="8.900"/><circle cx="1753.6" cy="709.2" r="8.900"/><circle cx="1486.7" cy="694.6" r="8.900"/><circle cx="1601.3" cy="790.7" r="8.900"/><circle cx="1376" cy="600.4" r="8.900"/><circle cx="1543.2" cy="564.5" r="8.900"/><circle cx="1326.4" cy="644.6" r="8.900"/><circle cx="1663.7" cy="465.3" r="8.900"/><circle cx="1768.2" cy="683.9" r="8.900"/><circle cx="1379.1" cy="615" r="8.900"/><circle cx="1365.5" cy="807.7" r="8.900"/><circle cx="1212.6" cy="797.1" r="8.900"/><circle cx="1364" cy="445.7" r="8.900"/><circle cx="1558.6" cy="539.7" r="8.900"/><circle cx="1503.7" cy="811.4" r="8.900"/><circle cx="1525.8" cy="596.1" r="8.900"/><circle cx="1524.3" cy="455" r="8.900"/><circle cx="1598" cy="704.3" r="8.900"/><circle cx="1744.8" cy="551" r="8.900"/><circle cx="1604.2" cy="741.8" r="8.900"/><circle cx="1478.6" cy="795.8" r="8.900"/><circle cx="1579.2" cy="510.9" r="8.900"/><circle cx="1532" cy="494.6" r="8.900"/><circle cx="1433.2" cy="812.6" r="8.900"/><circle cx="1392.3" cy="760.8" r="8.900"/><circle cx="1565.6" cy="626.2" r="8.900"/><circle cx="1812.7" cy="576.3" r="8.900"/><circle cx="1425.9" cy="418.7" r="8.900"/><circle cx="1673.6" cy="790.1" r="8.900"/><circle cx="1637.3" cy="701" r="8.900"/><circle cx="1485" cy="726.9" r="8.900"/><circle cx="1590.6" cy="542.8" r="8.900"/><circle cx="1826.3" cy="597.9" r="8.900"/><circle cx="1416.7" cy="810.3" r="8.900"/><circle cx="1453.2" cy="512.1" r="8.900"/><circle cx="1489.3" cy="744.1" r="8.900"/><circle cx="1273.2" cy="720.5" r="8.900"/><circle cx="1627.7" cy="515" r="8.900"/><circle cx="1679.3" cy="805" r="8.900"/><circle cx="1371.1" cy="545" r="8.900"/><circle cx="1563.3" cy="659.6" r="8.900"/><circle cx="1408.5" cy="567.5" r="8.900"/><circle cx="1736.7" cy="547" r="8.900"/><circle cx="1436.1" cy="804.5" r="8.900"/><circle cx="1534.6" cy="664.3" r="8.900"/><circle cx="1327.4" cy="608.6" r="8.900"/><circle cx="1826.6" cy="558.4" r="8.900"/><circle cx="1540.4" cy="539.8" r="8.900"/><circle cx="1505.6" cy="661.9" r="8.900"/><circle cx="1328.8" cy="559.8" r="8.900"/><circle cx="1480" cy="743.3" r="8.900"/><circle cx="1683.5" cy="655.3" r="8.900"/><circle cx="1343.8" cy="610.6" r="8.900"/><circle cx="1608.4" cy="672.2" r="8.900"/><circle cx="1758.1" cy="721.8" r="8.900"/><circle cx="1635.6" cy="737.2" r="8.900"/><circle cx="1534.5" cy="511.7" r="8.900"/><circle cx="1608.5" cy="542.8" r="8.900"/><circle cx="1517" cy="728.1" r="8.900"/><circle cx="1732.2" cy="761.1" r="8.900"/><circle cx="1579" cy="527.2" r="8.900"/><circle cx="1497" cy="744.5" r="8.900"/><circle cx="1858" cy="599.9" r="8.900"/><circle cx="1430.3" cy="778.9" r="8.900"/><circle cx="1396" cy="770.5" r="8.900"/><circle cx="1435.5" cy="763.9" r="8.900"/><circle cx="1262.8" cy="801.4" r="8.900"/><circle cx="1659.1" cy="638.8" r="8.900"/><circle cx="1378.9" cy="597.7" r="8.900"/><circle cx="1690.5" cy="729" r="8.900"/><circle cx="1867" cy="762.7" r="8.900"/><circle cx="1427.3" cy="603.4" r="8.900"/><circle cx="1616.8" cy="537.3" r="8.900"/><circle cx="1401" cy="770.6" r="8.900"/><circle cx="1452.4" cy="814.7" r="8.900"/><circle cx="1489.1" cy="569" r="8.900"/><circle cx="1727.7" cy="786.7" r="8.900"/><circle cx="1734.5" cy="626.4" r="8.900"/><circle cx="1337" cy="650.1" r="8.900"/><circle cx="1491.8" cy="517" r="8.900"/><circle cx="1358.1" cy="697" r="8.900"/><circle cx="1381.7" cy="583.7" r="8.900"/><circle cx="1360.1" cy="663.7" r="8.900"/><circle cx="1372" cy="494.9" r="8.900"/><circle cx="1610.9" cy="709.8" r="8.900"/><circle cx="1620.2" cy="505.3" r="8.900"/><circle cx="1469.3" cy="816.3" r="8.900"/><circle cx="1704.8" cy="560.9" r="8.900"/><circle cx="1566.4" cy="467.2" r="8.900"/><circle cx="1479.5" cy="813.4" r="8.900"/><circle cx="1768.8" cy="541.4" r="8.900"/><circle cx="1759.8" cy="795.2" r="8.900"/><circle cx="1765.5" cy="821.9" r="8.900"/><circle cx="1337.7" cy="615.1" r="8.900"/><circle cx="1675.2" cy="770.2" r="8.900"/><circle cx="1371.3" cy="511.9" r="8.900"/><circle cx="1824.6" cy="638.8" r="8.900"/><circle cx="1467.6" cy="488" r="8.900"/><circle cx="1326.8" cy="514.9" r="8.900"/><circle cx="1649.4" cy="683.2" r="8.900"/><circle cx="1596.8" cy="775.3" r="8.900"/><circle cx="1771.5" cy="636" r="8.900"/><circle cx="1578.1" cy="616.7" r="8.900"/><circle cx="1225.1" cy="598" r="8.900"/><circle cx="1413" cy="611.5" r="8.900"/><circle cx="1607.6" cy="553.5" r="8.900"/><circle cx="1624.9" cy="784.9" r="8.900"/><circle cx="1762.9" cy="622" r="8.900"/><circle cx="1614" cy="570.7" r="8.900"/><circle cx="1413.1" cy="562.6" r="8.900"/><circle cx="1663.6" cy="709.2" r="8.900"/><circle cx="1460.7" cy="733.5" r="8.900"/><circle cx="1528.5" cy="610.4" r="8.900"/><circle cx="1411.5" cy="708.7" r="8.900"/><circle cx="1513.2" cy="816.3" r="8.900"/><circle cx="1328.7" cy="653.2" r="8.900"/><circle cx="1734.2" cy="801.1" r="8.900"/><circle cx="1431.7" cy="726.5" r="8.900"/><circle cx="1307.6" cy="595.5" r="8.900"/><circle cx="1417.3" cy="803.6" r="8.900"/><circle cx="1309.2" cy="809.5" r="8.900"/><circle cx="1289" cy="720.7" r="8.900"/><circle cx="1530.4" cy="730.8" r="8.900"/><circle cx="1478.8" cy="694.6" r="8.900"/><circle cx="1659.4" cy="607.4" r="8.900"/><circle cx="1775.8" cy="565.7" r="8.900"/><circle cx="1683.3" cy="635" r="8.900"/><circle cx="1618.7" cy="636.3" r="8.900"/><circle cx="1750.2" cy="787.9" r="8.900"/><circle cx="1363.2" cy="629" r="8.900"/><circle cx="1379.2" cy="502.4" r="8.900"/><circle cx="1721" cy="591.2" r="8.900"/><circle cx="1424.3" cy="538.2" r="8.900"/><circle cx="1634.3" cy="738.8" r="8.900"/><circle cx="1371.7" cy="605.1" r="8.900"/><circle cx="1348.1" cy="483" r="8.900"/><circle cx="1754.1" cy="559.8" r="8.900"/><circle cx="1715.9" cy="752.3" r="8.900"/><circle cx="1524.6" cy="738.4" r="8.900"/><circle cx="1342.1" cy="685.9" r="8.900"/><circle cx="1870.4" cy="643.6" r="8.900"/><circle cx="1776.4" cy="635.9" r="8.900"/><circle cx="1379" cy="538.7" r="8.900"/><circle cx="1529.8" cy="746.1" r="8.900"/><circle cx="1620.9" cy="672.5" r="8.900"/><circle cx="1487.9" cy="607.1" r="8.900"/><circle cx="1359.7" cy="566.8" r="8.900"/><circle cx="1289.7" cy="683.4" r="8.900"/><circle cx="1769.1" cy="755.2" r="8.900"/><circle cx="1473.5" cy="822.6" r="8.900"/><circle cx="1419.8" cy="486.8" r="8.900"/><circle cx="1414.5" cy="605.8" r="8.900"/><circle cx="1344.1" cy="645.2" r="8.900"/><circle cx="1738.1" cy="616" r="8.900"/><circle cx="1563.4" cy="729.6" r="8.900"/><circle cx="1654.9" cy="481.2" r="8.900"/><circle cx="1276.8" cy="743.9" r="8.900"/><circle cx="1790.7" cy="830.3" r="8.900"/><circle cx="1714.4" cy="787.4" r="8.900"/><circle cx="1651.1" cy="741.1" r="8.900"/><circle cx="1533.8" cy="692.5" r="8.900"/><circle cx="1738.3" cy="744.3" r="8.900"/><circle cx="1682.9" cy="828" r="8.900"/><circle cx="1600.6" cy="708" r="8.900"/><circle cx="1499.3" cy="544.3" r="8.900"/><circle cx="1462.6" cy="488.9" r="8.900"/><circle cx="1696.2" cy="566.4" r="8.900"/><circle cx="1392.7" cy="519.5" r="8.900"/><circle cx="1696.1" cy="483" r="8.900"/><circle cx="1531.6" cy="626.6" r="8.900"/><circle cx="1806.6" cy="839.6" r="8.900"/><circle cx="1746.7" cy="496.5" r="8.900"/><circle cx="1406.3" cy="795.1" r="8.900"/><circle cx="1559.5" cy="684.2" r="8.900"/><circle cx="1493.6" cy="500.2" r="8.900"/><circle cx="1643" cy="546.7" r="8.900"/><circle cx="1627.3" cy="713.3" r="8.900"/><circle cx="1788.6" cy="501.3" r="8.900"/><circle cx="1760.6" cy="654.4" r="8.900"/><circle cx="1499.6" cy="508" r="8.900"/><circle cx="1677.7" cy="751.2" r="8.900"/><circle cx="1412.3" cy="571.3" r="8.900"/><circle cx="1480.7" cy="784.6" r="8.900"/><circle cx="1392.1" cy="599.7" r="8.900"/><circle cx="1393.2" cy="736.8" r="8.900"/><circle cx="1580.9" cy="492.2" r="8.900"/><circle cx="1366.1" cy="804.9" r="8.900"/><circle cx="1684.6" cy="603.4" r="8.900"/><circle cx="1403.7" cy="528.1" r="8.900"/><circle cx="1607.8" cy="570.1" r="8.900"/><circle cx="1670.1" cy="587.1" r="8.900"/><circle cx="1642" cy="784.4" r="8.900"/><circle cx="1624.9" cy="453.6" r="8.900"/><circle cx="1641.9" cy="669.2" r="8.900"/><circle cx="1704.1" cy="830.3" r="8.900"/><circle cx="1606.7" cy="706" r="8.900"/><circle cx="1398.3" cy="576.2" r="8.900"/><circle cx="1323.8" cy="735.1" r="8.900"/><circle cx="1752.8" cy="545.7" r="8.900"/><circle cx="1528.5" cy="762.7" r="8.900"/><circle cx="1636.7" cy="752.7" r="8.900"/><circle cx="1348.3" cy="678.2" r="8.900"/><circle cx="1361.5" cy="774.1" r="8.900"/><circle cx="1899.7" cy="564.6" r="8.900"/><circle cx="1600.3" cy="628.4" r="8.900"/><circle cx="1533.7" cy="577.9" r="8.900"/><circle cx="1543.3" cy="740.3" r="8.900"/><circle cx="1485.2" cy="812" r="8.900"/><circle cx="1653.3" cy="600.1" r="8.900"/><circle cx="1756.6" cy="837.8" r="8.900"/><circle cx="1363.4" cy="534" r="8.900"/><circle cx="1424.9" cy="520.6" r="8.900"/><circle cx="1414.9" cy="694.8" r="8.900"/><circle cx="1321.1" cy="753.6" r="8.900"/><circle cx="1344" cy="565.2" r="8.900"/><circle cx="1464.5" cy="454.9" r="8.900"/><circle cx="1586.4" cy="549.1" r="8.900"/><circle cx="1689.8" cy="651.6" r="8.900"/><circle cx="1841.2" cy="601.2" r="8.900"/><circle cx="1751.1" cy="806.3" r="8.900"/><circle cx="1500.5" cy="587.6" r="8.900"/><circle cx="1510.9" cy="453.7" r="8.900"/><circle cx="1784" cy="533.1" r="8.900"/><circle cx="1791" cy="594.8" r="8.900"/><circle cx="1548.2" cy="475.2" r="8.900"/><circle cx="1676.2" cy="719.4" r="8.900"/><circle cx="1558" cy="718.1" r="8.900"/><circle cx="1483.6" cy="542.1" r="8.900"/><circle cx="1724.4" cy="633.1" r="8.900"/><circle cx="1705" cy="595.7" r="8.900"/><circle cx="1445" cy="693.1" r="8.900"/><circle cx="1692.3" cy="549.7" r="8.900"/><circle cx="1287" cy="541" r="8.900"/><circle cx="1439.7" cy="808.6" r="8.900"/><circle cx="1598.3" cy="536.7" r="8.900"/><circle cx="1667" cy="780.5" r="8.900"/><circle cx="1309.6" cy="602.7" r="8.900"/><circle cx="1505.5" cy="536.3" r="8.900"/><circle cx="1618.6" cy="792.4" r="8.900"/><circle cx="1522.2" cy="677.8" r="8.900"/><circle cx="1437.3" cy="714.6" r="8.900"/><circle cx="1460.4" cy="505.7" r="8.900"/><circle cx="1394" cy="805.8" r="8.900"/><circle cx="1618.4" cy="602.6" r="8.900"/><circle cx="1692.7" cy="503.1" r="8.900"/><circle cx="1573.2" cy="530.6" r="8.900"/><circle cx="1606" cy="806.7" r="8.900"/><circle cx="1781.6" cy="497" r="8.900"/><circle cx="1502.2" cy="571.7" r="8.900"/><circle cx="1700.9" cy="543.6" r="8.900"/><circle cx="1530.9" cy="572.7" r="8.900"/><circle cx="1791.4" cy="450.2" r="8.900"/><circle cx="1335" cy="583.8" r="8.900"/><circle cx="1485.4" cy="709.1" r="8.900"/><circle cx="1261.4" cy="739.9" r="8.900"/><circle cx="1818.6" cy="677.2" r="8.900"/><circle cx="1575.2" cy="539.8" r="8.900"/><circle cx="1620.1" cy="623.3" r="8.900"/><circle cx="1497.6" cy="527.2" r="8.900"/><circle cx="1627.2" cy="543.5" r="8.900"/><circle cx="1327.6" cy="690.7" r="8.900"/><circle cx="1506.6" cy="816.9" r="8.900"/><circle cx="1683.4" cy="669.7" r="8.900"/><circle cx="1495.3" cy="590.5" r="8.900"/><circle cx="1381.8" cy="572.6" r="8.900"/><circle cx="1703.4" cy="542.1" r="8.900"/><circle cx="1606.1" cy="590.9" r="8.900"/><circle cx="1350.8" cy="654.1" r="8.900"/><circle cx="1647.4" cy="452.8" r="8.900"/><circle cx="1663.5" cy="747" r="8.900"/><circle cx="1499.1" cy="539.5" r="8.900"/><circle cx="1546.4" cy="658.6" r="8.900"/><circle cx="1545.1" cy="610.4" r="8.900"/><circle cx="1762.9" cy="753.4" r="8.900"/><circle cx="1577.2" cy="615" r="8.900"/><circle cx="1463.2" cy="472.9" r="8.900"/><circle cx="1518.3" cy="617.2" r="8.900"/><circle cx="1597.3" cy="663.1" r="8.900"/><circle cx="1377.1" cy="733.1" r="8.900"/><circle cx="1432.7" cy="816.5" r="8.900"/><circle cx="1617.8" cy="556.6" r="8.900"/><circle cx="1566.3" cy="816.3" r="8.900"/><circle cx="1603.3" cy="757.6" r="8.900"/><circle cx="1462.8" cy="695.1" r="8.900"/><circle cx="1584.8" cy="513.3" r="8.900"/><circle cx="1337.9" cy="518.2" r="8.900"/><circle cx="1552.2" cy="456.2" r="8.900"/><circle cx="1333.4" cy="799.8" r="8.900"/><circle cx="1673" cy="818.9" r="8.900"/><circle cx="1707.7" cy="838" r="8.900"/><circle cx="1247.2" cy="778" r="8.900"/><circle cx="1398.2" cy="682.5" r="8.900"/><circle cx="1729.7" cy="584.4" r="8.900"/><circle cx="1743.3" cy="531.8" r="8.900"/><circle cx="1724.5" cy="840.1" r="8.900"/><circle cx="1362" cy="757.4" r="8.900"/><circle cx="1361.5" cy="612.7" r="8.900"/><circle cx="1562.2" cy="709.7" r="8.900"/><circle cx="1673.3" cy="701.5" r="8.900"/><circle cx="1430.1" cy="487.7" r="8.900"/><circle cx="1794.1" cy="645.4" r="8.900"/><circle cx="1318" cy="705.2" r="8.900"/><circle cx="1854.9" cy="639.6" r="8.900"/><circle cx="1816.2" cy="719.6" r="8.900"/><circle cx="1668.8" cy="675.8" r="8.900"/><circle cx="1614.5" cy="705.1" r="8.900"/><circle cx="1462.6" cy="525.9" r="8.900"/><circle cx="1738" cy="826.4" r="8.900"/><circle cx="1759.7" cy="689.6" r="8.900"/><circle cx="1573.6" cy="515.4" r="8.900"/><circle cx="1687.9" cy="830.4" r="8.900"/><circle cx="1768.5" cy="667.1" r="8.900"/><circle cx="1359.2" cy="685.5" r="8.900"/><circle cx="1713.9" cy="751.9" r="8.900"/><circle cx="1256.7" cy="679.1" r="8.900"/><circle cx="1383.1" cy="682.8" r="8.900"/><circle cx="1747.5" cy="431.8" r="8.900"/><circle cx="1362.9" cy="679.2" r="8.900"/><circle cx="1374.5" cy="586.9" r="8.900"/><circle cx="1423.1" cy="470.6" r="8.900"/><circle cx="1488.1" cy="814.8" r="8.900"/><circle cx="1534.6" cy="608.9" r="8.900"/><circle cx="1616.5" cy="665" r="8.900"/><circle cx="1314.7" cy="784.2" r="8.900"/><circle cx="1757.8" cy="821.7" r="8.900"/><circle cx="1595.8" cy="709.5" r="8.900"/><circle cx="1621.1" cy="486.7" r="8.900"/><circle cx="1604.9" cy="642.4" r="8.900"/><circle cx="1778.4" cy="549.7" r="8.900"/><circle cx="1471.3" cy="470.3" r="8.900"/><circle cx="1475.4" cy="701.2" r="8.900"/><circle cx="1630.5" cy="781.1" r="8.900"/><circle cx="1309.2" cy="514.8" r="8.900"/><circle cx="1532.9" cy="698.5" r="8.900"/><circle cx="1785.4" cy="548.1" r="8.900"/><circle cx="1656.4" cy="788.1" r="8.900"/><circle cx="1511.7" cy="795.3" r="8.900"/><circle cx="1651.3" cy="740.3" r="8.900"/><circle cx="1669.6" cy="556.5" r="8.900"/><circle cx="1687.4" cy="703.3" r="8.900"/><circle cx="1764.3" cy="714.8" r="8.900"/><circle cx="1635.9" cy="672.7" r="8.900"/><circle cx="1545" cy="771.5" r="8.900"/><circle cx="1850.7" cy="762.5" r="8.900"/><circle cx="1415.2" cy="658.5" r="8.900"/><circle cx="1504.6" cy="421.3" r="8.900"/><circle cx="1548.6" cy="748" r="8.900"/><circle cx="1824.8" cy="660.2" r="8.900"/><circle cx="1614.2" cy="672.4" r="8.900"/><circle cx="1458.7" cy="523.5" r="8.900"/><circle cx="1488.7" cy="794.4" r="8.900"/><circle cx="1718" cy="735.7" r="8.900"/><circle cx="1698.3" cy="627.4" r="8.900"/><circle cx="1542.5" cy="475" r="8.900"/><circle cx="1589.9" cy="809.8" r="8.900"/><circle cx="1845.7" cy="580.2" r="8.900"/><circle cx="1674.2" cy="787" r="8.900"/><circle cx="1649.6" cy="532" r="8.900"/><circle cx="1774.7" cy="584" r="8.900"/><circle cx="1771" cy="747.8" r="8.900"/><circle cx="1546.3" cy="526.1" r="8.900"/><circle cx="1713.5" cy="584" r="8.900"/><circle cx="1788.6" cy="484.7" r="8.900"/><circle cx="1652.8" cy="517.9" r="8.900"/><circle cx="1787.4" cy="804.1" r="8.900"/><circle cx="1496" cy="569.7" r="8.900"/><circle cx="1557.8" cy="826.8" r="8.900"/><circle cx="1427.7" cy="765.2" r="8.900"/><circle cx="1510.4" cy="705.4" r="8.900"/><circle cx="1427.1" cy="652.5" r="8.900"/><circle cx="1300.4" cy="764.1" r="8.900"/><circle cx="1728" cy="599.8" r="8.900"/><circle cx="1707.2" cy="431.4" r="8.900"/><circle cx="1710.4" cy="458.2" r="8.900"/><circle cx="1414.6" cy="588.4" r="8.900"/><circle cx="1291" cy="621.8" r="8.900"/><circle cx="1708.4" cy="510.1" r="8.900"/><circle cx="1656.6" cy="582.4" r="8.900"/><circle cx="1596.7" cy="615.1" r="8.900"/><circle cx="1498.6" cy="582.1" r="8.900"/><circle cx="1645.3" cy="579.9" r="8.900"/><circle cx="1480.1" cy="655.3" r="8.900"/><circle cx="1526.8" cy="824.5" r="8.900"/><circle cx="1586.8" cy="427.1" r="8.900"/><circle cx="1454.2" cy="572.9" r="8.900"/><circle cx="1315.5" cy="529.6" r="8.900"/><circle cx="1430.2" cy="571.4" r="8.900"/><circle cx="1691" cy="553.8" r="8.900"/><circle cx="1327.1" cy="603.6" r="8.900"/><circle cx="1574.2" cy="821.4" r="8.900"/><circle cx="1512.4" cy="625.2" r="8.900"/><circle cx="1731.8" cy="514.3" r="8.900"/><circle cx="1557.8" cy="651.6" r="8.900"/><circle cx="1331" cy="569.2" r="8.900"/><circle cx="1719.1" cy="703.3" r="8.900"/><circle cx="1579.7" cy="634.3" r="8.900"/><circle cx="1416.6" cy="553.6" r="8.900"/><circle cx="1811.4" cy="698.7" r="8.900"/><circle cx="1562" cy="574.4" r="8.900"/><circle cx="1678.7" cy="718" r="8.900"/><circle cx="1421.8" cy="587.2" r="8.900"/><circle cx="1620.3" cy="520.4" r="8.900"/><circle cx="1299.4" cy="803.1" r="8.900"/><circle cx="1755.5" cy="634" r="8.900"/><circle cx="1428.5" cy="503.6" r="8.900"/><circle cx="1367.1" cy="673.7" r="8.900"/><circle cx="1318.1" cy="522.8" r="8.900"/><circle cx="1624.5" cy="437.9" r="8.900"/><circle cx="1406.9" cy="706.9" r="8.900"/><circle cx="1326" cy="610.5" r="8.900"/><circle cx="1230.1" cy="798.8" r="8.900"/><circle cx="1654.3" cy="794" r="8.900"/><circle cx="1584.5" cy="532.6" r="8.900"/><circle cx="1358.7" cy="495.8" r="8.900"/><circle cx="1693.9" cy="582" r="8.900"/>
</g>
<g fill="#e81f18" stroke="#fff" stroke-width="2.400"><circle cx="1350" cy="389.5" r="7.800"/><circle cx="1937" cy="413" r="7.800"/><circle cx="1911.3" cy="853.5" r="7.800"/><circle cx="1180" cy="802" r="7.800"/><circle cx="1213.4" cy="493.5" r="7.800"/></g>
<circle cx="1643.5" cy="401.2" r="6.600" fill="#3b8edb" stroke="#fff" stroke-width="0.800"/><path d="M1640.3 401.2h6.400M1643.5 398.1v6.400" stroke="#fff" stroke-width="1.700"/>
<circle cx="1924.2" cy="633.2" r="6.600" fill="#3b8edb" stroke="#fff" stroke-width="0.800"/><path d="M1921 633.2h6.400M1924.2 630v6.400" stroke="#fff" stroke-width="1.700"/>
<circle cx="1545.7" cy="827.8" r="6.600" fill="#3b8edb" stroke="#fff" stroke-width="0.800"/><path d="M1542.5 827.8h6.400M1545.7 824.5v6.400" stroke="#fff" stroke-width="1.700"/>
<circle cx="1196.7" cy="647.8" r="6.600" fill="#3b8edb" stroke="#fff" stroke-width="0.800"/><path d="M1193.5 647.8h6.400M1196.7 644.5v6.400" stroke="#fff" stroke-width="1.700"/>
<circle cx="1281.7" cy="441.5" r="6.600" fill="#3b8edb" stroke="#fff" stroke-width="0.800"/><path d="M1278.5 441.5h6.400M1281.7 438.3v6.400" stroke="#fff" stroke-width="1.700"/>
<circle cx="1297" cy="344.300" r="18.500" fill="#1f1f1f"/><path d="M1291 338.500h12v1.600h-12zM1294.500 336.800h5v1.700h-5zM1291.800 341h10.400l-0.800 10.200a1.200 1.200 0 0 1-1.200 1.100h-6.400a1.200 1.200 0 0 1-1.200-1.100z" fill="#e8e8e8"/>
<circle cx="1349" cy="344.300" r="19.800" fill="#1f1f1f"/><path d="M1342.500 338.500h13M1346 338.500v-2h6v2M1343.800 339.500v12.500h10.400v-12.500" fill="none" stroke="#6a6a6a" stroke-width="1.300"/>
<circle cx="1403.500" cy="344" r="19.400" fill="#1f1f1f"/><path d="M1398 338.500l11 11M1409 338.500l-11 11" stroke="#e8e8e8" stroke-width="2.300" stroke-linecap="round"/>
<circle cx="2418.300" cy="270.400" r="22.300" fill="#3a3a3a"/><path d="M2409.300 270.400l4.500-7.800h9l4.500 7.800-4.500 7.800h-9z" fill="none" stroke="#f2f2f2" stroke-width="2.200" stroke-linejoin="round"/>
<circle cx="2478.400" cy="270.400" r="22.300" fill="#1f4e8c"/><path d="M2478.400 262.200l7.800 3.800-7.800 3.800-7.800-3.800z" fill="#fff"/><path d="M2470.300 267.600l7.300 3.600v8l-7.300-3.700zM2486.500 267.600l-7.300 3.600v8l7.300-3.700z" fill="#e4ebf5"/>
<rect x="811" y="1304.500" width="345" height="74.500" rx="7" fill="#212121"/>
<defs><clipPath id="sat"><circle cx="856.500" cy="1341.200" r="22.600"/></clipPath></defs><g clip-path="url(#sat)"><rect x="830" y="1315" width="54" height="54" fill="#4d6a3c"/><path d="M830 1325l30-8 24 14v10l-20 6-34-6z" fill="#5f7d47"/><path d="M832 1362l50-22v5l-48 22z" fill="#b7b59a"/><path d="M836 1356l20 8-10 8-16-6z" fill="#3b5531"/><path d="M862 1352l22-6v24h-20z" fill="#42603a"/></g>
<rect x="894" y="1319" width="240" height="45" rx="22.500" fill="#3f3f3f"/><path d="M953.500 1319v45M1013.500 1319v45M1073.500 1319v45" stroke="#2a2a2a" stroke-width="1.200"/>
<path d="M917.500 1334.800l1.800-2.600h7.400l1.800 2.600h5a2 2 0 0 1 2 2v11.400a2 2 0 0 1-2 2h-21a2 2 0 0 1-2-2v-11.400a2 2 0 0 1 2-2z" fill="#e6e6e6"/><circle cx="923" cy="1342.800" r="4.600" fill="#3f3f3f" stroke="#e6e6e6" stroke-width="0"/><circle cx="923" cy="1342.800" r="4.400" fill="none" stroke="#3f3f3f" stroke-width="1.600"/><circle cx="923" cy="1342.800" r="3.600" fill="#e6e6e6"/><circle cx="923" cy="1342.800" r="3" fill="#3f3f3f" opacity="0"/>
<g fill="none" stroke="#eaeaea" stroke-width="2.400" stroke-linecap="round" stroke-linejoin="round"><rect x="976.200" y="1335" width="14" height="14" rx="1" stroke-width="2.600"/><path d="M972.200 1335.200v-2.800a1.600 1.600 0 0 1 1.600-1.600h2.800M989.800 1330.800h2.800a1.600 1.600 0 0 1 1.600 1.600v2.800M994.200 1348.800v2.800a1.600 1.600 0 0 1-1.600 1.600h-2.800M976.600 1353.200h-2.800a1.600 1.600 0 0 1-1.600-1.600v-2.800"/>
<circle cx="1040.500" cy="1339.500" r="7.400"/><path d="M1046 1345l7.500 7.500" stroke-width="3"/><path d="M1037 1339.500h7M1040.500 1336v7" stroke-width="2"/>
<circle cx="1100.500" cy="1339.500" r="7.400"/><path d="M1106 1345l7.500 7.500" stroke-width="3"/><path d="M1097 1339.500h7" stroke-width="2"/></g>
</g>
<path d="M781.600 1403V218.600H2530.400V1403" fill="none" stroke="#eda63c" stroke-width="1.300"/>
</svg>
</body>
</html>
